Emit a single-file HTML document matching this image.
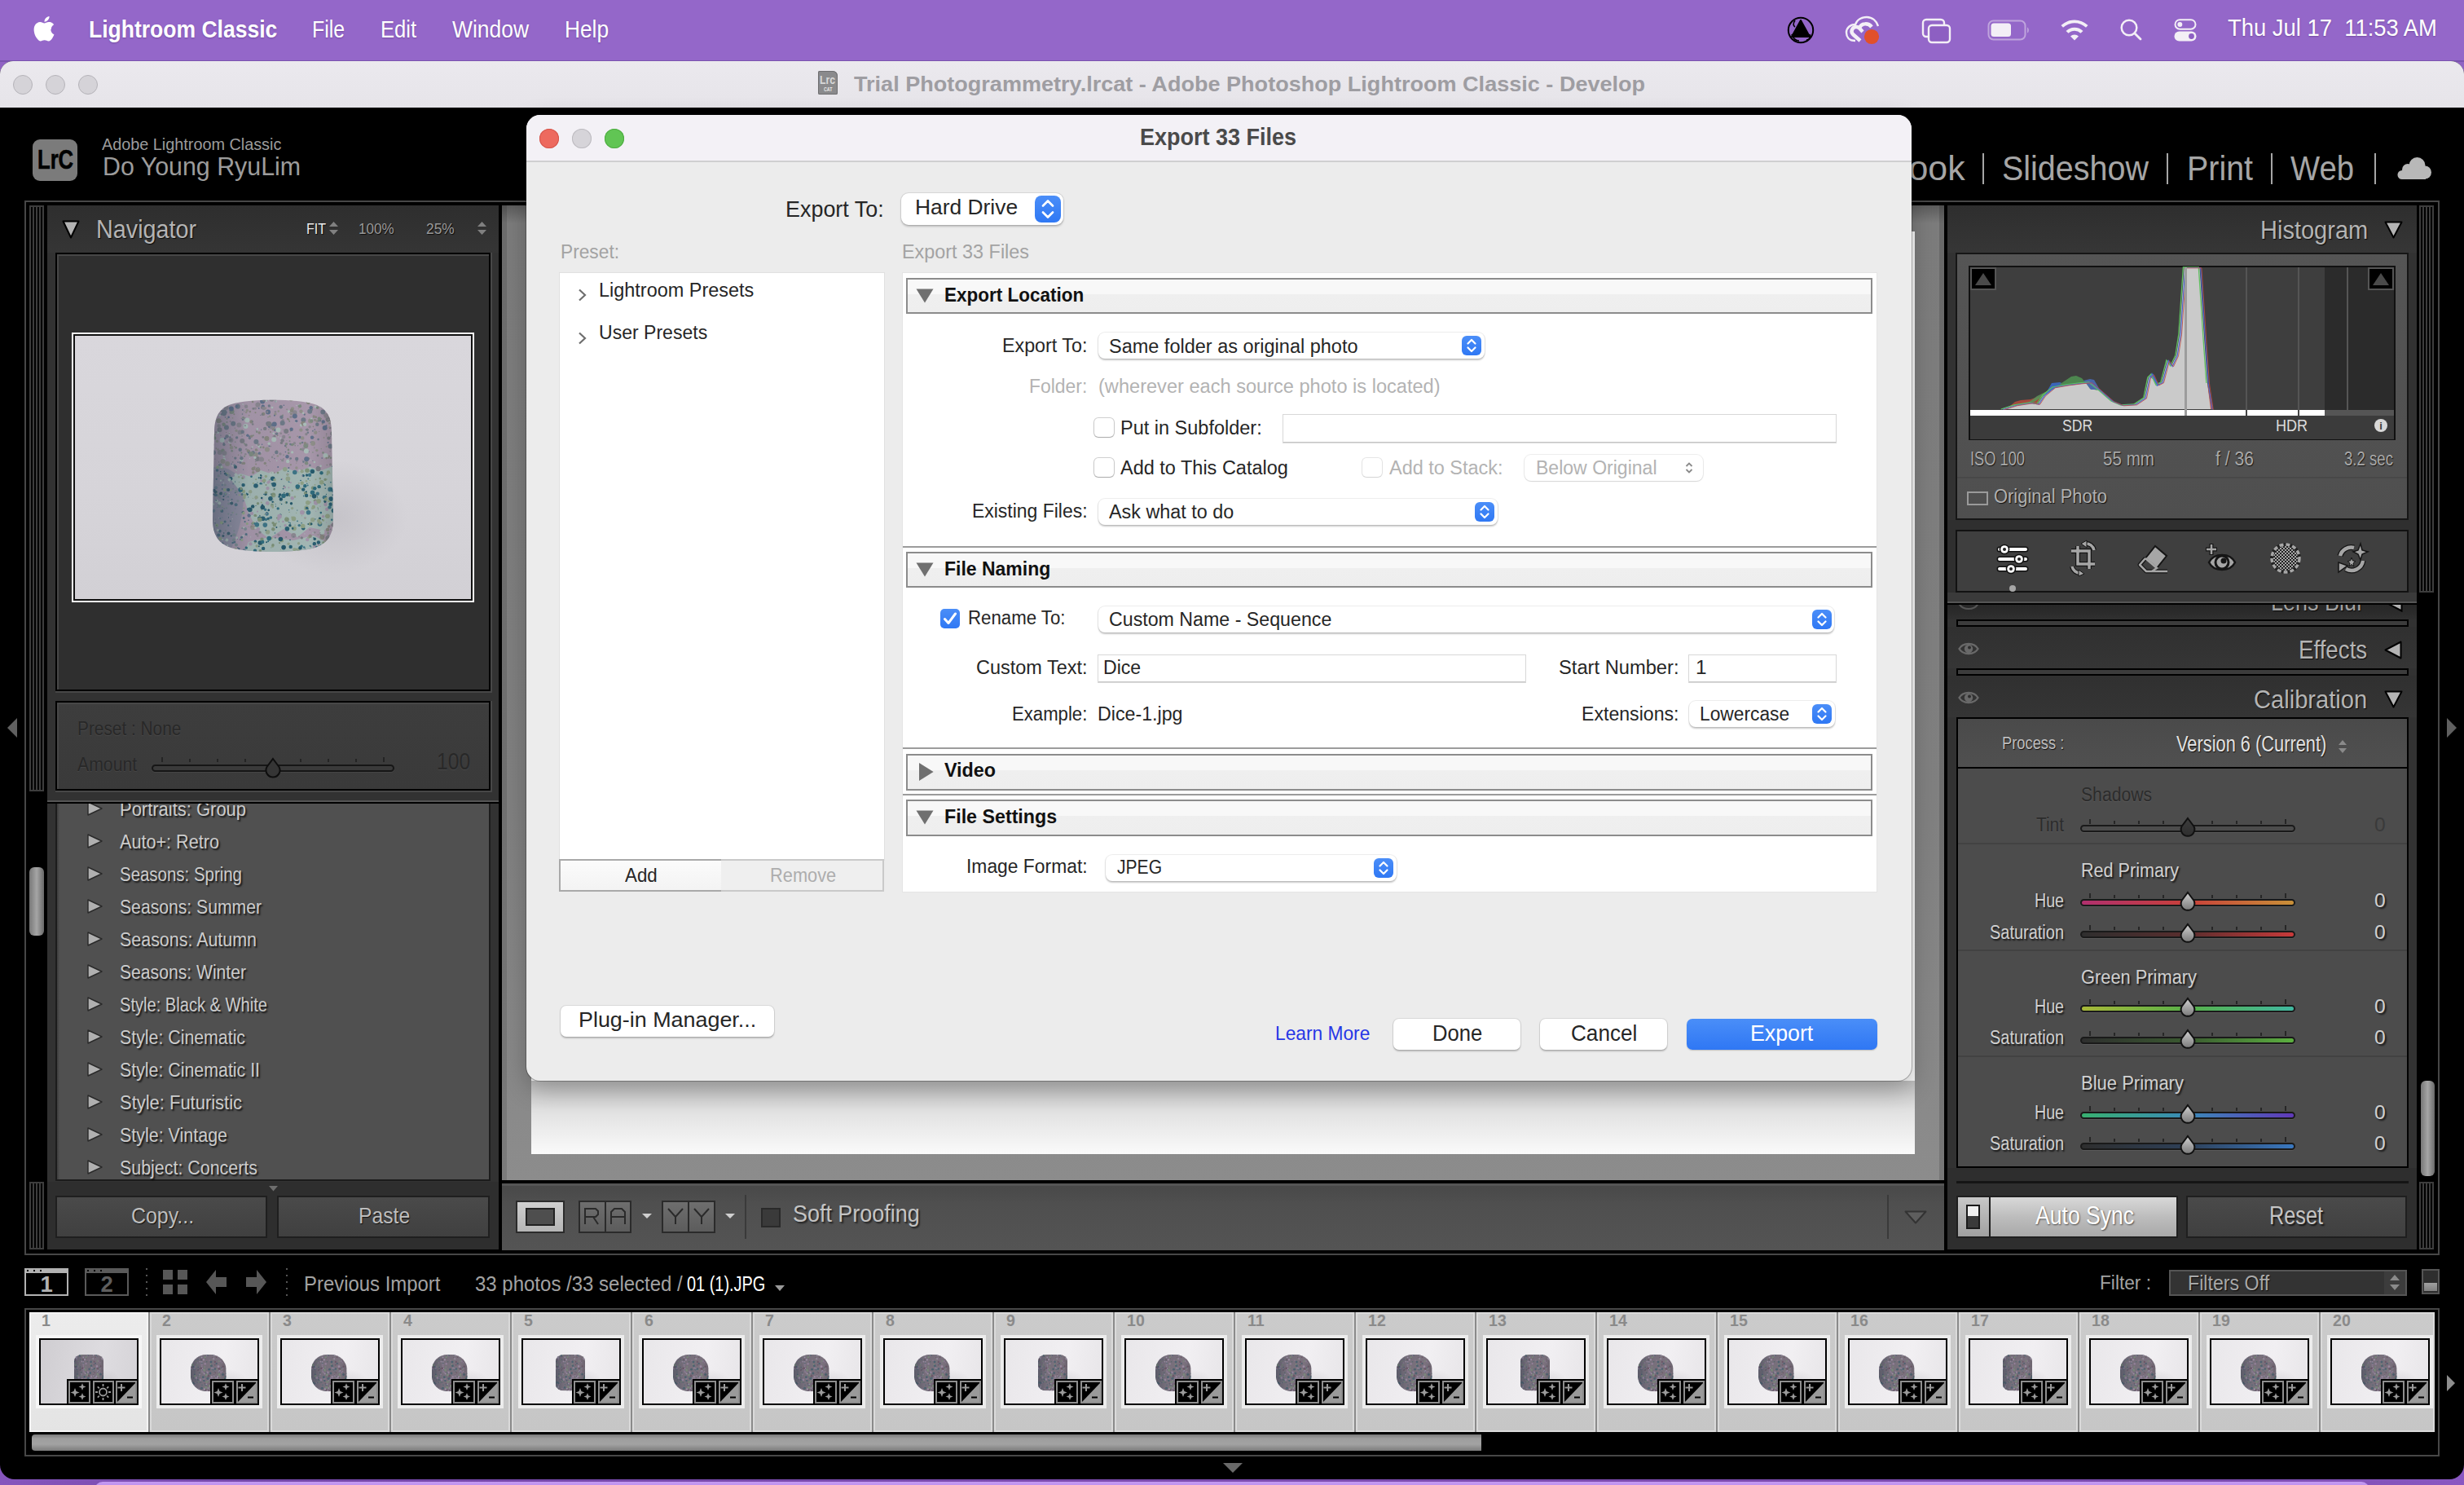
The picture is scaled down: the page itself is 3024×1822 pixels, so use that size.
<!DOCTYPE html><html><head><meta charset="utf-8"><style>
*{margin:0;padding:0;box-sizing:border-box}
html,body{width:3024px;height:1822px;overflow:hidden;background:#9063c4;font-family:"Liberation Sans",sans-serif}
.r{position:absolute}
.t{position:absolute;white-space:pre;line-height:1;transform-origin:0 0}
svg{position:absolute;overflow:visible}
</style></head><body>
<svg style="position:absolute;width:0;height:0;left:0;top:0" width="0" height="0"><defs><clipPath id="dclip"><path d="M24 7 C45 0 105 0 126 7 C142 12 147 24 147 42 L149 148 C149 170 140 181 118 185 C95 189 55 189 32 185 C10 181 1 170 1 148 L3 42 C3 24 8 12 24 7Z"/></clipPath><linearGradient id="dgrad" x1="0" y1="0" x2="0" y2="1"><stop offset="0" stop-color="#a898ab"/><stop offset="1" stop-color="#a495a8"/></linearGradient><linearGradient id="dshade" x1="0" y1="0" x2="1" y2="0"><stop offset="0" stop-color="#203040" stop-opacity="0.35"/><stop offset="0.3" stop-color="#203040" stop-opacity="0.05"/><stop offset="0.8" stop-color="#000" stop-opacity="0"/><stop offset="1" stop-color="#000" stop-opacity="0.12"/></linearGradient><symbol id="dice" viewBox="0 0 150 188" preserveAspectRatio="none"><g clip-path="url(#dclip)"><rect width="150" height="188" fill="url(#dgrad)"/><path d="M0 85 C15 82 28 88 36 100 C42 125 38 155 22 188 L0 188Z" fill="#7c8799" opacity="0.55"/><path d="M22,98 L35,92 L48,96 L60,88 L75,93 L90,85 L105,90 L120,84 L135,88 L150,82 L150,150 L138,162 L120,158 L105,170 L88,160 L70,172 L55,160 L45,140 L38,118Z" fill="#a2b6b3"/><path d="M45,176 L70,170 L100,174 L125,168 L140,176 L130,188 L40,188Z" fill="#a2b6b3"/><circle cx="48.6" cy="28.4" r="2.2" fill="#86867f"/><circle cx="10.9" cy="100.7" r="1.1" fill="#a8b8b4"/><circle cx="8.7" cy="95.4" r="0.6" fill="#4f6f80"/><circle cx="65.0" cy="13.1" r="0.6" fill="#7d8a80"/><circle cx="8.9" cy="106.3" r="0.8" fill="#7c8a90"/><circle cx="94.1" cy="178.2" r="1.7" fill="#8fa08a"/><circle cx="7.4" cy="41.6" r="1.7" fill="#a9bcb8"/><circle cx="43.4" cy="27.1" r="0.6" fill="#8a8790"/><circle cx="84.0" cy="128.2" r="0.6" fill="#7c9078"/><circle cx="55.9" cy="103.0" r="0.6" fill="#2f6b7c"/><circle cx="92.9" cy="93.3" r="1.7" fill="#8fa08a"/><circle cx="116.6" cy="87.5" r="1.3" fill="#26586a"/><circle cx="45.0" cy="149.3" r="0.8" fill="#4f6f80"/><circle cx="86.2" cy="98.7" r="1.0" fill="#a093a8"/><circle cx="43.2" cy="184.3" r="0.6" fill="#8fa08a"/><circle cx="24.7" cy="64.3" r="1.3" fill="#7d8a80"/><circle cx="5.9" cy="125.6" r="2.0" fill="#a8b8b4"/><circle cx="118.4" cy="153.9" r="1.0" fill="#26586a"/><circle cx="89.2" cy="109.0" r="1.3" fill="#2a5f72"/><circle cx="126.0" cy="177.6" r="1.3" fill="#2a5f72"/><circle cx="9.1" cy="131.9" r="2.0" fill="#7c8a90"/><circle cx="123.3" cy="53.5" r="1.3" fill="#5f708a"/><circle cx="3.4" cy="86.8" r="0.8" fill="#a8b8b4"/><circle cx="17.6" cy="11.1" r="3.0" fill="#8a8790"/><circle cx="19.4" cy="46.6" r="1.3" fill="#8f8f8a"/><circle cx="12.1" cy="84.4" r="2.0" fill="#8d9f84"/><circle cx="132.5" cy="154.0" r="2.8" fill="#3d7486"/><circle cx="106.0" cy="185.5" r="2.2" fill="#8fa08a"/><circle cx="143.7" cy="28.4" r="0.8" fill="#a9bcb8"/><circle cx="34.8" cy="43.9" r="1.3" fill="#a9bcb8"/><circle cx="39.4" cy="0.8" r="1.3" fill="#5f708a"/><circle cx="91.5" cy="59.9" r="0.8" fill="#86867f"/><circle cx="68.5" cy="163.7" r="2.8" fill="#8fa08a"/><circle cx="59.7" cy="74.1" r="1.3" fill="#7d8a80"/><circle cx="9.3" cy="12.7" r="0.8" fill="#8f8f8a"/><circle cx="24.3" cy="63.9" r="0.6" fill="#7a7d84"/><circle cx="0.0" cy="28.4" r="0.6" fill="#5f708a"/><circle cx="92.1" cy="13.2" r="0.8" fill="#7d8a80"/><circle cx="22.3" cy="47.4" r="1.0" fill="#5f708a"/><circle cx="71.1" cy="21.7" r="1.3" fill="#8f8f8a"/><circle cx="72.1" cy="58.6" r="0.8" fill="#7a7d84"/><circle cx="112.5" cy="139.2" r="1.3" fill="#8d9f84"/><circle cx="77.5" cy="38.6" r="1.7" fill="#5f708a"/><circle cx="22.0" cy="102.1" r="0.6" fill="#a8b8b4"/><circle cx="44.7" cy="120.9" r="0.6" fill="#3d7486"/><circle cx="77.8" cy="170.8" r="1.0" fill="#6e7a88"/><circle cx="79.9" cy="146.5" r="1.0" fill="#7c9078"/><circle cx="92.0" cy="148.2" r="2.8" fill="#7c9078"/><circle cx="120.9" cy="153.8" r="2.2" fill="#7c9078"/><circle cx="30.0" cy="92.6" r="0.6" fill="#4f6f80"/><circle cx="118.5" cy="88.8" r="0.8" fill="#26586a"/><circle cx="67.1" cy="176.2" r="1.0" fill="#26586a"/><circle cx="12.1" cy="19.2" r="1.3" fill="#6e7a88"/><circle cx="50.7" cy="90.7" r="1.7" fill="#86867f"/><circle cx="71.9" cy="122.8" r="2.8" fill="#2a5f72"/><circle cx="125.2" cy="22.5" r="1.3" fill="#6e7a88"/><circle cx="71.7" cy="33.6" r="3.0" fill="#5f708a"/><circle cx="13.0" cy="177.9" r="1.5" fill="#3e6070"/><circle cx="60.2" cy="178.0" r="2.2" fill="#8d9f84"/><circle cx="25.5" cy="23.9" r="0.8" fill="#8f8f8a"/><circle cx="121.0" cy="27.5" r="3.0" fill="#8f8f8a"/><circle cx="98.6" cy="65.9" r="1.7" fill="#a9bcb8"/><circle cx="3.2" cy="150.3" r="0.6" fill="#a8b8b4"/><circle cx="112.4" cy="26.2" r="3.0" fill="#6e7a88"/><circle cx="123.9" cy="39.7" r="1.0" fill="#6e7a88"/><circle cx="43.9" cy="45.2" r="1.7" fill="#5f708a"/><circle cx="38.9" cy="78.8" r="0.8" fill="#86867f"/><circle cx="136.5" cy="66.5" r="1.3" fill="#7d8a80"/><circle cx="124.1" cy="165.1" r="0.8" fill="#a9bcb8"/><circle cx="78.5" cy="3.5" r="1.3" fill="#a9bcb8"/><circle cx="91.3" cy="145.9" r="0.8" fill="#8d9f84"/><circle cx="21.2" cy="116.4" r="0.6" fill="#a8b8b4"/><circle cx="9.3" cy="128.3" r="2.0" fill="#a8b8b4"/><circle cx="72.4" cy="146.0" r="1.7" fill="#2f6b7c"/><circle cx="37.3" cy="52.1" r="3.0" fill="#7a7d84"/><circle cx="76.2" cy="105.6" r="2.8" fill="#2a5f72"/><circle cx="66.5" cy="115.2" r="1.7" fill="#7c9078"/><circle cx="103.9" cy="85.0" r="1.7" fill="#8f8f8a"/><circle cx="76.2" cy="46.6" r="1.7" fill="#8a8790"/><circle cx="138.4" cy="167.8" r="0.8" fill="#8f8f8a"/><circle cx="20.6" cy="22.9" r="1.3" fill="#5f708a"/><circle cx="10.9" cy="45.2" r="0.6" fill="#6e7a88"/><circle cx="100.4" cy="147.4" r="2.8" fill="#8d9f84"/><circle cx="140.9" cy="121.0" r="1.0" fill="#8d9f84"/><circle cx="38.0" cy="25.8" r="1.3" fill="#6e7a88"/><circle cx="112.0" cy="17.7" r="1.3" fill="#a9bcb8"/><circle cx="148.5" cy="156.5" r="0.8" fill="#7d8a80"/><circle cx="149.1" cy="75.9" r="1.3" fill="#6e7a88"/><circle cx="53.5" cy="17.3" r="1.0" fill="#86867f"/><circle cx="50.7" cy="86.2" r="2.2" fill="#86867f"/><circle cx="57.7" cy="97.3" r="1.0" fill="#2a5f72"/><circle cx="16.9" cy="172.7" r="0.8" fill="#4f6f80"/><circle cx="12.6" cy="51.1" r="3.0" fill="#a9bcb8"/><circle cx="40.6" cy="24.4" r="1.3" fill="#8a8790"/><circle cx="60.9" cy="100.9" r="1.7" fill="#a093a8"/><circle cx="105.1" cy="16.8" r="0.6" fill="#a9bcb8"/><circle cx="63.8" cy="13.6" r="0.6" fill="#7a7d84"/><circle cx="120.2" cy="15.7" r="3.0" fill="#6e7a88"/><circle cx="10.0" cy="162.2" r="1.5" fill="#4f6f80"/><circle cx="50.9" cy="104.0" r="1.0" fill="#8d9f84"/><circle cx="6.5" cy="133.4" r="0.6" fill="#6a8090"/><circle cx="39.3" cy="34.1" r="1.0" fill="#8a8790"/><circle cx="79.7" cy="38.7" r="1.3" fill="#a9bcb8"/><circle cx="40.6" cy="151.1" r="1.1" fill="#4f6f80"/><circle cx="2.3" cy="137.8" r="2.0" fill="#6a8090"/><circle cx="77.1" cy="46.2" r="1.3" fill="#7a7d84"/><circle cx="98.7" cy="122.2" r="2.2" fill="#a093a8"/><circle cx="81.9" cy="167.1" r="1.7" fill="#8a8790"/><circle cx="103.2" cy="184.7" r="1.0" fill="#7c9078"/><circle cx="124.8" cy="132.9" r="2.2" fill="#8d9f84"/><circle cx="60.7" cy="65.3" r="0.6" fill="#a9bcb8"/><circle cx="2.1" cy="117.6" r="1.1" fill="#3e6070"/><circle cx="24.5" cy="15.9" r="3.0" fill="#7d8a80"/><circle cx="130.6" cy="126.1" r="1.0" fill="#7c9078"/><circle cx="103.9" cy="8.5" r="0.8" fill="#a9bcb8"/><circle cx="40.4" cy="0.7" r="1.0" fill="#5f708a"/><circle cx="145.9" cy="102.8" r="0.8" fill="#2f6b7c"/><circle cx="144.9" cy="58.2" r="1.0" fill="#a9bcb8"/><circle cx="0.2" cy="71.7" r="1.3" fill="#8a8790"/><circle cx="75.4" cy="37.8" r="1.7" fill="#86867f"/><circle cx="13.6" cy="153.6" r="0.8" fill="#3e6070"/><circle cx="88.0" cy="74.1" r="1.0" fill="#8a8790"/><circle cx="94.5" cy="15.9" r="1.7" fill="#a9bcb8"/><circle cx="98.6" cy="134.6" r="1.7" fill="#8fa08a"/><circle cx="114.6" cy="135.5" r="1.3" fill="#8d9f84"/><circle cx="42.6" cy="116.3" r="0.8" fill="#2f6b7c"/><circle cx="123.7" cy="134.4" r="1.7" fill="#8fa08a"/><circle cx="110.1" cy="152.7" r="0.8" fill="#2f6b7c"/><circle cx="124.0" cy="109.8" r="2.2" fill="#7c9078"/><circle cx="12.8" cy="7.9" r="2.2" fill="#5f708a"/><circle cx="143.9" cy="70.8" r="1.3" fill="#86867f"/><circle cx="94.2" cy="117.7" r="2.2" fill="#7c9078"/><circle cx="73.4" cy="0.6" r="3.0" fill="#7a7d84"/><circle cx="112.2" cy="94.6" r="1.7" fill="#2a5f72"/><circle cx="98.9" cy="12.4" r="2.2" fill="#8f8f8a"/><circle cx="37.8" cy="14.0" r="1.0" fill="#6e7a88"/><circle cx="109.4" cy="38.6" r="2.2" fill="#8f8f8a"/><circle cx="74.1" cy="71.9" r="1.3" fill="#8a8790"/><circle cx="115.0" cy="116.0" r="2.2" fill="#7c9078"/><circle cx="11.6" cy="27.7" r="1.0" fill="#8a8790"/><circle cx="93.2" cy="25.1" r="1.3" fill="#86867f"/><circle cx="72.9" cy="182.8" r="0.6" fill="#7c9078"/><circle cx="101.4" cy="54.7" r="1.7" fill="#8a8790"/><circle cx="69.7" cy="87.7" r="0.6" fill="#6e7a88"/><circle cx="46.8" cy="16.1" r="1.3" fill="#86867f"/><circle cx="43.4" cy="14.4" r="1.7" fill="#8f8f8a"/><circle cx="149.1" cy="72.7" r="0.8" fill="#7a7d84"/><circle cx="87.2" cy="26.6" r="1.7" fill="#8a8790"/><circle cx="142.9" cy="24.9" r="3.0" fill="#8a8790"/><circle cx="133.0" cy="132.2" r="0.8" fill="#a093a8"/><circle cx="134.7" cy="91.4" r="0.6" fill="#8d9f84"/><circle cx="0.5" cy="92.4" r="1.5" fill="#3e6070"/><circle cx="45.3" cy="26.5" r="1.0" fill="#7d8a80"/><circle cx="47.4" cy="158.0" r="0.6" fill="#5f708a"/><circle cx="112.6" cy="157.8" r="0.6" fill="#7c9078"/><circle cx="107.0" cy="169.5" r="1.0" fill="#8a8790"/><circle cx="55.8" cy="73.9" r="3.0" fill="#7a7d84"/><circle cx="54.1" cy="80.5" r="1.0" fill="#86867f"/><circle cx="42.1" cy="9.7" r="2.2" fill="#8a8790"/><circle cx="95.2" cy="28.0" r="1.0" fill="#7d8a80"/><circle cx="76.6" cy="35.7" r="1.0" fill="#7d8a80"/><circle cx="132.6" cy="152.6" r="2.2" fill="#8fa08a"/><circle cx="137.0" cy="176.9" r="1.7" fill="#7c9078"/><circle cx="107.9" cy="9.3" r="2.2" fill="#7d8a80"/><circle cx="67.6" cy="141.5" r="2.2" fill="#3d7486"/><circle cx="72.8" cy="171.4" r="1.7" fill="#8d9f84"/><circle cx="25.6" cy="78.0" r="1.0" fill="#8a8790"/><circle cx="38.4" cy="138.9" r="1.1" fill="#3e6070"/><circle cx="98.4" cy="56.6" r="1.7" fill="#7d8a80"/><circle cx="18.0" cy="120.9" r="0.6" fill="#6a8090"/><circle cx="75.1" cy="152.6" r="1.7" fill="#7c9078"/><circle cx="67.9" cy="62.6" r="3.0" fill="#8f8f8a"/><circle cx="64.1" cy="103.0" r="0.8" fill="#2a5f72"/><circle cx="26.2" cy="104.5" r="1.1" fill="#6a8090"/><circle cx="55.2" cy="152.2" r="0.8" fill="#2f6b7c"/><circle cx="112.4" cy="77.6" r="1.3" fill="#6e7a88"/><circle cx="56.5" cy="63.6" r="0.6" fill="#8f8f8a"/><circle cx="41.6" cy="181.9" r="0.8" fill="#7c8a90"/><circle cx="75.5" cy="118.4" r="2.8" fill="#7c9078"/><circle cx="13.9" cy="168.6" r="1.5" fill="#3e6070"/><circle cx="96.9" cy="81.2" r="1.0" fill="#86867f"/><circle cx="19.1" cy="79.9" r="3.0" fill="#8f8f8a"/><circle cx="145.2" cy="92.1" r="0.6" fill="#8fa08a"/><circle cx="139.5" cy="174.5" r="1.7" fill="#8f8f8a"/><circle cx="145.8" cy="46.7" r="0.6" fill="#6e7a88"/><circle cx="23.2" cy="98.2" r="2.2" fill="#2a5f72"/><circle cx="141.2" cy="135.7" r="2.2" fill="#a093a8"/><circle cx="12.8" cy="146.0" r="0.6" fill="#6a8090"/><circle cx="34.9" cy="172.9" r="1.1" fill="#6a8090"/><circle cx="94.0" cy="99.3" r="1.3" fill="#2a5f72"/><circle cx="14.9" cy="56.5" r="1.7" fill="#6e7a88"/><circle cx="58.2" cy="42.0" r="1.7" fill="#86867f"/><circle cx="1.6" cy="56.7" r="1.3" fill="#8a8790"/><circle cx="143.8" cy="121.2" r="0.8" fill="#a093a8"/><circle cx="78.9" cy="102.8" r="0.6" fill="#8fa08a"/><circle cx="105.7" cy="57.8" r="0.6" fill="#6e7a88"/><circle cx="74.7" cy="126.8" r="1.3" fill="#2a5f72"/><circle cx="38.6" cy="125.5" r="1.1" fill="#6a8090"/><circle cx="73.9" cy="130.8" r="2.2" fill="#8fa08a"/><circle cx="54.3" cy="74.5" r="0.6" fill="#8a8790"/><circle cx="110.9" cy="94.9" r="0.8" fill="#a093a8"/><circle cx="145.5" cy="58.6" r="3.0" fill="#6e7a88"/><circle cx="34.6" cy="41.6" r="3.0" fill="#8a8790"/><circle cx="16.4" cy="117.2" r="2.0" fill="#6a8090"/><circle cx="134.5" cy="91.2" r="2.2" fill="#2f6b7c"/><circle cx="142.3" cy="27.5" r="1.3" fill="#86867f"/><circle cx="31.9" cy="183.1" r="0.8" fill="#3e6070"/><circle cx="7.8" cy="11.3" r="1.3" fill="#8f8f8a"/><circle cx="134.7" cy="166.1" r="2.2" fill="#7a7d84"/><circle cx="149.6" cy="175.1" r="1.0" fill="#6e7a88"/><circle cx="27.8" cy="175.9" r="1.5" fill="#4f6f80"/><circle cx="46.8" cy="136.4" r="2.8" fill="#26586a"/><circle cx="147.7" cy="83.2" r="0.6" fill="#2f6b7c"/><circle cx="11.7" cy="15.2" r="1.3" fill="#7a7d84"/><circle cx="84.2" cy="142.7" r="1.3" fill="#26586a"/><circle cx="115.3" cy="58.0" r="3.0" fill="#7d8a80"/><circle cx="13.2" cy="132.6" r="0.8" fill="#8d9f84"/><circle cx="81.2" cy="83.9" r="1.0" fill="#5f708a"/><circle cx="110.6" cy="89.2" r="2.2" fill="#8fa08a"/><circle cx="37.2" cy="117.6" r="1.5" fill="#4f6f80"/><circle cx="56.3" cy="87.2" r="3.0" fill="#86867f"/><circle cx="38.6" cy="140.5" r="2.0" fill="#8d9f84"/><circle cx="54.4" cy="63.0" r="1.7" fill="#86867f"/><circle cx="39.3" cy="134.7" r="1.1" fill="#8d9f84"/><circle cx="44.6" cy="135.7" r="1.7" fill="#2a5f72"/><circle cx="3.6" cy="44.0" r="1.3" fill="#8f8f8a"/><circle cx="143.1" cy="72.7" r="1.0" fill="#7d8a80"/><circle cx="122.2" cy="24.9" r="1.3" fill="#a9bcb8"/><circle cx="1.3" cy="175.0" r="1.1" fill="#7c8a90"/><circle cx="115.9" cy="114.2" r="1.0" fill="#26586a"/><circle cx="69.1" cy="147.4" r="1.7" fill="#2a5f72"/><circle cx="76.8" cy="73.6" r="0.8" fill="#6e7a88"/><circle cx="61.2" cy="122.1" r="1.3" fill="#26586a"/><circle cx="24.1" cy="80.2" r="0.6" fill="#4f6f80"/><circle cx="39.7" cy="15.8" r="0.6" fill="#7d8a80"/><circle cx="74.8" cy="133.4" r="1.3" fill="#8d9f84"/><circle cx="35.1" cy="78.4" r="1.7" fill="#6e7a88"/><circle cx="112.2" cy="159.2" r="2.2" fill="#2a5f72"/><circle cx="117.0" cy="55.3" r="1.0" fill="#8a8790"/><circle cx="55.9" cy="138.8" r="0.8" fill="#a093a8"/><circle cx="37.1" cy="46.1" r="0.8" fill="#8a8790"/><circle cx="132.6" cy="108.7" r="1.0" fill="#2a5f72"/><circle cx="59.4" cy="186.6" r="1.7" fill="#7c9078"/><circle cx="97.4" cy="18.9" r="1.3" fill="#86867f"/><circle cx="15.3" cy="89.3" r="0.8" fill="#3e6070"/><circle cx="137.2" cy="7.6" r="1.0" fill="#6e7a88"/><circle cx="17.9" cy="35.6" r="3.0" fill="#6e7a88"/><circle cx="139.5" cy="70.0" r="3.0" fill="#a9bcb8"/><circle cx="67.4" cy="48.9" r="3.0" fill="#86867f"/><circle cx="15.9" cy="112.1" r="2.0" fill="#8d9f84"/><circle cx="32.6" cy="69.3" r="0.8" fill="#86867f"/><circle cx="30.6" cy="47.9" r="1.7" fill="#6e7a88"/><circle cx="122.2" cy="153.9" r="1.3" fill="#26586a"/><circle cx="27.8" cy="58.7" r="0.8" fill="#86867f"/><circle cx="119.3" cy="103.0" r="0.6" fill="#8fa08a"/><circle cx="15.2" cy="74.3" r="1.7" fill="#a9bcb8"/><circle cx="95.9" cy="17.1" r="0.8" fill="#7d8a80"/><circle cx="104.3" cy="77.0" r="1.0" fill="#8a8790"/><circle cx="62.7" cy="9.7" r="2.2" fill="#5f708a"/><circle cx="62.1" cy="3.4" r="3.0" fill="#5f708a"/><circle cx="96.7" cy="73.5" r="1.3" fill="#6e7a88"/><circle cx="141.3" cy="81.6" r="0.8" fill="#7d8a80"/><circle cx="17.0" cy="17.0" r="1.7" fill="#5f708a"/><circle cx="69.1" cy="30.6" r="0.6" fill="#86867f"/><circle cx="82.7" cy="120.4" r="1.3" fill="#2a5f72"/><circle cx="85.9" cy="174.3" r="2.2" fill="#8d9f84"/><circle cx="21.9" cy="53.3" r="1.7" fill="#a9bcb8"/><circle cx="138.8" cy="20.5" r="1.3" fill="#6e7a88"/><circle cx="45.2" cy="157.4" r="0.6" fill="#8f8f8a"/><circle cx="47.2" cy="114.2" r="2.2" fill="#8fa08a"/><circle cx="12.9" cy="133.9" r="0.8" fill="#7c8a90"/><circle cx="117.9" cy="41.8" r="1.3" fill="#6e7a88"/><circle cx="124.4" cy="34.4" r="0.8" fill="#86867f"/><circle cx="60.0" cy="97.4" r="1.3" fill="#26586a"/><circle cx="18.5" cy="46.4" r="2.2" fill="#6e7a88"/><circle cx="6.2" cy="105.7" r="0.6" fill="#7c8a90"/><circle cx="125.7" cy="22.1" r="1.7" fill="#8f8f8a"/><circle cx="82.5" cy="117.9" r="1.0" fill="#8fa08a"/><circle cx="46.2" cy="46.9" r="1.3" fill="#5f708a"/><circle cx="67.0" cy="82.4" r="0.6" fill="#86867f"/><circle cx="92.8" cy="92.0" r="0.8" fill="#a093a8"/><circle cx="114.5" cy="146.6" r="1.3" fill="#8d9f84"/><circle cx="121.6" cy="75.3" r="0.6" fill="#a9bcb8"/><circle cx="53.8" cy="68.7" r="3.0" fill="#8f8f8a"/><circle cx="75.7" cy="123.5" r="0.6" fill="#8d9f84"/><circle cx="12.3" cy="137.9" r="2.0" fill="#4f6f80"/><circle cx="8.1" cy="94.7" r="1.5" fill="#7c8a90"/><circle cx="142.6" cy="25.6" r="3.0" fill="#7a7d84"/><circle cx="149.4" cy="137.6" r="2.8" fill="#2a5f72"/><circle cx="29.1" cy="184.6" r="1.5" fill="#8d9f84"/><circle cx="143.5" cy="172.2" r="0.8" fill="#6e7a88"/><circle cx="9.8" cy="66.0" r="3.0" fill="#8a8790"/><circle cx="23.8" cy="168.5" r="1.1" fill="#3e6070"/><circle cx="21.5" cy="94.4" r="1.5" fill="#6a8090"/><circle cx="88.8" cy="115.8" r="0.8" fill="#26586a"/><circle cx="55.8" cy="37.4" r="1.3" fill="#a9bcb8"/><circle cx="95.5" cy="52.3" r="1.0" fill="#7d8a80"/><circle cx="25.3" cy="147.6" r="0.6" fill="#a8b8b4"/><circle cx="7.3" cy="161.4" r="1.5" fill="#a8b8b4"/><circle cx="78.2" cy="129.5" r="0.6" fill="#3d7486"/><circle cx="148.9" cy="118.4" r="1.3" fill="#26586a"/><circle cx="39.7" cy="186.2" r="2.0" fill="#6a8090"/><circle cx="54.0" cy="143.8" r="1.3" fill="#7c9078"/><circle cx="26.5" cy="139.8" r="0.6" fill="#8d9f84"/><circle cx="123.0" cy="47.7" r="2.2" fill="#5f708a"/><circle cx="110.0" cy="140.5" r="0.8" fill="#8d9f84"/><circle cx="43.6" cy="117.6" r="1.3" fill="#26586a"/><circle cx="134.3" cy="24.8" r="0.8" fill="#86867f"/><circle cx="3.3" cy="0.5" r="1.0" fill="#8a8790"/><circle cx="16.0" cy="67.1" r="0.8" fill="#7d8a80"/><circle cx="87.5" cy="110.7" r="0.8" fill="#26586a"/><circle cx="93.6" cy="89.3" r="0.8" fill="#2f6b7c"/><circle cx="140.5" cy="45.8" r="0.8" fill="#8f8f8a"/><circle cx="14.4" cy="120.0" r="1.1" fill="#3e6070"/><circle cx="121.7" cy="181.8" r="0.6" fill="#26586a"/><circle cx="89.2" cy="108.8" r="1.7" fill="#a093a8"/><circle cx="37.3" cy="169.9" r="0.6" fill="#4f6f80"/><circle cx="79.7" cy="76.3" r="0.8" fill="#a9bcb8"/><circle cx="8.8" cy="146.4" r="0.6" fill="#a8b8b4"/><circle cx="82.6" cy="176.9" r="0.8" fill="#8fa08a"/><circle cx="29.9" cy="114.3" r="2.0" fill="#7c8a90"/><circle cx="96.2" cy="152.9" r="0.8" fill="#3d7486"/><circle cx="9.6" cy="117.7" r="1.5" fill="#7c8a90"/><circle cx="80.8" cy="70.5" r="1.3" fill="#8f8f8a"/><circle cx="12.1" cy="123.2" r="0.8" fill="#6a8090"/><circle cx="149.5" cy="49.1" r="2.2" fill="#86867f"/><circle cx="18.5" cy="167.6" r="1.1" fill="#7c8a90"/><circle cx="7.9" cy="119.5" r="1.5" fill="#7c8a90"/><circle cx="118.3" cy="98.4" r="1.0" fill="#3d7486"/><circle cx="96.3" cy="181.4" r="0.8" fill="#2a5f72"/><circle cx="132.0" cy="2.9" r="1.0" fill="#6e7a88"/><circle cx="126.3" cy="38.1" r="0.8" fill="#5f708a"/><circle cx="28.8" cy="73.1" r="1.7" fill="#6e7a88"/><circle cx="56.9" cy="160.2" r="2.2" fill="#a093a8"/><circle cx="70.8" cy="99.8" r="0.6" fill="#2f6b7c"/><circle cx="65.6" cy="136.2" r="1.7" fill="#3d7486"/><circle cx="118.4" cy="73.6" r="1.7" fill="#7a7d84"/><circle cx="84.8" cy="32.3" r="0.6" fill="#86867f"/><circle cx="16.8" cy="116.9" r="0.8" fill="#8d9f84"/><circle cx="146.6" cy="131.7" r="0.6" fill="#2f6b7c"/><circle cx="20.8" cy="121.0" r="0.6" fill="#7c8a90"/><circle cx="10.2" cy="8.8" r="3.0" fill="#5f708a"/><circle cx="29.9" cy="179.5" r="2.0" fill="#7c8a90"/><circle cx="9.9" cy="163.1" r="1.5" fill="#4f6f80"/><circle cx="37.0" cy="38.2" r="0.6" fill="#86867f"/><circle cx="142.4" cy="171.3" r="3.0" fill="#7a7d84"/><circle cx="123.8" cy="118.7" r="1.0" fill="#a093a8"/><circle cx="15.0" cy="18.4" r="3.0" fill="#6e7a88"/><circle cx="44.2" cy="63.3" r="1.0" fill="#86867f"/><circle cx="52.6" cy="174.9" r="0.6" fill="#26586a"/><circle cx="136.6" cy="144.6" r="1.7" fill="#a093a8"/><circle cx="127.7" cy="116.2" r="0.6" fill="#8fa08a"/><circle cx="4.7" cy="97.5" r="0.6" fill="#8d9f84"/><circle cx="70.3" cy="9.0" r="1.7" fill="#6e7a88"/><circle cx="107.2" cy="155.6" r="1.7" fill="#3d7486"/><circle cx="25.6" cy="0.2" r="0.8" fill="#8a8790"/><circle cx="114.3" cy="183.8" r="0.6" fill="#26586a"/><circle cx="73.6" cy="92.4" r="3.0" fill="#a9bcb8"/><circle cx="145.1" cy="111.4" r="2.8" fill="#3d7486"/><circle cx="86.7" cy="29.9" r="3.0" fill="#6e7a88"/><circle cx="140.7" cy="43.5" r="0.8" fill="#7a7d84"/><circle cx="140.8" cy="144.2" r="1.3" fill="#2a5f72"/><circle cx="94.2" cy="66.9" r="1.3" fill="#7d8a80"/><circle cx="133.8" cy="140.1" r="1.3" fill="#2f6b7c"/><circle cx="55.8" cy="57.0" r="1.3" fill="#a9bcb8"/><circle cx="56.9" cy="166.2" r="0.8" fill="#8f8f8a"/><circle cx="19.0" cy="111.7" r="2.0" fill="#7c8a90"/><circle cx="5.1" cy="109.3" r="2.0" fill="#6a8090"/><circle cx="130.2" cy="84.7" r="1.7" fill="#5f708a"/><circle cx="25.4" cy="82.5" r="1.1" fill="#a8b8b4"/><circle cx="34.7" cy="62.8" r="2.2" fill="#6e7a88"/><circle cx="76.2" cy="50.3" r="3.0" fill="#a9bcb8"/><circle cx="108.5" cy="183.3" r="2.2" fill="#26586a"/><circle cx="90.4" cy="65.5" r="0.8" fill="#5f708a"/><circle cx="143.4" cy="48.6" r="2.2" fill="#7a7d84"/><circle cx="24.7" cy="123.7" r="0.8" fill="#3e6070"/><circle cx="22.6" cy="27.9" r="1.0" fill="#8a8790"/><circle cx="65.2" cy="36.9" r="2.2" fill="#7a7d84"/><circle cx="42.1" cy="166.4" r="1.5" fill="#4f6f80"/><circle cx="1.9" cy="160.6" r="1.5" fill="#7c8a90"/><circle cx="33.4" cy="184.4" r="1.1" fill="#3e6070"/><circle cx="3.3" cy="48.4" r="2.2" fill="#7d8a80"/><circle cx="0.8" cy="45.5" r="3.0" fill="#7d8a80"/><circle cx="105.2" cy="110.4" r="2.2" fill="#8fa08a"/><circle cx="126.9" cy="125.6" r="2.2" fill="#7c9078"/><circle cx="101.9" cy="120.6" r="1.3" fill="#8fa08a"/><circle cx="47.0" cy="118.1" r="0.6" fill="#8fa08a"/><circle cx="36.4" cy="75.2" r="2.2" fill="#a9bcb8"/><circle cx="37.5" cy="79.6" r="1.3" fill="#86867f"/><circle cx="93.2" cy="77.0" r="2.2" fill="#a9bcb8"/><circle cx="134.2" cy="61.7" r="0.6" fill="#7d8a80"/><circle cx="124.8" cy="170.7" r="0.6" fill="#2f6b7c"/><circle cx="37.7" cy="41.0" r="2.2" fill="#6e7a88"/><circle cx="77.9" cy="19.0" r="1.7" fill="#8f8f8a"/><circle cx="81.2" cy="134.9" r="1.7" fill="#2f6b7c"/><circle cx="95.9" cy="155.8" r="1.7" fill="#26586a"/><circle cx="61.6" cy="178.2" r="0.8" fill="#8d9f84"/><circle cx="58.9" cy="143.4" r="0.6" fill="#26586a"/><circle cx="95.6" cy="47.5" r="1.3" fill="#7d8a80"/><circle cx="9.2" cy="14.1" r="1.3" fill="#5f708a"/><circle cx="87.0" cy="20.5" r="1.0" fill="#7d8a80"/><circle cx="141.0" cy="99.1" r="0.8" fill="#8fa08a"/><circle cx="69.3" cy="30.9" r="3.0" fill="#7a7d84"/><circle cx="121.4" cy="119.2" r="1.3" fill="#7c9078"/><circle cx="122.2" cy="27.5" r="2.2" fill="#7d8a80"/><circle cx="70.2" cy="55.3" r="1.7" fill="#a9bcb8"/><circle cx="117.0" cy="88.2" r="2.8" fill="#7c9078"/><circle cx="40.1" cy="70.7" r="1.0" fill="#7d8a80"/><circle cx="101.8" cy="90.5" r="2.8" fill="#3d7486"/><circle cx="53.7" cy="123.0" r="1.0" fill="#a093a8"/><circle cx="72.7" cy="117.2" r="0.6" fill="#26586a"/><circle cx="22.9" cy="57.0" r="1.3" fill="#86867f"/><circle cx="12.8" cy="106.1" r="1.1" fill="#6a8090"/><circle cx="79.6" cy="64.9" r="1.7" fill="#86867f"/><circle cx="98.6" cy="39.4" r="0.6" fill="#8a8790"/><circle cx="37.5" cy="19.1" r="0.8" fill="#6e7a88"/><circle cx="27.8" cy="85.0" r="0.8" fill="#6a8090"/><circle cx="135.6" cy="148.8" r="0.8" fill="#2a5f72"/><circle cx="100.3" cy="168.1" r="3.0" fill="#8a8790"/><circle cx="29.6" cy="130.2" r="2.0" fill="#4f6f80"/><circle cx="111.3" cy="82.5" r="0.6" fill="#7a7d84"/><circle cx="39.7" cy="44.0" r="0.8" fill="#8f8f8a"/><circle cx="74.0" cy="11.0" r="1.3" fill="#a9bcb8"/><circle cx="105.1" cy="46.4" r="0.8" fill="#86867f"/><circle cx="24.1" cy="60.3" r="2.2" fill="#8f8f8a"/><circle cx="99.8" cy="158.0" r="1.0" fill="#8fa08a"/><circle cx="62.8" cy="180.6" r="0.6" fill="#8d9f84"/><circle cx="95.6" cy="119.6" r="0.6" fill="#2f6b7c"/><circle cx="91.5" cy="128.3" r="1.0" fill="#2a5f72"/><circle cx="76.6" cy="91.1" r="0.8" fill="#86867f"/><circle cx="32.0" cy="78.1" r="0.8" fill="#5f708a"/><circle cx="14.2" cy="123.9" r="1.1" fill="#3e6070"/><circle cx="116.8" cy="104.2" r="0.8" fill="#3d7486"/><circle cx="65.3" cy="79.4" r="1.7" fill="#86867f"/><circle cx="124.0" cy="55.1" r="3.0" fill="#8f8f8a"/><circle cx="60.6" cy="94.7" r="1.0" fill="#26586a"/><circle cx="146.2" cy="123.1" r="2.8" fill="#2a5f72"/><circle cx="49.6" cy="59.6" r="1.0" fill="#a9bcb8"/><circle cx="88.0" cy="119.3" r="2.8" fill="#2f6b7c"/><circle cx="59.8" cy="104.2" r="1.3" fill="#2f6b7c"/><circle cx="59.8" cy="20.4" r="0.6" fill="#6e7a88"/><circle cx="123.3" cy="89.3" r="2.8" fill="#2f6b7c"/><circle cx="118.4" cy="171.0" r="1.7" fill="#8fa08a"/><circle cx="92.5" cy="117.8" r="2.2" fill="#2a5f72"/><circle cx="31.9" cy="125.4" r="1.5" fill="#7c8a90"/><circle cx="114.4" cy="19.1" r="0.8" fill="#86867f"/><circle cx="63.2" cy="18.9" r="2.2" fill="#86867f"/><circle cx="55.3" cy="154.7" r="2.8" fill="#3d7486"/><circle cx="84.3" cy="48.5" r="1.0" fill="#a9bcb8"/><circle cx="63.3" cy="59.9" r="1.3" fill="#86867f"/><circle cx="74.7" cy="98.2" r="2.8" fill="#2a5f72"/><circle cx="116.1" cy="79.2" r="2.2" fill="#7d8a80"/><circle cx="67.0" cy="2.7" r="1.3" fill="#a9bcb8"/><circle cx="71.3" cy="77.5" r="0.6" fill="#7a7d84"/><circle cx="96.7" cy="39.9" r="0.8" fill="#86867f"/><circle cx="64.0" cy="1.8" r="2.2" fill="#7a7d84"/><circle cx="148.0" cy="161.4" r="0.8" fill="#7a7d84"/><circle cx="19.3" cy="3.3" r="2.2" fill="#6e7a88"/><circle cx="67.6" cy="139.9" r="0.6" fill="#26586a"/><circle cx="116.1" cy="134.1" r="2.8" fill="#8d9f84"/><circle cx="109.5" cy="15.8" r="2.2" fill="#8f8f8a"/><circle cx="69.1" cy="175.3" r="1.0" fill="#2f6b7c"/><circle cx="107.6" cy="2.1" r="0.6" fill="#7a7d84"/><circle cx="58.3" cy="58.7" r="1.7" fill="#a9bcb8"/><circle cx="143.7" cy="157.0" r="1.7" fill="#86867f"/><circle cx="47.4" cy="178.4" r="2.2" fill="#a093a8"/><circle cx="70.5" cy="31.3" r="3.0" fill="#7a7d84"/><circle cx="54.5" cy="121.2" r="2.2" fill="#8fa08a"/><circle cx="71.5" cy="146.3" r="1.3" fill="#3d7486"/><circle cx="117.7" cy="106.6" r="1.0" fill="#3d7486"/><circle cx="9.1" cy="183.1" r="2.0" fill="#8d9f84"/><circle cx="130.4" cy="136.4" r="0.6" fill="#8d9f84"/><circle cx="90.2" cy="58.0" r="1.3" fill="#6e7a88"/><circle cx="56.5" cy="128.7" r="1.7" fill="#7c9078"/><circle cx="121.1" cy="53.3" r="0.6" fill="#5f708a"/><circle cx="39.5" cy="79.4" r="1.7" fill="#86867f"/><circle cx="43.3" cy="26.4" r="3.0" fill="#a9bcb8"/><circle cx="41.1" cy="160.0" r="2.0" fill="#7c8a90"/><circle cx="116.6" cy="94.0" r="1.7" fill="#2a5f72"/><circle cx="81.0" cy="91.1" r="1.3" fill="#7c9078"/><circle cx="118.2" cy="135.8" r="0.8" fill="#3d7486"/><circle cx="91.0" cy="127.4" r="1.3" fill="#7c9078"/><circle cx="138.9" cy="110.2" r="0.6" fill="#8fa08a"/><circle cx="69.0" cy="16.5" r="3.0" fill="#5f708a"/><circle cx="115.8" cy="43.8" r="1.7" fill="#8a8790"/><circle cx="132.8" cy="98.1" r="1.3" fill="#7c9078"/><circle cx="28.4" cy="36.2" r="0.8" fill="#8a8790"/><circle cx="54.4" cy="106.1" r="1.3" fill="#8d9f84"/><circle cx="36.9" cy="173.5" r="1.5" fill="#8d9f84"/><circle cx="130.0" cy="69.9" r="1.3" fill="#7a7d84"/><circle cx="23.4" cy="112.3" r="1.1" fill="#8d9f84"/><circle cx="77.9" cy="3.9" r="0.6" fill="#6e7a88"/><circle cx="148.6" cy="162.8" r="1.3" fill="#6e7a88"/><circle cx="39.2" cy="146.5" r="1.5" fill="#4f6f80"/><circle cx="142.0" cy="144.2" r="2.8" fill="#8d9f84"/><circle cx="38.1" cy="7.1" r="0.8" fill="#a9bcb8"/><circle cx="56.7" cy="5.2" r="0.6" fill="#5f708a"/><circle cx="130.6" cy="86.2" r="3.0" fill="#7a7d84"/><circle cx="129.4" cy="120.3" r="0.6" fill="#2a5f72"/><circle cx="38.6" cy="106.1" r="2.2" fill="#2a5f72"/><circle cx="143.5" cy="125.9" r="1.3" fill="#8d9f84"/><circle cx="67.3" cy="30.0" r="0.8" fill="#6e7a88"/><circle cx="25.8" cy="177.0" r="1.1" fill="#4f6f80"/><circle cx="135.4" cy="170.1" r="3.0" fill="#86867f"/><circle cx="38.7" cy="96.5" r="2.2" fill="#a093a8"/><circle cx="8.4" cy="27.2" r="3.0" fill="#86867f"/><circle cx="140.9" cy="127.3" r="1.0" fill="#a093a8"/><circle cx="113.7" cy="19.8" r="1.0" fill="#5f708a"/><circle cx="38.6" cy="23.3" r="1.3" fill="#7d8a80"/><circle cx="25.3" cy="44.8" r="0.8" fill="#86867f"/><circle cx="70.2" cy="171.6" r="2.8" fill="#2f6b7c"/><circle cx="23.5" cy="156.6" r="0.6" fill="#a8b8b4"/><circle cx="130.0" cy="167.1" r="0.8" fill="#8f8f8a"/><circle cx="143.7" cy="174.1" r="1.3" fill="#86867f"/><circle cx="94.3" cy="85.0" r="1.0" fill="#5f708a"/><circle cx="123.5" cy="89.8" r="2.2" fill="#26586a"/><circle cx="21.4" cy="41.7" r="0.6" fill="#a9bcb8"/><circle cx="107.1" cy="104.0" r="0.8" fill="#a093a8"/><circle cx="130.6" cy="50.1" r="1.3" fill="#6e7a88"/><circle cx="23.4" cy="51.0" r="3.0" fill="#8a8790"/><circle cx="50.2" cy="31.5" r="1.3" fill="#7a7d84"/><circle cx="47.7" cy="169.8" r="0.6" fill="#a9bcb8"/><circle cx="146.8" cy="10.7" r="3.0" fill="#6e7a88"/><circle cx="84.0" cy="157.0" r="0.6" fill="#3d7486"/><circle cx="113.2" cy="182.5" r="1.3" fill="#3d7486"/><circle cx="149.7" cy="173.9" r="0.6" fill="#7d8a80"/><circle cx="43.4" cy="168.5" r="0.6" fill="#7c8a90"/><circle cx="146.8" cy="27.1" r="2.2" fill="#86867f"/><circle cx="66.3" cy="95.5" r="1.7" fill="#8d9f84"/><circle cx="66.5" cy="148.4" r="1.7" fill="#3d7486"/><circle cx="27.9" cy="81.8" r="1.5" fill="#6a8090"/><circle cx="41.5" cy="34.0" r="3.0" fill="#a9bcb8"/><circle cx="78.2" cy="43.3" r="0.8" fill="#6e7a88"/><circle cx="90.1" cy="155.8" r="1.7" fill="#a093a8"/><circle cx="114.2" cy="33.0" r="0.8" fill="#6e7a88"/><circle cx="87.4" cy="38.0" r="0.6" fill="#7d8a80"/><circle cx="126.2" cy="172.3" r="1.7" fill="#26586a"/><circle cx="50.3" cy="158.3" r="3.0" fill="#8f8f8a"/><circle cx="13.5" cy="77.0" r="3.0" fill="#8f8f8a"/><circle cx="20.0" cy="125.1" r="0.8" fill="#6a8090"/><circle cx="84.5" cy="185.3" r="0.6" fill="#8d9f84"/><circle cx="105.3" cy="108.1" r="2.8" fill="#2f6b7c"/><circle cx="53.4" cy="175.2" r="1.7" fill="#2a5f72"/><circle cx="18.1" cy="134.3" r="1.1" fill="#7c8a90"/><circle cx="130.2" cy="108.3" r="0.6" fill="#3d7486"/><circle cx="130.9" cy="179.4" r="1.3" fill="#a093a8"/><circle cx="77.0" cy="99.7" r="1.7" fill="#8d9f84"/><circle cx="3.1" cy="181.9" r="0.8" fill="#a8b8b4"/><circle cx="27.4" cy="19.3" r="1.0" fill="#86867f"/><circle cx="2.9" cy="174.1" r="0.8" fill="#8d9f84"/><circle cx="2.7" cy="112.7" r="2.0" fill="#3e6070"/><circle cx="78.4" cy="132.1" r="0.6" fill="#26586a"/><circle cx="130.4" cy="134.8" r="0.6" fill="#3d7486"/><circle cx="18.5" cy="92.8" r="2.0" fill="#8d9f84"/><circle cx="16.5" cy="22.9" r="0.8" fill="#6e7a88"/><circle cx="129.2" cy="27.7" r="1.7" fill="#8f8f8a"/><circle cx="112.0" cy="30.9" r="3.0" fill="#86867f"/><circle cx="140.6" cy="73.1" r="1.3" fill="#86867f"/><circle cx="59.3" cy="177.0" r="2.8" fill="#26586a"/><circle cx="50.8" cy="45.2" r="1.0" fill="#7d8a80"/><circle cx="126.5" cy="106.1" r="1.0" fill="#8fa08a"/><circle cx="127.1" cy="10.1" r="1.7" fill="#a9bcb8"/><circle cx="143.7" cy="175.7" r="0.8" fill="#7d8a80"/><circle cx="99.5" cy="2.2" r="0.6" fill="#a9bcb8"/><circle cx="10.4" cy="81.4" r="2.0" fill="#7c8a90"/><circle cx="3.1" cy="26.2" r="1.3" fill="#8f8f8a"/><circle cx="95.0" cy="152.1" r="0.6" fill="#2f6b7c"/><circle cx="129.8" cy="116.7" r="2.2" fill="#3d7486"/><circle cx="94.2" cy="151.6" r="0.6" fill="#2a5f72"/><circle cx="37.6" cy="97.8" r="1.3" fill="#7c9078"/><circle cx="142.6" cy="54.1" r="1.0" fill="#5f708a"/><circle cx="97.1" cy="22.6" r="1.7" fill="#8a8790"/><circle cx="12.7" cy="111.0" r="0.8" fill="#3e6070"/><circle cx="18.6" cy="24.7" r="1.0" fill="#7d8a80"/><circle cx="86.6" cy="51.5" r="2.2" fill="#7a7d84"/><circle cx="111.1" cy="54.0" r="1.3" fill="#6e7a88"/><circle cx="97.6" cy="37.8" r="2.2" fill="#5f708a"/><circle cx="69.1" cy="103.0" r="1.7" fill="#a093a8"/><circle cx="70.3" cy="58.4" r="0.8" fill="#5f708a"/><circle cx="33.2" cy="96.3" r="1.3" fill="#8fa08a"/><circle cx="1.8" cy="66.3" r="3.0" fill="#6e7a88"/><circle cx="48.6" cy="61.2" r="1.0" fill="#8a8790"/><circle cx="131.8" cy="40.6" r="0.6" fill="#86867f"/><circle cx="23.8" cy="12.6" r="3.0" fill="#5f708a"/><circle cx="66.0" cy="11.7" r="1.3" fill="#8f8f8a"/><circle cx="53.1" cy="143.4" r="1.7" fill="#7c9078"/><circle cx="148.4" cy="127.4" r="0.8" fill="#8fa08a"/><circle cx="50.6" cy="66.3" r="2.2" fill="#6e7a88"/><circle cx="92.4" cy="159.8" r="2.8" fill="#2a5f72"/><circle cx="110.8" cy="139.7" r="2.8" fill="#a093a8"/><circle cx="40.3" cy="118.6" r="2.2" fill="#8d9f84"/><circle cx="62.0" cy="19.4" r="1.3" fill="#7a7d84"/><circle cx="74.7" cy="181.0" r="1.7" fill="#8d9f84"/><circle cx="62.7" cy="147.3" r="2.8" fill="#2a5f72"/><circle cx="56.9" cy="85.0" r="1.3" fill="#8a8790"/><circle cx="108.5" cy="55.1" r="1.3" fill="#7d8a80"/><circle cx="97.2" cy="1.3" r="2.2" fill="#8f8f8a"/><circle cx="57.1" cy="56.4" r="1.7" fill="#8a8790"/><circle cx="120.4" cy="81.9" r="1.3" fill="#6e7a88"/><circle cx="13.2" cy="173.0" r="1.1" fill="#a8b8b4"/><circle cx="125.7" cy="180.2" r="0.8" fill="#8fa08a"/><circle cx="133.7" cy="179.7" r="0.6" fill="#2f6b7c"/><circle cx="38.5" cy="168.4" r="1.1" fill="#a8b8b4"/><circle cx="116.0" cy="101.2" r="1.3" fill="#8fa08a"/><circle cx="58.4" cy="67.2" r="1.7" fill="#5f708a"/><circle cx="68.0" cy="2.0" r="0.6" fill="#6e7a88"/><circle cx="14.8" cy="70.4" r="1.3" fill="#a9bcb8"/><circle cx="132.0" cy="181.3" r="1.3" fill="#8fa08a"/><circle cx="66.0" cy="117.4" r="1.7" fill="#26586a"/><circle cx="103.7" cy="140.3" r="0.6" fill="#8d9f84"/><circle cx="54.4" cy="68.9" r="0.6" fill="#8a8790"/><circle cx="76.9" cy="20.8" r="1.0" fill="#5f708a"/><circle cx="123.1" cy="186.2" r="1.3" fill="#8d9f84"/><circle cx="78.6" cy="153.4" r="0.8" fill="#7c9078"/><circle cx="61.8" cy="11.3" r="1.7" fill="#7a7d84"/><circle cx="53.0" cy="186.8" r="2.2" fill="#2f6b7c"/><circle cx="103.8" cy="2.0" r="0.6" fill="#8a8790"/><circle cx="106.6" cy="104.0" r="1.0" fill="#8fa08a"/><circle cx="126.3" cy="110.2" r="2.2" fill="#2f6b7c"/><circle cx="29.5" cy="93.6" r="2.0" fill="#a8b8b4"/><circle cx="39.9" cy="121.6" r="1.7" fill="#8d9f84"/><circle cx="86.2" cy="77.3" r="0.6" fill="#a9bcb8"/><circle cx="23.5" cy="142.8" r="0.6" fill="#4f6f80"/><circle cx="15.0" cy="32.1" r="1.7" fill="#8f8f8a"/><circle cx="123.5" cy="115.2" r="2.8" fill="#2f6b7c"/><circle cx="97.5" cy="128.7" r="1.7" fill="#26586a"/><circle cx="21.6" cy="44.8" r="1.0" fill="#a9bcb8"/><circle cx="4.9" cy="118.2" r="2.0" fill="#4f6f80"/><circle cx="52.3" cy="84.6" r="1.3" fill="#86867f"/><circle cx="8.2" cy="167.4" r="2.0" fill="#4f6f80"/><circle cx="65.9" cy="116.6" r="0.8" fill="#7c9078"/><circle cx="6.6" cy="175.0" r="0.8" fill="#8d9f84"/><circle cx="0.9" cy="163.0" r="1.5" fill="#8d9f84"/><circle cx="62.8" cy="47.4" r="1.3" fill="#7a7d84"/><circle cx="36.4" cy="73.3" r="2.2" fill="#6e7a88"/><circle cx="62.0" cy="74.9" r="2.2" fill="#8f8f8a"/><circle cx="3.4" cy="163.2" r="0.6" fill="#6a8090"/><circle cx="25.5" cy="71.3" r="0.6" fill="#8a8790"/><circle cx="59.4" cy="68.2" r="1.0" fill="#7d8a80"/><circle cx="50.4" cy="122.4" r="0.6" fill="#8fa08a"/><circle cx="123.9" cy="66.0" r="0.8" fill="#7d8a80"/><circle cx="28.7" cy="53.3" r="0.8" fill="#7d8a80"/><circle cx="5.2" cy="124.9" r="1.1" fill="#6a8090"/><circle cx="36.3" cy="24.4" r="0.8" fill="#8a8790"/><circle cx="81.7" cy="148.0" r="1.7" fill="#a093a8"/><circle cx="70.1" cy="149.4" r="0.8" fill="#8d9f84"/><circle cx="55.2" cy="40.7" r="1.3" fill="#7d8a80"/><circle cx="94.4" cy="109.2" r="1.0" fill="#a093a8"/><circle cx="75.7" cy="42.7" r="1.3" fill="#a9bcb8"/><circle cx="141.3" cy="187.6" r="1.7" fill="#8f8f8a"/><circle cx="88.1" cy="69.2" r="0.8" fill="#7d8a80"/><circle cx="91.2" cy="40.0" r="3.0" fill="#7a7d84"/><circle cx="101.7" cy="17.2" r="3.0" fill="#8a8790"/><circle cx="110.4" cy="143.8" r="0.6" fill="#8d9f84"/><circle cx="46.6" cy="73.3" r="0.6" fill="#a9bcb8"/><circle cx="116.4" cy="43.5" r="0.8" fill="#7a7d84"/><circle cx="10.2" cy="171.8" r="2.0" fill="#8d9f84"/><circle cx="28.9" cy="135.1" r="0.6" fill="#6a8090"/><circle cx="43.3" cy="153.6" r="1.5" fill="#8d9f84"/><circle cx="53.4" cy="158.7" r="1.3" fill="#a9bcb8"/><circle cx="140.5" cy="33.2" r="1.0" fill="#5f708a"/><circle cx="134.5" cy="4.7" r="2.2" fill="#8f8f8a"/><circle cx="37.3" cy="159.2" r="1.1" fill="#7c8a90"/><circle cx="14.7" cy="54.8" r="1.0" fill="#6e7a88"/><circle cx="106.9" cy="7.6" r="0.6" fill="#a9bcb8"/><circle cx="64.6" cy="142.3" r="0.8" fill="#8fa08a"/><circle cx="110.7" cy="103.8" r="2.2" fill="#8d9f84"/><circle cx="84.7" cy="42.8" r="1.3" fill="#8a8790"/><circle cx="138.9" cy="126.0" r="1.7" fill="#26586a"/><circle cx="140.4" cy="21.0" r="3.0" fill="#8a8790"/><circle cx="135.2" cy="164.5" r="1.7" fill="#86867f"/><circle cx="146.1" cy="128.0" r="0.6" fill="#26586a"/><circle cx="31.5" cy="171.9" r="0.6" fill="#3e6070"/><circle cx="104.2" cy="74.0" r="2.2" fill="#6e7a88"/><circle cx="42.2" cy="16.9" r="1.3" fill="#8f8f8a"/><circle cx="139.5" cy="130.0" r="2.2" fill="#a093a8"/><circle cx="76.3" cy="127.2" r="0.8" fill="#8fa08a"/><circle cx="101.0" cy="159.2" r="2.8" fill="#8d9f84"/><circle cx="73.4" cy="35.6" r="2.2" fill="#8a8790"/><circle cx="26.2" cy="30.8" r="3.0" fill="#6e7a88"/><circle cx="81.6" cy="46.9" r="0.6" fill="#a9bcb8"/><circle cx="53.7" cy="77.4" r="0.8" fill="#8a8790"/><circle cx="20.6" cy="129.0" r="1.5" fill="#7c8a90"/><circle cx="72.4" cy="132.7" r="0.6" fill="#a093a8"/><circle cx="20.0" cy="120.5" r="1.1" fill="#6a8090"/><circle cx="132.7" cy="26.7" r="1.7" fill="#6e7a88"/><circle cx="50.0" cy="153.3" r="1.7" fill="#7d8a80"/><circle cx="114.1" cy="31.8" r="2.2" fill="#a9bcb8"/><circle cx="89.8" cy="86.7" r="2.8" fill="#8fa08a"/><circle cx="124.7" cy="21.5" r="1.0" fill="#86867f"/><circle cx="54.1" cy="38.8" r="0.6" fill="#8a8790"/><circle cx="45.6" cy="20.8" r="1.0" fill="#8f8f8a"/><circle cx="144.4" cy="30.3" r="1.3" fill="#8f8f8a"/><circle cx="85.4" cy="54.4" r="1.7" fill="#7a7d84"/><circle cx="6.8" cy="88.1" r="1.5" fill="#4f6f80"/><circle cx="112.1" cy="62.4" r="2.2" fill="#8a8790"/><circle cx="16.3" cy="91.9" r="1.5" fill="#3e6070"/><circle cx="28.5" cy="102.1" r="0.6" fill="#26586a"/><circle cx="137.9" cy="121.2" r="2.2" fill="#3d7486"/><circle cx="98.0" cy="14.7" r="2.2" fill="#86867f"/><circle cx="3.8" cy="74.3" r="0.8" fill="#8a8790"/><circle cx="55.2" cy="180.9" r="1.7" fill="#8d9f84"/><circle cx="15.3" cy="135.1" r="1.1" fill="#7c8a90"/><circle cx="92.5" cy="71.3" r="2.2" fill="#5f708a"/><circle cx="48.0" cy="69.3" r="1.7" fill="#5f708a"/><circle cx="125.7" cy="47.7" r="0.6" fill="#86867f"/><circle cx="16.1" cy="150.9" r="1.5" fill="#4f6f80"/><circle cx="141.7" cy="92.9" r="1.3" fill="#8d9f84"/><circle cx="149.3" cy="113.3" r="2.2" fill="#2a5f72"/><circle cx="21.3" cy="42.8" r="0.8" fill="#8f8f8a"/><circle cx="95.5" cy="75.5" r="0.6" fill="#8f8f8a"/><circle cx="71.9" cy="41.0" r="1.0" fill="#86867f"/><circle cx="4.8" cy="114.8" r="2.0" fill="#3e6070"/><circle cx="21.5" cy="13.5" r="0.6" fill="#7d8a80"/><circle cx="133.6" cy="11.8" r="0.6" fill="#a9bcb8"/><circle cx="135.6" cy="30.9" r="1.0" fill="#86867f"/><circle cx="66.5" cy="105.9" r="1.0" fill="#7c9078"/><circle cx="70.3" cy="102.0" r="1.7" fill="#a093a8"/><circle cx="64.3" cy="100.5" r="2.2" fill="#8d9f84"/><circle cx="146.2" cy="180.8" r="1.7" fill="#7a7d84"/><circle cx="121.7" cy="11.3" r="2.2" fill="#5f708a"/><circle cx="91.4" cy="55.8" r="1.7" fill="#7d8a80"/><circle cx="142.9" cy="90.4" r="2.2" fill="#8d9f84"/><circle cx="44.9" cy="64.6" r="2.2" fill="#86867f"/><circle cx="127.2" cy="41.8" r="2.2" fill="#8f8f8a"/><circle cx="103.7" cy="27.6" r="1.7" fill="#5f708a"/><circle cx="83.2" cy="177.3" r="1.0" fill="#7c9078"/><circle cx="84.7" cy="74.5" r="0.6" fill="#6e7a88"/><circle cx="27.1" cy="167.3" r="2.0" fill="#7c8a90"/><circle cx="16.8" cy="162.1" r="1.1" fill="#7c8a90"/><circle cx="14.2" cy="99.8" r="1.1" fill="#7c8a90"/><circle cx="73.4" cy="104.2" r="0.8" fill="#2a5f72"/><circle cx="110.3" cy="170.9" r="1.7" fill="#7a7d84"/><circle cx="127.7" cy="127.7" r="2.8" fill="#a093a8"/><circle cx="20.1" cy="94.6" r="2.0" fill="#7c8a90"/><circle cx="125.8" cy="178.2" r="2.2" fill="#2a5f72"/><circle cx="69.0" cy="129.0" r="1.7" fill="#8d9f84"/><circle cx="145.2" cy="36.0" r="1.3" fill="#7a7d84"/><circle cx="20.5" cy="145.9" r="0.6" fill="#3e6070"/><circle cx="35.5" cy="70.0" r="0.6" fill="#6e7a88"/><circle cx="69.0" cy="22.7" r="0.8" fill="#7d8a80"/><circle cx="136.3" cy="16.5" r="3.0" fill="#6e7a88"/><circle cx="84.4" cy="172.5" r="2.8" fill="#26586a"/><circle cx="25.2" cy="140.1" r="1.1" fill="#7c8a90"/><circle cx="102.1" cy="155.2" r="0.6" fill="#7c9078"/><circle cx="56.0" cy="138.6" r="1.0" fill="#a093a8"/><circle cx="6.5" cy="113.5" r="0.6" fill="#8d9f84"/><circle cx="82.3" cy="151.0" r="0.6" fill="#2f6b7c"/><circle cx="138.8" cy="126.9" r="1.0" fill="#26586a"/><circle cx="29.0" cy="84.0" r="2.0" fill="#3e6070"/><circle cx="17.0" cy="3.9" r="0.6" fill="#7a7d84"/><circle cx="120.1" cy="34.8" r="1.7" fill="#8a8790"/><circle cx="131.1" cy="125.9" r="2.8" fill="#8d9f84"/><circle cx="88.2" cy="47.0" r="2.2" fill="#8a8790"/><circle cx="142.3" cy="2.6" r="1.0" fill="#a9bcb8"/><circle cx="73.1" cy="91.0" r="0.6" fill="#86867f"/><circle cx="11.2" cy="116.6" r="2.0" fill="#3e6070"/><circle cx="126.4" cy="181.9" r="2.2" fill="#a093a8"/><circle cx="59.0" cy="164.1" r="1.7" fill="#7a7d84"/><circle cx="54.1" cy="99.3" r="1.0" fill="#8d9f84"/><circle cx="88.4" cy="8.2" r="0.8" fill="#5f708a"/><circle cx="109.1" cy="62.3" r="1.3" fill="#7d8a80"/><circle cx="140.6" cy="59.1" r="1.0" fill="#8f8f8a"/><circle cx="50.1" cy="3.9" r="1.3" fill="#86867f"/><circle cx="94.6" cy="136.7" r="0.8" fill="#3d7486"/><circle cx="57.7" cy="11.9" r="1.0" fill="#5f708a"/><circle cx="85.3" cy="99.3" r="0.8" fill="#2f6b7c"/><circle cx="137.3" cy="169.7" r="0.6" fill="#6e7a88"/><circle cx="116.1" cy="119.0" r="2.2" fill="#2a5f72"/><circle cx="54.4" cy="52.9" r="3.0" fill="#6e7a88"/><circle cx="130.9" cy="176.5" r="2.2" fill="#2a5f72"/><circle cx="45.6" cy="143.5" r="2.2" fill="#5f708a"/><circle cx="76.3" cy="119.4" r="1.0" fill="#8fa08a"/><circle cx="50.2" cy="132.4" r="2.2" fill="#26586a"/><circle cx="132.5" cy="147.1" r="1.7" fill="#26586a"/><circle cx="134.1" cy="152.1" r="1.0" fill="#8d9f84"/><circle cx="20.3" cy="1.4" r="3.0" fill="#8f8f8a"/><circle cx="60.7" cy="74.5" r="3.0" fill="#8a8790"/><circle cx="139.4" cy="110.3" r="0.8" fill="#3d7486"/><circle cx="108.0" cy="47.4" r="1.7" fill="#5f708a"/><circle cx="11.0" cy="35.8" r="0.6" fill="#a9bcb8"/><circle cx="45.6" cy="66.5" r="1.3" fill="#5f708a"/><circle cx="145.6" cy="129.8" r="2.2" fill="#2a5f72"/><circle cx="125.8" cy="60.0" r="0.8" fill="#8a8790"/><circle cx="134.7" cy="102.7" r="2.8" fill="#8d9f84"/><circle cx="94.0" cy="44.5" r="0.6" fill="#6e7a88"/><circle cx="7.2" cy="84.2" r="2.0" fill="#8d9f84"/><circle cx="129.6" cy="121.8" r="0.8" fill="#7c9078"/><circle cx="110.1" cy="181.1" r="1.7" fill="#2f6b7c"/><circle cx="11.9" cy="152.2" r="2.0" fill="#8d9f84"/><circle cx="107.9" cy="0.9" r="1.0" fill="#86867f"/><circle cx="96.0" cy="173.5" r="0.8" fill="#26586a"/><circle cx="49.0" cy="140.9" r="2.2" fill="#a093a8"/><circle cx="60.8" cy="127.6" r="1.0" fill="#8d9f84"/><circle cx="8.6" cy="77.9" r="0.6" fill="#7a7d84"/><circle cx="93.9" cy="62.9" r="1.3" fill="#7d8a80"/><circle cx="38.6" cy="87.1" r="0.6" fill="#4f6f80"/><circle cx="138.8" cy="106.1" r="1.0" fill="#2f6b7c"/><circle cx="62.3" cy="133.5" r="2.8" fill="#26586a"/><circle cx="23.5" cy="3.5" r="0.8" fill="#a9bcb8"/><circle cx="79.4" cy="158.0" r="1.0" fill="#26586a"/><circle cx="63.5" cy="101.3" r="1.7" fill="#8d9f84"/><circle cx="98.6" cy="113.1" r="1.0" fill="#7c9078"/><circle cx="111.2" cy="48.5" r="2.2" fill="#8f8f8a"/><circle cx="114.5" cy="145.9" r="1.0" fill="#a093a8"/><circle cx="83.9" cy="67.9" r="1.7" fill="#8a8790"/><circle cx="19.8" cy="1.7" r="1.3" fill="#7a7d84"/><circle cx="98.3" cy="145.5" r="1.0" fill="#8d9f84"/><circle cx="148.4" cy="42.9" r="3.0" fill="#7a7d84"/><circle cx="140.5" cy="117.4" r="0.6" fill="#2f6b7c"/><circle cx="81.5" cy="38.5" r="3.0" fill="#a9bcb8"/><circle cx="38.9" cy="113.9" r="2.2" fill="#8d9f84"/><circle cx="135.4" cy="163.7" r="3.0" fill="#a9bcb8"/><circle cx="79.3" cy="66.0" r="2.2" fill="#6e7a88"/><circle cx="66.2" cy="161.6" r="0.8" fill="#26586a"/><circle cx="135.2" cy="73.1" r="0.8" fill="#5f708a"/><circle cx="118.5" cy="5.0" r="2.2" fill="#86867f"/><circle cx="9.8" cy="121.3" r="1.5" fill="#7c8a90"/><circle cx="129.6" cy="11.3" r="1.7" fill="#7d8a80"/><circle cx="61.5" cy="172.8" r="2.2" fill="#7c9078"/><circle cx="4.6" cy="3.9" r="2.2" fill="#7d8a80"/><circle cx="36.3" cy="66.6" r="1.0" fill="#7d8a80"/><circle cx="96.4" cy="56.1" r="1.3" fill="#6e7a88"/><circle cx="147.2" cy="148.7" r="1.3" fill="#3d7486"/><circle cx="143.1" cy="25.7" r="1.0" fill="#8a8790"/><circle cx="13.3" cy="0.7" r="3.0" fill="#6e7a88"/><circle cx="24.2" cy="128.4" r="2.0" fill="#3e6070"/><circle cx="31.8" cy="9.8" r="3.0" fill="#6e7a88"/><circle cx="127.7" cy="138.3" r="0.6" fill="#a093a8"/><circle cx="27.3" cy="162.4" r="1.1" fill="#7c8a90"/><circle cx="3.7" cy="21.0" r="0.6" fill="#a9bcb8"/><circle cx="136.7" cy="28.4" r="2.2" fill="#5f708a"/><circle cx="14.6" cy="31.7" r="2.2" fill="#7d8a80"/><circle cx="13.5" cy="63.8" r="2.2" fill="#7d8a80"/><circle cx="132.3" cy="184.2" r="0.6" fill="#7c9078"/><circle cx="30.2" cy="117.9" r="0.6" fill="#4f6f80"/><circle cx="20.2" cy="111.9" r="2.0" fill="#3e6070"/><circle cx="104.8" cy="137.0" r="0.6" fill="#26586a"/><circle cx="9.7" cy="20.7" r="1.3" fill="#a9bcb8"/><circle cx="78.8" cy="0.5" r="0.8" fill="#a9bcb8"/><circle cx="95.0" cy="102.6" r="0.6" fill="#26586a"/><circle cx="125.9" cy="180.0" r="0.6" fill="#26586a"/><circle cx="145.6" cy="160.4" r="0.8" fill="#7a7d84"/><circle cx="40.9" cy="33.3" r="1.0" fill="#8a8790"/><circle cx="10.3" cy="8.1" r="1.7" fill="#86867f"/><circle cx="61.2" cy="104.6" r="1.0" fill="#3d7486"/><circle cx="1.6" cy="129.4" r="1.5" fill="#a8b8b4"/><circle cx="42.3" cy="62.2" r="1.3" fill="#8a8790"/><circle cx="59.9" cy="59.8" r="1.3" fill="#7d8a80"/><circle cx="145.9" cy="72.8" r="1.3" fill="#7d8a80"/><circle cx="120.6" cy="168.8" r="2.2" fill="#86867f"/><circle cx="35.9" cy="94.2" r="1.0" fill="#8fa08a"/><circle cx="148.7" cy="155.2" r="2.2" fill="#7a7d84"/><circle cx="13.0" cy="116.7" r="0.6" fill="#7c8a90"/><circle cx="7.4" cy="130.5" r="1.1" fill="#7c8a90"/><circle cx="96.9" cy="103.2" r="1.0" fill="#a093a8"/><circle cx="145.7" cy="0.2" r="2.2" fill="#8f8f8a"/><circle cx="76.5" cy="111.4" r="1.3" fill="#7c9078"/><circle cx="123.7" cy="148.8" r="2.8" fill="#8fa08a"/><circle cx="53.3" cy="12.1" r="1.7" fill="#8a8790"/><circle cx="91.9" cy="127.3" r="1.0" fill="#2a5f72"/><circle cx="94.3" cy="102.1" r="0.8" fill="#3d7486"/><circle cx="39.3" cy="158.1" r="1.1" fill="#a8b8b4"/><circle cx="88.4" cy="107.3" r="0.8" fill="#2a5f72"/><circle cx="139.1" cy="99.4" r="1.7" fill="#7c9078"/><circle cx="79.1" cy="152.9" r="0.8" fill="#8d9f84"/><circle cx="22.9" cy="124.4" r="0.8" fill="#7c8a90"/><circle cx="142.1" cy="160.9" r="2.2" fill="#86867f"/><circle cx="48.3" cy="68.0" r="3.0" fill="#7d8a80"/><circle cx="18.5" cy="28.9" r="1.0" fill="#7d8a80"/><circle cx="15.4" cy="67.0" r="3.0" fill="#8a8790"/><circle cx="67.9" cy="16.5" r="1.3" fill="#8a8790"/><circle cx="149.5" cy="130.7" r="1.3" fill="#a093a8"/><circle cx="109.6" cy="32.8" r="1.7" fill="#a9bcb8"/><circle cx="0.9" cy="24.5" r="1.3" fill="#6e7a88"/><circle cx="93.4" cy="98.4" r="2.8" fill="#8fa08a"/><circle cx="37.9" cy="104.6" r="0.6" fill="#3d7486"/><circle cx="8.7" cy="33.5" r="2.2" fill="#8a8790"/><circle cx="137.5" cy="48.1" r="1.0" fill="#8f8f8a"/><circle cx="13.7" cy="119.6" r="0.6" fill="#6a8090"/><circle cx="19.2" cy="180.2" r="1.1" fill="#a8b8b4"/><circle cx="117.2" cy="173.1" r="2.2" fill="#a093a8"/><circle cx="56.4" cy="7.8" r="3.0" fill="#8a8790"/><circle cx="145.5" cy="81.0" r="1.7" fill="#8a8790"/><circle cx="52.9" cy="72.4" r="1.7" fill="#a9bcb8"/><circle cx="138.7" cy="36.0" r="3.0" fill="#5f708a"/><circle cx="9.5" cy="38.2" r="3.0" fill="#7a7d84"/><circle cx="12.0" cy="83.8" r="1.5" fill="#a8b8b4"/><circle cx="62.2" cy="175.9" r="2.2" fill="#2f6b7c"/><circle cx="16.2" cy="105.9" r="1.5" fill="#7c8a90"/><circle cx="125.9" cy="78.0" r="1.3" fill="#a9bcb8"/><circle cx="133.6" cy="82.7" r="1.3" fill="#a9bcb8"/><circle cx="76.8" cy="155.0" r="2.2" fill="#7c9078"/><circle cx="111.1" cy="75.5" r="0.6" fill="#8a8790"/><circle cx="83.1" cy="144.6" r="2.8" fill="#a093a8"/><circle cx="17.7" cy="41.5" r="0.6" fill="#86867f"/><circle cx="15.3" cy="16.6" r="3.0" fill="#6e7a88"/><circle cx="84.7" cy="10.3" r="2.2" fill="#6e7a88"/><circle cx="106.7" cy="90.8" r="0.6" fill="#8fa08a"/><circle cx="126.5" cy="26.4" r="1.3" fill="#86867f"/><circle cx="130.8" cy="27.4" r="1.0" fill="#6e7a88"/><circle cx="77.7" cy="1.1" r="1.7" fill="#8a8790"/><circle cx="78.0" cy="16.3" r="1.3" fill="#8a8790"/><circle cx="99.6" cy="56.2" r="1.3" fill="#7d8a80"/><circle cx="102.2" cy="57.7" r="0.8" fill="#7d8a80"/><circle cx="120.3" cy="161.0" r="1.0" fill="#8a8790"/><circle cx="30.3" cy="9.8" r="1.7" fill="#5f708a"/><circle cx="139.9" cy="123.4" r="2.2" fill="#8d9f84"/><circle cx="54.9" cy="150.7" r="0.8" fill="#a093a8"/><circle cx="137.9" cy="104.6" r="0.6" fill="#26586a"/><circle cx="1.3" cy="12.7" r="1.7" fill="#5f708a"/><circle cx="5.3" cy="41.3" r="1.3" fill="#8a8790"/><circle cx="30.1" cy="39.4" r="1.7" fill="#8f8f8a"/><circle cx="60.9" cy="136.8" r="0.8" fill="#7c9078"/><circle cx="8.7" cy="81.5" r="0.6" fill="#4f6f80"/><circle cx="20.5" cy="165.4" r="2.0" fill="#3e6070"/><circle cx="27.0" cy="173.4" r="2.0" fill="#7c8a90"/><circle cx="120.1" cy="93.7" r="2.2" fill="#3d7486"/><circle cx="120.3" cy="100.5" r="0.8" fill="#8d9f84"/><circle cx="116.6" cy="134.5" r="1.7" fill="#2a5f72"/><circle cx="69.8" cy="37.9" r="0.6" fill="#86867f"/><circle cx="62.2" cy="123.9" r="1.0" fill="#a093a8"/><circle cx="102.9" cy="29.1" r="0.6" fill="#a9bcb8"/><circle cx="6.3" cy="157.2" r="1.1" fill="#6a8090"/><circle cx="131.2" cy="149.9" r="2.2" fill="#8d9f84"/><circle cx="46.4" cy="48.5" r="1.7" fill="#6e7a88"/><circle cx="22.8" cy="150.3" r="0.8" fill="#3e6070"/><circle cx="146.1" cy="61.6" r="0.8" fill="#8a8790"/><circle cx="33.5" cy="102.6" r="0.6" fill="#7c9078"/><circle cx="69.7" cy="136.9" r="1.3" fill="#26586a"/><circle cx="101.8" cy="21.5" r="3.0" fill="#5f708a"/><circle cx="18.3" cy="173.6" r="2.0" fill="#a8b8b4"/><circle cx="10.9" cy="92.1" r="0.6" fill="#3e6070"/><circle cx="133.4" cy="171.6" r="0.8" fill="#8f8f8a"/><circle cx="42.0" cy="57.0" r="1.7" fill="#7a7d84"/><circle cx="30.2" cy="88.4" r="0.8" fill="#a8b8b4"/><circle cx="138.7" cy="6.1" r="1.7" fill="#7a7d84"/><circle cx="145.1" cy="64.7" r="0.8" fill="#8a8790"/><circle cx="7.5" cy="62.6" r="1.3" fill="#8f8f8a"/><circle cx="37.1" cy="139.6" r="0.8" fill="#4f6f80"/><circle cx="118.2" cy="56.1" r="0.6" fill="#8f8f8a"/><circle cx="14.4" cy="103.7" r="0.8" fill="#a8b8b4"/><circle cx="59.0" cy="6.7" r="0.6" fill="#7a7d84"/><circle cx="62.0" cy="130.9" r="1.3" fill="#26586a"/><circle cx="11.4" cy="136.8" r="0.8" fill="#8d9f84"/><circle cx="25.5" cy="177.0" r="1.1" fill="#4f6f80"/><circle cx="126.3" cy="164.2" r="1.3" fill="#8a8790"/><circle cx="22.4" cy="17.7" r="0.8" fill="#7a7d84"/><circle cx="23.0" cy="50.8" r="1.7" fill="#7a7d84"/><circle cx="48.6" cy="46.2" r="1.7" fill="#86867f"/><circle cx="76.0" cy="69.0" r="0.8" fill="#8a8790"/><circle cx="60.6" cy="38.3" r="0.8" fill="#6e7a88"/><circle cx="109.0" cy="100.5" r="0.8" fill="#2a5f72"/><circle cx="2.3" cy="177.3" r="1.5" fill="#7c8a90"/><circle cx="85.6" cy="129.5" r="0.8" fill="#2a5f72"/><circle cx="112.5" cy="28.9" r="1.0" fill="#86867f"/><circle cx="63.6" cy="117.4" r="0.6" fill="#3d7486"/><circle cx="85.5" cy="22.7" r="2.2" fill="#6e7a88"/><circle cx="35.1" cy="111.9" r="2.8" fill="#2f6b7c"/><circle cx="123.2" cy="13.7" r="1.0" fill="#7a7d84"/><circle cx="6.2" cy="116.2" r="0.8" fill="#8d9f84"/><circle cx="51.3" cy="152.4" r="1.3" fill="#8d9f84"/><circle cx="1.6" cy="176.8" r="1.5" fill="#3e6070"/><circle cx="4.8" cy="148.3" r="0.8" fill="#7c8a90"/><circle cx="76.7" cy="31.4" r="3.0" fill="#5f708a"/><circle cx="115.5" cy="38.3" r="0.8" fill="#5f708a"/><circle cx="106.3" cy="12.6" r="0.6" fill="#8f8f8a"/><circle cx="5.7" cy="98.8" r="1.1" fill="#4f6f80"/><circle cx="112.7" cy="119.6" r="0.8" fill="#2f6b7c"/><circle cx="126.9" cy="147.9" r="0.6" fill="#26586a"/><circle cx="87.4" cy="151.0" r="1.3" fill="#a093a8"/><circle cx="20.2" cy="155.7" r="1.1" fill="#4f6f80"/><circle cx="111.7" cy="156.5" r="2.8" fill="#8d9f84"/><circle cx="65.3" cy="155.1" r="2.8" fill="#3d7486"/><circle cx="112.2" cy="111.6" r="2.2" fill="#2a5f72"/><circle cx="10.2" cy="147.2" r="1.1" fill="#6a8090"/><circle cx="36.0" cy="110.5" r="1.7" fill="#7c9078"/><circle cx="131.6" cy="108.1" r="2.2" fill="#2f6b7c"/><circle cx="58.8" cy="147.4" r="2.8" fill="#26586a"/><circle cx="123.9" cy="76.4" r="0.6" fill="#6e7a88"/><circle cx="97.9" cy="157.2" r="1.0" fill="#8fa08a"/><circle cx="118.9" cy="0.8" r="1.3" fill="#86867f"/><circle cx="142.6" cy="165.1" r="1.3" fill="#7d8a80"/><circle cx="61.6" cy="56.3" r="0.8" fill="#5f708a"/><circle cx="81.8" cy="15.6" r="1.3" fill="#8f8f8a"/><circle cx="92.9" cy="54.9" r="0.6" fill="#8a8790"/><circle cx="28.1" cy="167.2" r="1.5" fill="#7c8a90"/><circle cx="80.7" cy="45.4" r="0.8" fill="#86867f"/><circle cx="56.3" cy="168.5" r="1.3" fill="#8a8790"/><circle cx="49.9" cy="28.4" r="0.8" fill="#6e7a88"/><circle cx="52.7" cy="153.4" r="1.3" fill="#3d7486"/><circle cx="75.0" cy="179.7" r="1.7" fill="#7c9078"/><circle cx="128.5" cy="182.0" r="1.3" fill="#2f6b7c"/><circle cx="0.1" cy="33.0" r="0.8" fill="#8f8f8a"/><circle cx="84.8" cy="123.5" r="2.2" fill="#26586a"/><circle cx="101.4" cy="185.1" r="2.2" fill="#8fa08a"/><circle cx="20.3" cy="141.6" r="1.1" fill="#7c8a90"/><circle cx="62.4" cy="96.7" r="1.0" fill="#a093a8"/><circle cx="40.0" cy="55.6" r="1.0" fill="#7d8a80"/><circle cx="140.7" cy="152.0" r="0.6" fill="#a093a8"/><circle cx="74.0" cy="130.0" r="0.6" fill="#2f6b7c"/><circle cx="131.3" cy="167.0" r="0.6" fill="#7d8a80"/><circle cx="67.2" cy="141.2" r="0.8" fill="#a093a8"/><circle cx="5.3" cy="61.1" r="0.8" fill="#86867f"/><circle cx="142.9" cy="167.6" r="0.8" fill="#6e7a88"/><circle cx="88.1" cy="108.4" r="0.6" fill="#8fa08a"/><circle cx="26.0" cy="110.8" r="1.1" fill="#7c8a90"/><circle cx="114.4" cy="54.7" r="1.7" fill="#86867f"/><circle cx="63.1" cy="183.9" r="2.2" fill="#2a5f72"/><circle cx="120.7" cy="127.2" r="1.3" fill="#a093a8"/><circle cx="144.5" cy="133.4" r="2.2" fill="#3d7486"/><circle cx="48.6" cy="156.7" r="1.3" fill="#86867f"/><circle cx="119.0" cy="65.3" r="0.8" fill="#6e7a88"/><circle cx="77.4" cy="165.0" r="0.8" fill="#3d7486"/><circle cx="110.8" cy="32.1" r="1.0" fill="#86867f"/><circle cx="88.1" cy="182.6" r="2.8" fill="#26586a"/><circle cx="144.3" cy="35.2" r="1.0" fill="#8f8f8a"/><circle cx="29.6" cy="60.3" r="1.3" fill="#7d8a80"/><circle cx="16.3" cy="48.9" r="1.3" fill="#5f708a"/><circle cx="57.8" cy="181.2" r="1.0" fill="#2a5f72"/><circle cx="30.6" cy="170.8" r="1.5" fill="#a8b8b4"/><circle cx="125.6" cy="119.8" r="2.8" fill="#26586a"/><circle cx="6.6" cy="52.4" r="1.7" fill="#8f8f8a"/><circle cx="99.2" cy="159.4" r="1.3" fill="#2a5f72"/><circle cx="41.3" cy="68.2" r="1.3" fill="#8a8790"/><circle cx="127.7" cy="22.8" r="1.3" fill="#86867f"/><circle cx="6.2" cy="155.4" r="2.0" fill="#8d9f84"/><circle cx="53.0" cy="176.7" r="1.0" fill="#7c9078"/><circle cx="132.9" cy="164.6" r="0.6" fill="#7d8a80"/><circle cx="125.2" cy="133.8" r="1.0" fill="#8d9f84"/><circle cx="96.7" cy="181.9" r="2.2" fill="#2a5f72"/><circle cx="116.2" cy="74.2" r="3.0" fill="#5f708a"/><circle cx="60.0" cy="94.0" r="1.0" fill="#26586a"/><circle cx="129.8" cy="133.9" r="0.8" fill="#8fa08a"/><circle cx="100.4" cy="169.5" r="0.8" fill="#6e7a88"/><circle cx="50.8" cy="12.4" r="1.3" fill="#7a7d84"/><circle cx="75.3" cy="160.2" r="2.2" fill="#7c9078"/><circle cx="86.7" cy="75.9" r="1.7" fill="#8a8790"/><circle cx="117.8" cy="127.8" r="2.8" fill="#8d9f84"/><circle cx="22.7" cy="126.3" r="0.8" fill="#a8b8b4"/><circle cx="18.7" cy="53.1" r="0.6" fill="#7d8a80"/><circle cx="131.8" cy="24.7" r="2.2" fill="#7d8a80"/><circle cx="91.9" cy="51.7" r="0.6" fill="#8a8790"/><circle cx="91.2" cy="169.9" r="1.0" fill="#7a7d84"/><circle cx="54.0" cy="107.0" r="2.8" fill="#2a5f72"/><circle cx="54.0" cy="131.5" r="0.6" fill="#2a5f72"/><circle cx="125.8" cy="61.1" r="0.6" fill="#8f8f8a"/><circle cx="94.4" cy="26.1" r="1.0" fill="#86867f"/><circle cx="146.6" cy="111.0" r="1.7" fill="#2f6b7c"/><circle cx="5.9" cy="155.5" r="0.6" fill="#3e6070"/><circle cx="33.7" cy="118.3" r="1.1" fill="#8d9f84"/><circle cx="79.6" cy="43.3" r="1.7" fill="#6e7a88"/><circle cx="42.3" cy="183.1" r="1.7" fill="#2f6b7c"/><circle cx="33.4" cy="32.5" r="3.0" fill="#8a8790"/><circle cx="63.6" cy="11.9" r="2.2" fill="#8a8790"/><circle cx="108.7" cy="110.0" r="1.3" fill="#8fa08a"/><circle cx="76.8" cy="110.7" r="0.8" fill="#2f6b7c"/><circle cx="120.6" cy="180.7" r="1.0" fill="#3d7486"/><circle cx="10.7" cy="89.8" r="0.8" fill="#3e6070"/><circle cx="68.1" cy="128.3" r="2.2" fill="#a093a8"/><circle cx="28.6" cy="115.7" r="0.6" fill="#3e6070"/><circle cx="24.8" cy="142.8" r="0.6" fill="#7c8a90"/><circle cx="134.6" cy="3.1" r="3.0" fill="#6e7a88"/><circle cx="118.5" cy="139.7" r="2.8" fill="#3d7486"/><circle cx="30.2" cy="142.0" r="1.1" fill="#7c8a90"/><circle cx="117.9" cy="4.3" r="2.2" fill="#86867f"/><circle cx="9.4" cy="38.7" r="0.6" fill="#8a8790"/><circle cx="83.7" cy="118.0" r="1.7" fill="#26586a"/><circle cx="148.7" cy="57.5" r="0.6" fill="#a9bcb8"/><circle cx="103.7" cy="79.2" r="0.6" fill="#8f8f8a"/><circle cx="115.9" cy="64.5" r="3.0" fill="#a9bcb8"/><circle cx="54.6" cy="166.2" r="1.3" fill="#7a7d84"/><circle cx="136.8" cy="149.4" r="1.3" fill="#8d9f84"/><circle cx="127.5" cy="99.3" r="1.0" fill="#8fa08a"/><circle cx="31.4" cy="47.4" r="0.6" fill="#6e7a88"/><circle cx="106.5" cy="177.7" r="1.7" fill="#8fa08a"/><circle cx="116.2" cy="136.4" r="0.8" fill="#8fa08a"/><circle cx="20.1" cy="2.4" r="0.8" fill="#7d8a80"/><circle cx="4.1" cy="152.9" r="0.6" fill="#3e6070"/><circle cx="117.1" cy="38.3" r="1.7" fill="#7a7d84"/><circle cx="128.8" cy="63.6" r="1.7" fill="#8f8f8a"/><circle cx="72.7" cy="120.2" r="0.8" fill="#2f6b7c"/><circle cx="36.5" cy="170.3" r="1.5" fill="#4f6f80"/><circle cx="14.7" cy="165.0" r="0.8" fill="#3e6070"/><circle cx="68.5" cy="110.1" r="2.2" fill="#a093a8"/><circle cx="114.3" cy="107.2" r="2.2" fill="#2f6b7c"/><circle cx="129.3" cy="31.8" r="2.2" fill="#6e7a88"/><circle cx="107.5" cy="88.3" r="1.3" fill="#a9bcb8"/><circle cx="17.8" cy="93.6" r="1.5" fill="#4f6f80"/><circle cx="105.0" cy="150.4" r="0.8" fill="#2f6b7c"/><circle cx="58.8" cy="148.2" r="2.8" fill="#7c9078"/><circle cx="95.1" cy="139.4" r="0.6" fill="#7c9078"/><circle cx="14.1" cy="183.5" r="0.6" fill="#4f6f80"/><circle cx="70.0" cy="75.6" r="0.8" fill="#86867f"/><circle cx="139.6" cy="120.1" r="1.3" fill="#3d7486"/><circle cx="6.2" cy="88.0" r="1.5" fill="#4f6f80"/><circle cx="113.9" cy="165.9" r="0.6" fill="#a9bcb8"/><circle cx="21.5" cy="99.5" r="2.0" fill="#a8b8b4"/><circle cx="48.5" cy="95.8" r="1.3" fill="#2f6b7c"/><circle cx="10.8" cy="5.6" r="2.2" fill="#7a7d84"/><rect width="150" height="188" fill="url(#dshade)"/></g></symbol><symbol id="dice2" viewBox="0 0 100 100" preserveAspectRatio="none"><rect width="100" height="100" fill="#7b727e"/><circle cx="45.2" cy="56.0" r="2.6" fill="#a093a8"/><circle cx="50.8" cy="58.7" r="1.6" fill="#a093a8"/><circle cx="63.0" cy="79.3" r="1.2" fill="#a093a8"/><circle cx="30.3" cy="9.1" r="1.2" fill="#5a6a70"/><circle cx="96.5" cy="65.4" r="3.2" fill="#7c8a7c"/><circle cx="62.3" cy="83.2" r="1.2" fill="#5e6e78"/><circle cx="3.6" cy="88.0" r="3.2" fill="#5e6e78"/><circle cx="77.8" cy="32.6" r="3.2" fill="#9a88a0"/><circle cx="51.9" cy="64.0" r="2.6" fill="#5e6e78"/><circle cx="66.2" cy="45.7" r="2.0" fill="#5a6a70"/><circle cx="99.8" cy="99.6" r="1.2" fill="#6e5a6a"/><circle cx="31.5" cy="23.0" r="2.0" fill="#5e6e78"/><circle cx="7.0" cy="76.6" r="2.6" fill="#4e6472"/><circle cx="84.7" cy="38.7" r="1.2" fill="#5e6e78"/><circle cx="21.4" cy="92.7" r="1.2" fill="#a093a8"/><circle cx="37.5" cy="70.9" r="2.6" fill="#4e6472"/><circle cx="56.6" cy="19.8" r="2.0" fill="#8a7c90"/><circle cx="8.7" cy="33.3" r="2.6" fill="#4e6472"/><circle cx="13.5" cy="70.7" r="1.2" fill="#5e6e78"/><circle cx="46.5" cy="48.7" r="3.2" fill="#9a88a0"/><circle cx="44.7" cy="19.1" r="1.6" fill="#5a6a70"/><circle cx="64.4" cy="11.7" r="2.6" fill="#9a88a0"/><circle cx="0.0" cy="86.4" r="3.2" fill="#6e5a6a"/><circle cx="99.8" cy="2.0" r="1.6" fill="#5a6a70"/><circle cx="99.6" cy="60.2" r="3.2" fill="#4e6472"/><circle cx="4.2" cy="14.6" r="2.6" fill="#6e5a6a"/><circle cx="1.0" cy="61.0" r="2.0" fill="#5a6a70"/><circle cx="7.3" cy="9.0" r="3.2" fill="#9a88a0"/><circle cx="1.6" cy="36.9" r="3.2" fill="#a093a8"/><circle cx="12.7" cy="58.7" r="3.2" fill="#7c8a7c"/><circle cx="86.7" cy="18.3" r="1.6" fill="#6e5a6a"/><circle cx="90.8" cy="81.8" r="1.6" fill="#9a88a0"/><circle cx="15.8" cy="62.9" r="3.2" fill="#9a88a0"/><circle cx="68.7" cy="38.8" r="2.6" fill="#4e6472"/><circle cx="42.1" cy="10.4" r="1.2" fill="#6e5a6a"/><circle cx="23.8" cy="70.5" r="2.0" fill="#5a6a70"/><circle cx="82.4" cy="59.6" r="2.0" fill="#7c8a7c"/><circle cx="92.9" cy="97.7" r="1.6" fill="#9a88a0"/><circle cx="47.9" cy="65.4" r="3.2" fill="#4e6472"/><circle cx="28.0" cy="91.7" r="1.6" fill="#5e6e78"/><circle cx="6.9" cy="41.1" r="1.6" fill="#5e6e78"/><circle cx="4.7" cy="28.2" r="3.2" fill="#7c8a7c"/><circle cx="9.2" cy="13.8" r="2.6" fill="#8a7c90"/><circle cx="65.7" cy="69.1" r="3.2" fill="#7c8a7c"/><circle cx="59.0" cy="92.4" r="2.6" fill="#8a7c90"/><circle cx="70.1" cy="96.3" r="1.2" fill="#4e6472"/><circle cx="48.2" cy="73.0" r="2.0" fill="#7c8a7c"/><circle cx="99.9" cy="7.5" r="3.2" fill="#8a7c90"/><circle cx="73.7" cy="90.0" r="1.6" fill="#8a7c90"/><circle cx="35.2" cy="68.5" r="1.2" fill="#5a6a70"/><circle cx="94.4" cy="3.0" r="2.6" fill="#5e6e78"/><circle cx="62.5" cy="38.2" r="3.2" fill="#5e6e78"/><circle cx="60.9" cy="8.0" r="1.2" fill="#6e5a6a"/><circle cx="88.0" cy="72.8" r="2.6" fill="#a093a8"/><circle cx="44.1" cy="83.8" r="1.2" fill="#5e6e78"/><circle cx="31.0" cy="8.8" r="1.2" fill="#9a88a0"/><circle cx="95.7" cy="11.3" r="3.2" fill="#a093a8"/><circle cx="25.6" cy="1.1" r="2.0" fill="#7c8a7c"/><circle cx="67.8" cy="20.3" r="1.6" fill="#8a7c90"/><circle cx="66.0" cy="44.2" r="1.6" fill="#8a7c90"/><circle cx="40.5" cy="25.1" r="2.6" fill="#9a88a0"/><circle cx="88.0" cy="38.4" r="3.2" fill="#8a7c90"/><circle cx="21.0" cy="13.5" r="2.0" fill="#5e6e78"/><circle cx="71.1" cy="95.0" r="2.0" fill="#7c8a7c"/><circle cx="11.3" cy="47.1" r="1.6" fill="#5a6a70"/><circle cx="38.3" cy="52.0" r="2.0" fill="#a093a8"/><circle cx="32.0" cy="82.9" r="2.0" fill="#5e6e78"/><circle cx="67.8" cy="28.1" r="2.0" fill="#6e5a6a"/><circle cx="64.9" cy="56.4" r="1.6" fill="#5a6a70"/><circle cx="45.5" cy="2.5" r="2.0" fill="#9a88a0"/><circle cx="77.9" cy="79.7" r="1.2" fill="#a093a8"/><circle cx="10.9" cy="53.5" r="2.0" fill="#4e6472"/><circle cx="68.4" cy="19.9" r="2.6" fill="#6e5a6a"/><circle cx="17.9" cy="1.1" r="2.6" fill="#5e6e78"/><circle cx="17.9" cy="27.2" r="2.0" fill="#7c8a7c"/><circle cx="39.4" cy="79.2" r="1.6" fill="#4e6472"/><circle cx="41.0" cy="89.3" r="2.6" fill="#7c8a7c"/><circle cx="45.1" cy="19.7" r="1.2" fill="#5a6a70"/><circle cx="55.0" cy="65.3" r="3.2" fill="#8a7c90"/><circle cx="46.4" cy="65.1" r="1.6" fill="#4e6472"/><circle cx="72.2" cy="81.8" r="1.2" fill="#9a88a0"/><circle cx="24.2" cy="39.0" r="1.2" fill="#6e5a6a"/><circle cx="53.7" cy="79.1" r="2.0" fill="#6e5a6a"/><circle cx="91.0" cy="85.6" r="2.0" fill="#4e6472"/><circle cx="3.7" cy="34.2" r="2.6" fill="#6e5a6a"/><circle cx="48.7" cy="2.8" r="1.2" fill="#5a6a70"/><circle cx="80.0" cy="17.3" r="2.0" fill="#7c8a7c"/><circle cx="47.1" cy="100.0" r="3.2" fill="#a093a8"/><circle cx="94.6" cy="49.3" r="1.2" fill="#9a88a0"/><circle cx="43.9" cy="55.9" r="3.2" fill="#7c8a7c"/><circle cx="52.3" cy="84.4" r="3.2" fill="#6e5a6a"/><circle cx="31.2" cy="38.1" r="3.2" fill="#9a88a0"/><circle cx="30.4" cy="14.1" r="3.2" fill="#6e5a6a"/><circle cx="57.3" cy="20.1" r="3.2" fill="#4e6472"/><circle cx="50.3" cy="60.5" r="1.2" fill="#5e6e78"/><circle cx="51.6" cy="40.1" r="3.2" fill="#4e6472"/><circle cx="49.1" cy="69.1" r="1.2" fill="#a093a8"/><circle cx="41.4" cy="95.7" r="2.6" fill="#6e5a6a"/><circle cx="24.6" cy="49.3" r="2.0" fill="#5a6a70"/><circle cx="90.1" cy="93.6" r="2.6" fill="#8a7c90"/><circle cx="10.9" cy="42.0" r="1.2" fill="#6e5a6a"/><circle cx="12.9" cy="77.9" r="1.2" fill="#5e6e78"/><circle cx="19.4" cy="22.7" r="2.0" fill="#8a7c90"/><circle cx="72.4" cy="24.4" r="2.6" fill="#4e6472"/><circle cx="50.0" cy="58.2" r="3.2" fill="#6e5a6a"/><circle cx="71.8" cy="70.1" r="2.6" fill="#5e6e78"/><circle cx="37.6" cy="41.3" r="3.2" fill="#7c8a7c"/><circle cx="53.8" cy="86.4" r="3.2" fill="#9a88a0"/><circle cx="53.0" cy="85.1" r="3.2" fill="#7c8a7c"/><circle cx="23.3" cy="74.1" r="2.0" fill="#7c8a7c"/><circle cx="31.6" cy="31.5" r="1.6" fill="#9a88a0"/><circle cx="77.8" cy="19.5" r="1.2" fill="#7c8a7c"/><circle cx="88.9" cy="13.3" r="1.2" fill="#6e5a6a"/><circle cx="38.8" cy="43.5" r="2.6" fill="#7c8a7c"/><circle cx="20.1" cy="62.8" r="1.2" fill="#4e6472"/><circle cx="20.1" cy="68.2" r="2.0" fill="#4e6472"/><circle cx="70.5" cy="63.5" r="2.0" fill="#9a88a0"/><circle cx="80.3" cy="48.2" r="1.2" fill="#5e6e78"/><circle cx="76.2" cy="61.3" r="3.2" fill="#a093a8"/><circle cx="14.7" cy="18.5" r="1.6" fill="#7c8a7c"/><circle cx="84.0" cy="99.0" r="1.2" fill="#5e6e78"/><circle cx="13.4" cy="68.1" r="1.2" fill="#4e6472"/><circle cx="32.7" cy="46.7" r="3.2" fill="#8a7c90"/><circle cx="43.0" cy="60.1" r="1.2" fill="#5e6e78"/><circle cx="84.4" cy="18.1" r="2.6" fill="#8a7c90"/><circle cx="73.9" cy="40.5" r="1.6" fill="#7c8a7c"/><circle cx="9.5" cy="79.2" r="2.0" fill="#4e6472"/><circle cx="80.2" cy="70.5" r="2.6" fill="#9a88a0"/><circle cx="50.4" cy="98.3" r="2.0" fill="#6e5a6a"/><circle cx="91.1" cy="74.4" r="1.6" fill="#5a6a70"/><circle cx="13.3" cy="33.0" r="3.2" fill="#8a7c90"/><circle cx="76.7" cy="76.5" r="2.6" fill="#9a88a0"/><circle cx="72.3" cy="7.1" r="2.0" fill="#6e5a6a"/><circle cx="46.9" cy="1.1" r="2.0" fill="#5e6e78"/><circle cx="23.2" cy="94.5" r="2.0" fill="#8a7c90"/><circle cx="21.6" cy="40.6" r="1.6" fill="#4e6472"/><circle cx="39.0" cy="100.0" r="1.6" fill="#4e6472"/><circle cx="76.2" cy="98.0" r="1.2" fill="#4e6472"/><circle cx="61.5" cy="73.9" r="2.0" fill="#a093a8"/><circle cx="40.2" cy="5.0" r="1.6" fill="#5a6a70"/><circle cx="1.1" cy="25.9" r="2.0" fill="#8a7c90"/><circle cx="55.0" cy="50.8" r="3.2" fill="#4e6472"/><circle cx="63.8" cy="81.0" r="1.2" fill="#5e6e78"/><circle cx="38.6" cy="93.9" r="2.6" fill="#a093a8"/><circle cx="97.0" cy="85.6" r="3.2" fill="#5e6e78"/><circle cx="43.0" cy="49.5" r="2.0" fill="#5a6a70"/><circle cx="59.8" cy="36.6" r="2.0" fill="#a093a8"/><circle cx="65.5" cy="56.1" r="2.0" fill="#6e5a6a"/><circle cx="2.7" cy="77.2" r="3.2" fill="#5e6e78"/><circle cx="63.3" cy="40.9" r="2.6" fill="#5e6e78"/><circle cx="89.8" cy="74.8" r="1.2" fill="#8a7c90"/><circle cx="7.4" cy="90.6" r="2.6" fill="#a093a8"/><circle cx="25.1" cy="75.5" r="1.2" fill="#4e6472"/><circle cx="93.7" cy="72.3" r="2.6" fill="#7c8a7c"/><circle cx="97.9" cy="81.7" r="3.2" fill="#4e6472"/><circle cx="5.0" cy="41.7" r="1.2" fill="#9a88a0"/><circle cx="86.1" cy="35.7" r="1.6" fill="#4e6472"/><circle cx="36.3" cy="14.0" r="2.6" fill="#a093a8"/><circle cx="60.1" cy="64.0" r="2.6" fill="#8a7c90"/><circle cx="77.8" cy="53.1" r="1.6" fill="#6e5a6a"/><circle cx="73.4" cy="23.8" r="1.2" fill="#6e5a6a"/><circle cx="78.4" cy="62.5" r="2.0" fill="#6e5a6a"/><circle cx="27.2" cy="68.5" r="3.2" fill="#9a88a0"/><circle cx="63.3" cy="75.3" r="1.6" fill="#9a88a0"/><circle cx="50.2" cy="65.3" r="1.6" fill="#5e6e78"/><circle cx="62.8" cy="0.9" r="2.0" fill="#5a6a70"/><circle cx="2.7" cy="3.8" r="1.6" fill="#6e5a6a"/><circle cx="7.2" cy="8.6" r="1.6" fill="#9a88a0"/><circle cx="63.1" cy="37.3" r="2.6" fill="#8a7c90"/><circle cx="21.1" cy="34.4" r="1.6" fill="#4e6472"/><circle cx="80.2" cy="44.7" r="3.2" fill="#9a88a0"/><circle cx="44.4" cy="74.7" r="2.6" fill="#7c8a7c"/><circle cx="36.9" cy="65.4" r="3.2" fill="#8a7c90"/><circle cx="29.1" cy="75.9" r="1.6" fill="#5a6a70"/><circle cx="65.4" cy="58.1" r="2.6" fill="#8a7c90"/><circle cx="7.9" cy="8.3" r="3.2" fill="#a093a8"/><circle cx="81.5" cy="46.4" r="1.2" fill="#4e6472"/><circle cx="31.0" cy="91.1" r="3.2" fill="#4e6472"/><circle cx="69.5" cy="49.5" r="2.0" fill="#6e5a6a"/><circle cx="88.2" cy="21.9" r="2.0" fill="#8a7c90"/><circle cx="90.6" cy="32.2" r="2.6" fill="#6e5a6a"/><circle cx="43.8" cy="80.3" r="2.0" fill="#a093a8"/><circle cx="31.8" cy="40.0" r="3.2" fill="#9a88a0"/><circle cx="8.4" cy="82.9" r="1.2" fill="#8a7c90"/><circle cx="67.7" cy="58.5" r="1.6" fill="#8a7c90"/><circle cx="79.7" cy="54.1" r="3.2" fill="#7c8a7c"/><circle cx="17.7" cy="75.9" r="2.0" fill="#5e6e78"/><circle cx="22.1" cy="5.8" r="1.6" fill="#6e5a6a"/><circle cx="96.6" cy="65.1" r="2.6" fill="#4e6472"/><circle cx="58.2" cy="30.5" r="3.2" fill="#4e6472"/><circle cx="33.5" cy="27.4" r="1.2" fill="#8a7c90"/><circle cx="8.5" cy="63.4" r="1.6" fill="#4e6472"/><circle cx="74.6" cy="64.9" r="1.6" fill="#9a88a0"/><circle cx="48.9" cy="90.8" r="2.0" fill="#a093a8"/><circle cx="39.4" cy="33.8" r="2.0" fill="#7c8a7c"/><circle cx="49.4" cy="53.7" r="1.2" fill="#5e6e78"/><circle cx="41.1" cy="82.6" r="2.0" fill="#5e6e78"/><circle cx="80.6" cy="83.4" r="2.6" fill="#5e6e78"/><circle cx="52.4" cy="71.0" r="1.2" fill="#5a6a70"/><circle cx="92.4" cy="91.6" r="1.6" fill="#7c8a7c"/><circle cx="99.1" cy="37.6" r="1.6" fill="#8a7c90"/><circle cx="20.4" cy="42.5" r="2.0" fill="#6e5a6a"/><circle cx="97.0" cy="5.9" r="2.0" fill="#4e6472"/><circle cx="30.3" cy="15.6" r="1.6" fill="#5e6e78"/><circle cx="75.3" cy="1.7" r="2.6" fill="#5e6e78"/><circle cx="31.3" cy="19.8" r="2.0" fill="#9a88a0"/><circle cx="58.8" cy="60.0" r="2.6" fill="#9a88a0"/><circle cx="44.2" cy="89.5" r="2.6" fill="#7c8a7c"/><circle cx="91.1" cy="93.7" r="3.2" fill="#a093a8"/><circle cx="85.3" cy="48.5" r="2.6" fill="#8a7c90"/><circle cx="66.0" cy="77.2" r="1.2" fill="#a093a8"/><circle cx="86.3" cy="39.9" r="1.6" fill="#7c8a7c"/><circle cx="80.1" cy="38.5" r="3.2" fill="#6e5a6a"/><circle cx="78.8" cy="5.8" r="1.6" fill="#5e6e78"/><circle cx="87.4" cy="90.5" r="2.6" fill="#9a88a0"/><circle cx="71.3" cy="60.6" r="1.6" fill="#5a6a70"/><circle cx="15.7" cy="32.2" r="2.0" fill="#7c8a7c"/><circle cx="63.7" cy="99.3" r="2.0" fill="#5e6e78"/><circle cx="15.1" cy="77.0" r="1.2" fill="#9a88a0"/><circle cx="82.1" cy="84.6" r="1.6" fill="#4e6472"/><circle cx="35.2" cy="61.5" r="3.2" fill="#4e6472"/><circle cx="89.0" cy="69.4" r="1.2" fill="#6e5a6a"/><circle cx="1.9" cy="18.8" r="1.6" fill="#4e6472"/><circle cx="78.1" cy="44.0" r="1.2" fill="#5a6a70"/><circle cx="52.6" cy="15.8" r="2.0" fill="#8a7c90"/><circle cx="31.1" cy="7.6" r="2.0" fill="#a093a8"/><circle cx="66.7" cy="6.7" r="1.2" fill="#7c8a7c"/><circle cx="10.6" cy="39.4" r="2.6" fill="#4e6472"/><circle cx="65.4" cy="1.2" r="2.6" fill="#a093a8"/><circle cx="23.7" cy="56.4" r="2.6" fill="#5e6e78"/><circle cx="85.6" cy="84.5" r="1.6" fill="#7c8a7c"/><circle cx="29.0" cy="37.6" r="3.2" fill="#6e5a6a"/><circle cx="95.4" cy="75.5" r="3.2" fill="#4e6472"/><circle cx="25.6" cy="20.0" r="1.2" fill="#8a7c90"/><circle cx="31.0" cy="27.4" r="2.6" fill="#8a7c90"/><circle cx="44.7" cy="38.2" r="1.2" fill="#7c8a7c"/><circle cx="62.2" cy="13.1" r="1.6" fill="#7c8a7c"/><circle cx="19.3" cy="3.6" r="2.6" fill="#4e6472"/><circle cx="10.0" cy="3.2" r="1.2" fill="#5a6a70"/><circle cx="40.7" cy="7.3" r="2.6" fill="#7c8a7c"/><circle cx="64.7" cy="76.7" r="2.6" fill="#a093a8"/><circle cx="33.1" cy="41.2" r="1.2" fill="#5a6a70"/><circle cx="61.3" cy="31.8" r="1.6" fill="#5e6e78"/><circle cx="26.1" cy="18.9" r="2.0" fill="#a093a8"/><circle cx="10.6" cy="37.8" r="3.2" fill="#8a7c90"/><circle cx="78.9" cy="82.5" r="3.2" fill="#7c8a7c"/><circle cx="25.4" cy="53.9" r="2.0" fill="#9a88a0"/><circle cx="35.3" cy="50.0" r="1.6" fill="#9a88a0"/><circle cx="98.7" cy="51.6" r="1.6" fill="#5e6e78"/><circle cx="62.7" cy="19.8" r="1.2" fill="#7c8a7c"/><circle cx="24.5" cy="57.6" r="2.0" fill="#8a7c90"/><circle cx="9.2" cy="87.3" r="2.0" fill="#a093a8"/><circle cx="88.3" cy="45.2" r="1.6" fill="#9a88a0"/><circle cx="90.4" cy="54.3" r="3.2" fill="#4e6472"/><circle cx="56.0" cy="26.4" r="2.0" fill="#7c8a7c"/><circle cx="12.3" cy="82.5" r="2.0" fill="#8a7c90"/><circle cx="24.1" cy="57.4" r="1.6" fill="#7c8a7c"/><circle cx="59.8" cy="81.1" r="2.6" fill="#5e6e78"/><circle cx="40.3" cy="78.3" r="1.6" fill="#6e5a6a"/><circle cx="75.6" cy="84.7" r="2.6" fill="#5e6e78"/><rect width="100" height="100" fill="url(#dshade)"/></symbol></defs></svg>
<div class="r" style="left:0px;top:0px;width:3024px;height:76px;background:#9467c9;"></div>
<div class="r" style="left:0px;top:74px;width:3024px;height:2px;background:#7a54ae;"></div>
<div class="r" style="left:0px;top:1790px;width:3024px;height:32px;background:linear-gradient(90deg,#8655bd,#7447a8 10%,#7d4caf 50%,#7a4aad 90%,#8a58c2);"></div>
<div class="r" style="left:116px;top:1818px;width:2792px;height:10px;background:linear-gradient(#c49af2,#b687ea);border-radius:14px 14px 0 0;"></div>
<div class="r" style="left:0px;top:75px;width:3024px;height:1740px;background:#000;border-radius:16px 16px 18px 18px;overflow:hidden;"></div>
<div class="r" style="left:0px;top:75px;width:3024px;height:57px;background:linear-gradient(#ebe9ee,#e6e4e9);border-radius:16px 16px 0 0;"></div>
<div class="r" style="left:16px;top:92px;width:24px;height:24px;border-radius:50%;background:#d5d3d8;border:1px solid #b5b3b9;"></div>
<div class="r" style="left:56px;top:92px;width:24px;height:24px;border-radius:50%;background:#d5d3d8;border:1px solid #b5b3b9;"></div>
<div class="r" style="left:96px;top:92px;width:24px;height:24px;border-radius:50%;background:#d5d3d8;border:1px solid #b5b3b9;"></div>
<div class="r" style="left:1004px;top:87px;width:24px;height:29px;background:#8a8a8c;border-radius:2px 6px 2px 2px;box-shadow:inset 0 0 0 1px #6e6e70;"></div>
<div class="t" style="left:1006.00px;top:90.19px;font-size:15.07px;color:#d8d8d8;font-weight:bold;transform:scaleX(0.8128);">Lrc</div>
<div class="t" style="left:1010.70px;top:105.64px;font-size:7.25px;color:#e8e8e8;font-weight:bold;transform:scaleX(0.7292);">CAT</div>
<div class="t" style="left:1048.00px;top:89.63px;font-size:26.67px;color:#9e9da2;font-weight:bold;transform:scaleX(1.0150);">Trial Photogrammetry.lrcat - Adobe Photoshop Lightroom Classic - Develop</div>
<svg style="left:41px;top:20px" width="26.3" height="30" viewBox="0 0 28 32"><path fill="#fff" d="M23.2 17.1c0-4.2 3.4-6.2 3.6-6.3-2-2.9-5-3.3-6.1-3.3-2.6-.3-5.1 1.5-6.4 1.5-1.3 0-3.4-1.5-5.5-1.5C6 7.6 3.4 9.2 2 11.700c-2.9 5-.7 12.500 2.100 16.600 1.400 2 3 4.200 5.100 4.100 2.100-.1 2.800-1.300 5.300-1.300 2.500 0 3.200 1.300 5.300 1.300 2.200 0 3.600-2 5-4 1.600-2.300 2.200-4.500 2.300-4.600-.1 0-4.400-1.700-4.400-6.700zM19.100 4.900C20.200 3.500 21 1.700 20.800 0c-1.600.1-3.500 1.100-4.700 2.400-1 1.200-1.900 3-1.700 4.700 1.800.1 3.600-.9 4.700-2.200z"/></svg>
<div class="t" style="left:109.00px;top:20.79px;font-size:29.42px;color:#fff;font-weight:bold;transform:scaleX(0.9015);text-shadow:0 1px 2px rgba(60,30,90,0.35);">Lightroom Classic</div>
<div class="t" style="left:383.00px;top:20.79px;font-size:29.42px;color:#fff;transform:scaleX(0.8443);text-shadow:0 1px 2px rgba(60,30,90,0.35);">File</div>
<div class="t" style="left:467.00px;top:20.79px;font-size:29.42px;color:#fff;transform:scaleX(0.8691);text-shadow:0 1px 2px rgba(60,30,90,0.35);">Edit</div>
<div class="t" style="left:555.00px;top:20.79px;font-size:29.42px;color:#fff;transform:scaleX(0.8984);text-shadow:0 1px 2px rgba(60,30,90,0.35);">Window</div>
<div class="t" style="left:693.00px;top:20.79px;font-size:29.42px;color:#fff;transform:scaleX(0.8944);text-shadow:0 1px 2px rgba(60,30,90,0.35);">Help</div>
<svg style="left:2193px;top:20px" width="34" height="34" viewBox="0 0 34 34"><circle cx="17" cy="17" r="15.2" fill="none" stroke="#000" stroke-width="2"/><path d="M17 5 L28 25 H6Z" fill="#000" stroke="#000" stroke-width="2" stroke-linejoin="round"/><path d="M10 5 C7 9 8 12 10 13 M28 22 C30 26 27 29 24 29 M6 22 C8 28 12 30 15 30" fill="none" stroke="#000" stroke-width="1.6"/></svg>
<svg style="left:2265px;top:20px" width="42" height="36" viewBox="0 0 42 36"><path d="M12 30 C4 30 1 25 1 20 C1 14 6 10 12 10 C14 4 20 1 26 1 C33 1 38 6 40 12" fill="none" stroke="#f3eff6" stroke-width="2.4"/><path d="M18 30 L9 22 C6 19 8 13 13 13 C17 13 19 17 21 19" fill="none" stroke="#f3eff6" stroke-width="4.5"/><path d="M17 14 C20 8 28 8 32 13" fill="none" stroke="#f3eff6" stroke-width="4.5"/><circle cx="32" cy="25" r="9.1" fill="#e1502a"/></svg>
<svg style="left:2358px;top:22px" width="38" height="32" viewBox="0 0 38 32"><rect x="2" y="2" width="26" height="21" rx="4" fill="none" stroke="#f3eff6" stroke-width="2.4"/><rect x="9" y="9" width="26" height="21" rx="4" fill="#8d5fc2" stroke="#f3eff6" stroke-width="2.4"/></svg>
<svg style="left:2439px;top:24px" width="54" height="26" viewBox="0 0 54 26"><rect x="1.5" y="1.5" width="45" height="23" rx="6" fill="none" stroke="rgba(243,239,246,0.45)" stroke-width="2"/><rect x="4.5" y="4.5" width="24.5" height="16.5" rx="3.5" fill="#f3eff6"/><path d="M49 9.5 C51.5 10.5 51.5 15.5 49 16.5Z" fill="rgba(243,239,246,0.45)"/></svg>
<svg style="left:2528px;top:23px" width="36" height="27" viewBox="0 0 36 27"><path d="M1.5 8 A24 24 0 0 1 34.5 8 L32 10.8 A20.5 20.5 0 0 0 4 10.8Z" fill="#f3eff6"/><path d="M7.5 15 A15 15 0 0 1 28.5 15 L25.5 17.8 A11 11 0 0 0 10.5 17.8Z" fill="#f3eff6"/><path d="M13 21.5 A7 7 0 0 1 23 21.5 L18 26.5Z" fill="#f3eff6"/><path d="M1.5 8 A24 24 0 0 1 34.5 8" fill="none"/></svg>
<svg style="left:2600px;top:21px" width="30" height="30" viewBox="0 0 30 30"><circle cx="13" cy="13" r="9.3" fill="none" stroke="#f3eff6" stroke-width="2.5"/><path d="M19.7 19.7 L27 27" stroke="#f3eff6" stroke-width="2.8" stroke-linecap="round"/></svg>
<svg style="left:2667px;top:22px" width="30" height="30" viewBox="0 0 30 30"><rect x="2.5" y="2.2" width="25" height="11.5" rx="5.75" fill="none" stroke="#f3eff6" stroke-width="2"/><circle cx="8.3" cy="8" r="3" fill="#f3eff6"/><rect x="1.5" y="16.5" width="27" height="12" rx="6" fill="#f3eff6"/><circle cx="22.5" cy="22.5" r="3.4" fill="#8d5fc2"/></svg>
<div class="t" style="left:2734.00px;top:20.26px;font-size:28.99px;color:#fff;transform:scaleX(0.9455);text-shadow:0 1px 2px rgba(60,30,90,0.35);">Thu Jul 17  11:53 AM</div>
<div class="r" style="left:30px;top:246px;width:2964px;height:1294px;border:2px solid #474747;"></div>
<div class="r" style="left:36px;top:252px;width:18px;height:719px;background:repeating-linear-gradient(90deg,#3d3d3d 0 2px,#000 2px 4px);"></div>
<div class="r" style="left:36px;top:252px;width:18px;height:2px;background:#3d3d3d;"></div>
<div class="r" style="left:52px;top:252px;width:2px;height:719px;background:#3d3d3d;"></div>
<div class="r" style="left:36px;top:969px;width:18px;height:2px;background:#3d3d3d;"></div>
<div class="r" style="left:36px;top:1450px;width:18px;height:83px;background:repeating-linear-gradient(90deg,#3d3d3d 0 2px,#000 2px 4px);"></div>
<div class="r" style="left:36px;top:1450px;width:18px;height:2px;background:#3d3d3d;"></div>
<div class="r" style="left:52px;top:1450px;width:2px;height:83px;background:#3d3d3d;"></div>
<div class="r" style="left:36px;top:1531px;width:18px;height:2px;background:#3d3d3d;"></div>
<div class="r" style="left:58px;top:252px;width:554px;height:1281px;background:#323232;"></div>
<div class="r" style="left:58px;top:252px;width:554px;height:58px;background:linear-gradient(#2e2e2e,#353535);"></div>
<svg style="left:76px;top:270px" width="22" height="23" viewBox="0 0 22 23"><path d="M1.5 1.5 L20.5 1.5 L11 21.5 Z" fill="#b3b3b3" stroke="#000" stroke-width="2" stroke-linejoin="round"/></svg>
<div class="t" style="left:118.00px;top:266.13px;font-size:30.43px;color:#b4b4b4;transform:scaleX(0.9462);text-shadow:1px 1px 1px rgba(0,0,0,0.8);">Navigator</div>
<div class="t" style="left:376.00px;top:271.99px;font-size:18.84px;color:#eeeeee;transform:scaleX(0.8533);text-shadow:1px 1px 1px rgba(0,0,0,0.8);">FIT</div>
<svg style="left:404px;top:272px" width="11" height="17" viewBox="0 0 11 17"><path d="M5.5 0 L11 6 L0 6Z M0 10 L11 10 L5.5 16Z" fill="#808080"/></svg>
<div class="t" style="left:440.00px;top:271.99px;font-size:18.84px;color:#989898;transform:scaleX(0.9062);text-shadow:1px 1px 1px rgba(0,0,0,0.8);">100%</div>
<div class="t" style="left:523.00px;top:271.99px;font-size:18.84px;color:#989898;transform:scaleX(0.9200);text-shadow:1px 1px 1px rgba(0,0,0,0.8);">25%</div>
<svg style="left:586px;top:272px" width="11" height="17" viewBox="0 0 11 17"><path d="M5.5 0 L11 6 L0 6Z M0 10 L11 10 L5.5 16Z" fill="#808080"/></svg>
<div class="r" style="left:68px;top:310px;width:534px;height:538px;background:#2f2f2f;border:2px solid #000;"></div>
<div class="r" style="left:70px;top:312px;width:530px;height:2px;background:#474747;"></div>
<div class="r" style="left:70px;top:312px;width:2px;height:534px;background:#474747;"></div>
<div class="r" style="left:68px;top:848px;width:536px;height:2px;background:#474747;"></div>
<div class="r" style="left:602px;top:310px;width:2px;height:538px;background:#474747;"></div>
<div class="r" style="left:88px;top:408px;width:494px;height:331px;background:#fff;"></div>
<div class="r" style="left:90px;top:410px;width:490px;height:327px;background:#111;"></div>
<div class="r" style="left:92px;top:412px;width:486px;height:323px;background:linear-gradient(#d9d7dc,#d6d4d9 60%,#d2d0d5);overflow:hidden;"><div class="r" style="left:228.0px;top:151.7px;width:180.0px;height:141.0px;border-radius:50%;background:radial-gradient(closest-side,rgba(110,108,118,0.16),rgba(110,108,118,0));"></div><svg style="left:168.0px;top:76.5px" width="150.0" height="188.0"><use href="#dice" width="150.0" height="188.0"/></svg></div><div class="r" style="left:68px;top:860px;width:534px;height:110px;background:linear-gradient(#3d3d3d,#3a3a3a);border:2px solid #000;"></div>
<div class="r" style="left:70px;top:862px;width:530px;height:2px;background:#474747;"></div>
<div class="r" style="left:70px;top:862px;width:2px;height:106px;background:#474747;"></div>
<div class="r" style="left:68px;top:970px;width:536px;height:2px;background:#474747;"></div>
<div class="r" style="left:602px;top:860px;width:2px;height:110px;background:#474747;"></div>
<div class="t" style="left:95.00px;top:882.59px;font-size:23.19px;color:#282828;transform:scaleX(0.8983);text-shadow:0 1px 1px rgba(255,255,255,0.07);">Preset : None</div>
<div class="t" style="left:95.00px;top:926.79px;font-size:23.19px;color:#282828;transform:scaleX(0.9154);text-shadow:0 1px 1px rgba(255,255,255,0.07);">Amount</div>
<div class="r" style="left:186px;top:938px;width:298px;height:9px;background:#3a3a3a;border:2px solid #161616;border-radius:5px;box-shadow:0 1px 0 rgba(255,255,255,0.06);"></div>
<div class="r" style="left:198px;top:929px;width:2px;height:6px;background:#242424;"></div>
<div class="r" style="left:232px;top:931px;width:2px;height:4px;background:#242424;"></div>
<div class="r" style="left:266px;top:931px;width:2px;height:4px;background:#242424;"></div>
<div class="r" style="left:300px;top:931px;width:2px;height:4px;background:#242424;"></div>
<div class="r" style="left:334px;top:931px;width:2px;height:4px;background:#242424;"></div>
<div class="r" style="left:368px;top:931px;width:2px;height:4px;background:#242424;"></div>
<div class="r" style="left:402px;top:931px;width:2px;height:4px;background:#242424;"></div>
<div class="r" style="left:436px;top:931px;width:2px;height:4px;background:#242424;"></div>
<div class="r" style="left:470px;top:929px;width:2px;height:6px;background:#242424;"></div>
<svg style="left:323px;top:929px" width="24" height="24" viewBox="0 0 24 24"><path d="M12 2 L19.5 12 A8.5 8.5 0 1 1 4.5 12 Z" fill="#353535" stroke="#0e0e0e" stroke-width="2"/></svg>
<div class="t" style="left:536.00px;top:919.86px;font-size:28.99px;color:#282828;transform:scaleX(0.8519);text-shadow:0 1px 1px rgba(255,255,255,0.07);">100</div>
<div class="r" style="left:68px;top:986px;width:534px;height:463px;background:linear-gradient(90deg,#3c3c3c 0,#505050 3px);border:2px solid #1c1c1c;border-top:none;"></div>
<svg style="left:106px;top:982.3px" width="21" height="21" viewBox="0 0 21 21"><path d="M2 2 L19 10 L2 18Z" fill="#b0b0b0" stroke="#2a2a2a" stroke-width="1.4" stroke-linejoin="round"/></svg>
<div class="t" style="left:146.50px;top:981.36px;font-size:24.64px;color:#cccccc;transform:scaleX(0.8921);text-shadow:2px 2px 2px rgba(0,0,0,0.75);">Portraits: Group</div>
<svg style="left:106px;top:1022.3px" width="21" height="21" viewBox="0 0 21 21"><path d="M2 2 L19 10 L2 18Z" fill="#b0b0b0" stroke="#2a2a2a" stroke-width="1.4" stroke-linejoin="round"/></svg>
<div class="t" style="left:146.50px;top:1021.32px;font-size:24.64px;color:#cccccc;transform:scaleX(0.8777);text-shadow:2px 2px 2px rgba(0,0,0,0.75);">Auto+: Retro</div>
<svg style="left:106px;top:1062.2px" width="21" height="21" viewBox="0 0 21 21"><path d="M2 2 L19 10 L2 18Z" fill="#b0b0b0" stroke="#2a2a2a" stroke-width="1.4" stroke-linejoin="round"/></svg>
<div class="t" style="left:146.50px;top:1061.28px;font-size:24.64px;color:#cccccc;transform:scaleX(0.8299);text-shadow:2px 2px 2px rgba(0,0,0,0.75);">Seasons: Spring</div>
<svg style="left:106px;top:1102.2px" width="21" height="21" viewBox="0 0 21 21"><path d="M2 2 L19 10 L2 18Z" fill="#b0b0b0" stroke="#2a2a2a" stroke-width="1.4" stroke-linejoin="round"/></svg>
<div class="t" style="left:146.50px;top:1101.24px;font-size:24.64px;color:#cccccc;transform:scaleX(0.8593);text-shadow:2px 2px 2px rgba(0,0,0,0.75);">Seasons: Summer</div>
<svg style="left:106px;top:1142.1px" width="21" height="21" viewBox="0 0 21 21"><path d="M2 2 L19 10 L2 18Z" fill="#b0b0b0" stroke="#2a2a2a" stroke-width="1.4" stroke-linejoin="round"/></svg>
<div class="t" style="left:146.50px;top:1141.20px;font-size:24.64px;color:#cccccc;transform:scaleX(0.8705);text-shadow:2px 2px 2px rgba(0,0,0,0.75);">Seasons: Autumn</div>
<svg style="left:106px;top:1182.1px" width="21" height="21" viewBox="0 0 21 21"><path d="M2 2 L19 10 L2 18Z" fill="#b0b0b0" stroke="#2a2a2a" stroke-width="1.4" stroke-linejoin="round"/></svg>
<div class="t" style="left:146.50px;top:1181.16px;font-size:24.64px;color:#cccccc;transform:scaleX(0.8581);text-shadow:2px 2px 2px rgba(0,0,0,0.75);">Seasons: Winter</div>
<svg style="left:106px;top:1222.1px" width="21" height="21" viewBox="0 0 21 21"><path d="M2 2 L19 10 L2 18Z" fill="#b0b0b0" stroke="#2a2a2a" stroke-width="1.4" stroke-linejoin="round"/></svg>
<div class="t" style="left:146.50px;top:1221.12px;font-size:24.64px;color:#cccccc;transform:scaleX(0.8162);text-shadow:2px 2px 2px rgba(0,0,0,0.75);">Style: Black &amp; White</div>
<svg style="left:106px;top:1262.0px" width="21" height="21" viewBox="0 0 21 21"><path d="M2 2 L19 10 L2 18Z" fill="#b0b0b0" stroke="#2a2a2a" stroke-width="1.4" stroke-linejoin="round"/></svg>
<div class="t" style="left:146.50px;top:1261.08px;font-size:24.64px;color:#cccccc;transform:scaleX(0.8658);text-shadow:2px 2px 2px rgba(0,0,0,0.75);">Style: Cinematic</div>
<svg style="left:106px;top:1302.0px" width="21" height="21" viewBox="0 0 21 21"><path d="M2 2 L19 10 L2 18Z" fill="#b0b0b0" stroke="#2a2a2a" stroke-width="1.4" stroke-linejoin="round"/></svg>
<div class="t" style="left:146.50px;top:1301.04px;font-size:24.64px;color:#cccccc;transform:scaleX(0.8670);text-shadow:2px 2px 2px rgba(0,0,0,0.75);">Style: Cinematic II</div>
<svg style="left:106px;top:1341.9px" width="21" height="21" viewBox="0 0 21 21"><path d="M2 2 L19 10 L2 18Z" fill="#b0b0b0" stroke="#2a2a2a" stroke-width="1.4" stroke-linejoin="round"/></svg>
<div class="t" style="left:146.50px;top:1341.00px;font-size:24.64px;color:#cccccc;transform:scaleX(0.8915);text-shadow:2px 2px 2px rgba(0,0,0,0.75);">Style: Futuristic</div>
<svg style="left:106px;top:1381.9px" width="21" height="21" viewBox="0 0 21 21"><path d="M2 2 L19 10 L2 18Z" fill="#b0b0b0" stroke="#2a2a2a" stroke-width="1.4" stroke-linejoin="round"/></svg>
<div class="t" style="left:146.50px;top:1380.96px;font-size:24.64px;color:#cccccc;transform:scaleX(0.8713);text-shadow:2px 2px 2px rgba(0,0,0,0.75);">Style: Vintage</div>
<svg style="left:106px;top:1421.9px" width="21" height="21" viewBox="0 0 21 21"><path d="M2 2 L19 10 L2 18Z" fill="#b0b0b0" stroke="#2a2a2a" stroke-width="1.4" stroke-linejoin="round"/></svg>
<div class="t" style="left:146.50px;top:1420.92px;font-size:24.64px;color:#cccccc;transform:scaleX(0.8695);text-shadow:2px 2px 2px rgba(0,0,0,0.75);">Subject: Concerts</div>
<div class="r" style="left:58px;top:972px;width:554px;height:10px;background:#323232;"></div>
<div class="r" style="left:58px;top:982px;width:554px;height:2px;background:#555;"></div>
<div class="r" style="left:58px;top:984px;width:554px;height:2px;background:#000;"></div>
<div class="r" style="left:36px;top:1064px;width:18px;height:84px;background:linear-gradient(90deg,#777,#a5a5a5 50%,#6a6a6a);border-radius:6px;"></div>
<div class="r" style="left:58px;top:1450px;width:554px;height:83px;background:#2e2e2e;"></div>
<svg style="left:330px;top:1455px" width="11" height="7" viewBox="0 0 11 7"><path d="M0 0 H11 L5.5 6.5Z" fill="#6e6e6e"/></svg>
<div class="r" style="left:68px;top:1467px;width:260px;height:52px;background:linear-gradient(#4a4a4a,#404040);border:2px solid #1f1f1f;"></div>
<div class="r" style="left:340px;top:1467px;width:261px;height:52px;background:linear-gradient(#4a4a4a,#404040);border:2px solid #1f1f1f;"></div>
<div class="t" style="left:160.50px;top:1477.36px;font-size:28.41px;color:#bdbdbd;transform:scaleX(0.8775);text-shadow:1px 1px 1px rgba(0,0,0,0.8);">Copy...</div>
<div class="t" style="left:439.50px;top:1477.36px;font-size:28.41px;color:#bdbdbd;transform:scaleX(0.8690);text-shadow:1px 1px 1px rgba(0,0,0,0.8);">Paste</div>
<div class="r" style="left:612px;top:252px;width:4px;height:1282px;background:#000;"></div>
<svg style="left:9px;top:881px" width="12" height="24" viewBox="0 0 12 24"><path d="M12 0 L12 24 L0 12Z" fill="#606060"/></svg>
<div class="r" style="left:40px;top:171px;width:55px;height:51px;background:#7b7b7b;border-radius:9px;"></div>
<div class="t" style="left:45.60px;top:179.27px;font-size:33.33px;color:#000;font-weight:bold;transform:scaleX(0.7686);-webkit-text-stroke:0.6px #000;">LrC</div>
<div class="t" style="left:125.00px;top:167.25px;font-size:20.29px;color:#9c9c9c;transform:scaleX(0.9772);">Adobe Lightroom Classic</div>
<div class="t" style="left:126.00px;top:188.90px;font-size:31.88px;color:#9c9c9c;transform:scaleX(0.9525);">Do Young RyuLim</div>
<div class="r" style="left:616px;top:252px;width:1770px;height:1196px;background:linear-gradient(#5c5c5c 0px,#7c7c7c 22px,#808080 60%,#8c8c8c 100%);"></div>
<div class="r" style="left:616px;top:252px;width:6px;height:1196px;background:rgba(0,0,0,0.12);"></div>
<div class="r" style="left:2380px;top:252px;width:6px;height:1196px;background:rgba(0,0,0,0.15);"></div>
<div class="r" style="left:652px;top:284px;width:1698px;height:1132px;background:#fafafa;"></div>
<div class="r" style="left:652px;top:1326px;width:1698px;height:90px;background:linear-gradient(rgba(0,0,0,0.24),rgba(0,0,0,0.10) 40%,rgba(0,0,0,0.0));"></div>
<div class="r" style="left:2386px;top:252px;width:4px;height:1282px;background:#000;"></div>
<div class="r" style="left:616px;top:1448px;width:1770px;height:4px;background:#000;"></div>
<div class="r" style="left:616px;top:1452px;width:1770px;height:82px;background:linear-gradient(#484848,#4f4f4f 30%,#545454 100%);"></div>
<div class="r" style="left:616px;top:1452px;width:1770px;height:3px;background:#555;"></div>
<div class="r" style="left:616px;top:1534px;width:1774px;height:4px;background:#000;"></div>
<div class="r" style="left:633px;top:1473px;width:60px;height:40px;background:linear-gradient(#cfcfcf,#b5b5b5);border:2px solid #2b2b2b;"></div>
<div class="r" style="left:645px;top:1482px;width:36px;height:22px;background:#4e4e4e;border:2px solid #222;"></div>
<div class="r" style="left:710px;top:1473px;width:65px;height:40px;background:linear-gradient(#6e6e6e,#5c5c5c);border:2px solid #2b2b2b;"></div>
<div class="r" style="left:742px;top:1475px;width:2px;height:36px;background:#2b2b2b;"></div>
<svg style="left:716px;top:1480px" width="54" height="24" viewBox="0 0 54 24"><path d="M2 22 V3 H15 L18 6 V10 L15 13 H2 M12 13 L18 22" fill="none" stroke="#2a2a2a" stroke-width="2"/><path d="M34 22 V7 L38 3 H47 L51 7 V22 M34 13 H51" fill="none" stroke="#2a2a2a" stroke-width="2"/></svg>
<svg style="left:788px;top:1489px" width="12" height="7" viewBox="0 0 12 7"><path d="M0 0 H12 L6 6Z" fill="#cfcfcf"/></svg>
<div class="r" style="left:812px;top:1473px;width:66px;height:40px;background:linear-gradient(#6e6e6e,#5c5c5c);border:2px solid #2b2b2b;"></div>
<div class="r" style="left:844px;top:1475px;width:2px;height:36px;background:#2b2b2b;"></div>
<svg style="left:817px;top:1480px" width="56" height="24" viewBox="0 0 56 24"><path d="M3 3 L12 13 L21 3 M12 13 V22 M35 3 L44 13 L53 3 M44 13 V22" fill="none" stroke="#2a2a2a" stroke-width="2"/></svg>
<svg style="left:890px;top:1489px" width="12" height="7" viewBox="0 0 12 7"><path d="M0 0 H12 L6 6Z" fill="#cfcfcf"/></svg>
<div class="r" style="left:914px;top:1466px;width:2px;height:54px;background:#3a3a3a;"></div>
<div class="r" style="left:934px;top:1482px;width:24px;height:24px;background:#3a3a3a;border:2px solid #2a2a2a;"></div>
<div class="t" style="left:973.00px;top:1475.36px;font-size:28.99px;color:#c4c4c4;transform:scaleX(0.9288);text-shadow:2px 2px 2px rgba(0,0,0,0.6);">Soft Proofing</div>
<div class="r" style="left:2316px;top:1466px;width:2px;height:54px;background:#3a3a3a;"></div>
<svg style="left:2337px;top:1485px" width="28" height="17" viewBox="0 0 28 17"><path d="M1.5 1.5 H26.5 L14 15.5Z" fill="#5e5e5e" stroke="#333" stroke-width="2" stroke-linejoin="round"/></svg>
<div class="t" style="left:2313.85px;top:185.14px;font-size:42.90px;color:#a6a6a6;">Book</div>
<div class="t" style="left:2457.00px;top:185.14px;font-size:42.90px;color:#a6a6a6;transform:scaleX(0.9201);">Slideshow</div>
<div class="t" style="left:2684.00px;top:185.14px;font-size:42.90px;color:#a6a6a6;transform:scaleX(0.9191);">Print</div>
<div class="t" style="left:2811.00px;top:185.14px;font-size:42.90px;color:#a6a6a6;transform:scaleX(0.8927);">Web</div>
<div class="r" style="left:2432.5px;top:188px;width:2px;height:38px;background:#a6a6a6;"></div>
<div class="r" style="left:2658.5px;top:188px;width:2px;height:38px;background:#a6a6a6;"></div>
<div class="r" style="left:2786.5px;top:188px;width:2px;height:38px;background:#a6a6a6;"></div>
<div class="r" style="left:2914px;top:188px;width:2px;height:38px;background:#a6a6a6;"></div>
<svg style="left:2941px;top:192px" width="44" height="30" viewBox="0 0 44 30"><g fill="#b8b8b8"><circle cx="7" cy="22.5" r="5.5"/><circle cx="14" cy="16" r="7"/><circle cx="25.5" cy="11" r="10"/><circle cx="35" cy="19.5" r="8"/><rect x="7" y="17" width="29" height="11"/></g></svg>
<div class="r" style="left:2969px;top:252px;width:18px;height:475px;background:repeating-linear-gradient(90deg,#3d3d3d 0 2px,#000 2px 4px);"></div>
<div class="r" style="left:2969px;top:252px;width:18px;height:2px;background:#3d3d3d;"></div>
<div class="r" style="left:2985px;top:252px;width:2px;height:475px;background:#3d3d3d;"></div>
<div class="r" style="left:2969px;top:725px;width:18px;height:2px;background:#3d3d3d;"></div>
<div class="r" style="left:2969px;top:1450px;width:18px;height:83px;background:repeating-linear-gradient(90deg,#3d3d3d 0 2px,#000 2px 4px);"></div>
<div class="r" style="left:2969px;top:1450px;width:18px;height:2px;background:#3d3d3d;"></div>
<div class="r" style="left:2985px;top:1450px;width:2px;height:83px;background:#3d3d3d;"></div>
<div class="r" style="left:2969px;top:1531px;width:18px;height:2px;background:#3d3d3d;"></div>
<div class="r" style="left:2390px;top:252px;width:576px;height:1281px;background:#323232;"></div>
<div class="r" style="left:2390px;top:252px;width:576px;height:58px;background:linear-gradient(#2e2e2e,#363636);"></div>
<div class="t" style="left:2774.00px;top:266.63px;font-size:30.43px;color:#b4b4b4;transform:scaleX(0.9539);text-shadow:1px 1px 1px rgba(0,0,0,0.8);">Histogram</div>
<svg style="left:2926px;top:271px" width="23" height="22" viewBox="0 0 23 22"><path d="M1.5 1.5 L21.5 1.5 L11.5 20.5 Z" fill="#b3b3b3" stroke="#000" stroke-width="2" stroke-linejoin="round"/></svg>
<div class="r" style="left:2400px;top:310px;width:556px;height:328px;background:linear-gradient(#555,#4f4f4f);border:2px solid #161616;"></div>
<div class="r" style="left:2416px;top:326px;width:524px;height:214px;background:#3e3e3e;border:2px solid #111;"></div>
<div class="r" style="left:2853px;top:328px;width:85px;height:175px;background:#2b2b2b;"></div>
<div class="r" style="left:2756px;top:328px;width:2px;height:175px;background:#555;"></div>
<div class="r" style="left:2820px;top:328px;width:2px;height:175px;background:#555;"></div>
<div class="r" style="left:2880px;top:328px;width:2px;height:175px;background:#555;"></div>
<svg style="left:2418px;top:328px" width="520" height="175" viewBox="0 0 520 175"><path d="M44.0,174.0 L55.0,165.0 L62.0,163.0 L74.0,162.0 L80.0,160.0 L87.0,158.0 L82.0,167.0 L62.0,170.0 Z" fill="#b04a3c" opacity="0.9"/><path d="M39.0,174.0 L55.0,169.0 L74.0,166.0 L83.0,167.5 L90.0,157.0 L102.0,147.0 L119.0,144.0 L135.0,142.0 L147.0,141.0 L158.0,150.0 L174.0,164.0 L186.0,169.0 L202.0,168.0 L214.0,160.0 L219.0,135.0 L223.0,131.0 L229.0,144.0 L235.0,141.0 L242.0,114.0 L247.0,121.0 L253.0,108.0 L257.0,82.0 L262.6,0.0 L281.5,0.0 L287.5,92.0 L291.0,142.0 L295.8,174.0 Z" fill="#cacaca"/><path d="M69.0,168.0 L82.0,158.0 L92.0,153.0 L98.0,150.0 L90.0,158.0 L77.0,166.0 Z" fill="#5a9058" opacity="0.9"/><path d="M92.0,156.0 L100.0,142.0 L110.0,141.0 L117.0,144.0 L104.0,148.0 Z" fill="#3a68c0" opacity="0.95"/><path d="M109.0,144.0 L124.0,134.0 L130.0,133.0 L137.0,136.0 L142.0,142.0 L147.0,149.0 L157.0,151.0 L148.0,140.0 L135.0,142.0 L119.0,144.0 Z" fill="#4e8a50" opacity="0.95"/><path d="M139.0,139.0 L147.0,137.0 L152.0,138.0 L159.0,150.0 L148.0,150.0 L142.0,142.0 Z" fill="#4a68b0" opacity="0.95"/><path d="M220.0,134.0 L223.0,129.0 L229.0,140.0 L233.0,144.0 L229.0,146.0 L224.0,137.0 Z" fill="#3a68c0" opacity="0.9"/><path d="M291.0,142.0 L294.0,152.0 L298.0,174.0 L295.0,174.0 Z" fill="#c05040" opacity="0.9"/><path d="M37.8,174.0 L53.8,169.0 L72.8,166.0 L81.8,167.5 L88.8,157.0 L100.8,147.0 L117.8,144.0 L133.8,142.0 L145.8,141.0 L156.8,150.0 L172.8,164.0 L184.8,169.0 L200.8,168.0 L212.8,160.0 L217.8,135.0 L221.8,131.0 L227.8,144.0 L233.8,141.0 L240.8,114.0 L245.8,121.0 L251.8,108.0 L255.8,82.0 L261.4,0.0 L280.3,0.0 L286.3,92.0 L289.8,142.0" fill="none" stroke="#5fc060" stroke-width="1.3"/><path d="M40.2,174.5 L56.2,169.5 L75.2,166.5 L84.2,168.0 L91.2,157.5 L103.2,147.5 L120.2,144.5 L136.2,142.5 L148.2,141.5 L159.2,150.5 L175.2,164.5 L187.2,169.5 L203.2,168.5 L215.2,160.5 L220.2,135.5 L224.2,131.5 L230.2,144.5 L236.2,141.5 L243.2,114.5 L248.2,121.5 L254.2,108.5 L258.2,82.5 L263.8,0.5 L282.7,0.5 L288.7,92.5 L292.2,142.5 L297.0,174.5" fill="none" stroke="#4a6ad0" stroke-width="1.2"/><path d="M41.5,174.8 L57.5,169.8 L76.5,166.8 L85.5,168.3 L92.5,157.8 L104.5,147.8 L121.5,144.8 L137.5,142.8 L149.5,141.8 L160.5,150.8 L176.5,164.8 L188.5,169.8 L204.5,168.8 L216.5,160.8 L221.5,135.8 L225.5,131.8 L231.5,144.8 L237.5,141.8 L244.5,114.8 L249.5,121.8 L255.5,108.8 L259.5,82.8 L265.1,0.8 L284.0,0.8 L290.0,92.8 L293.5,142.8 L298.3,174.8" fill="none" stroke="#c04a40" stroke-width="1" opacity="0.8"/></svg>
<div class="r" style="left:2681px;top:328px;width:3px;height:175px;background:#9c9c9c;"></div>
<div class="r" style="left:2418px;top:503px;width:520px;height:7px;background:#fff;"></div>
<div class="r" style="left:2681px;top:503px;width:3px;height:7px;background:#9c9c9c;"></div>
<div class="r" style="left:2756px;top:503px;width:2px;height:7px;background:#444;"></div>
<div class="r" style="left:2820px;top:503px;width:2px;height:7px;background:#444;"></div>
<div class="r" style="left:2853px;top:503px;width:85px;height:7px;background:#555;"></div>
<div class="r" style="left:2418px;top:510px;width:520px;height:29px;background:#3b3b3b;"></div>
<div class="t" style="left:2530.50px;top:512.97px;font-size:19.57px;color:#dcdcdc;transform:scaleX(0.8997);">SDR</div>
<div class="t" style="left:2792.50px;top:512.97px;font-size:19.57px;color:#dcdcdc;transform:scaleX(0.9231);">HDR</div>
<div class="r" style="left:2914px;top:514px;width:16px;height:16px;background:#d8d8d8;border-radius:50%;"></div>
<div class="t" style="left:2920.19px;top:515.95px;font-size:13.00px;color:#3b3b3b;font-weight:bold;">i</div>
<div class="r" style="left:2418px;top:328px;width:32px;height:28px;background:#000;border:2px solid #555;"></div>
<svg style="left:2423px;top:334px" width="22" height="17" viewBox="0 0 22 17"><path d="M11 1 L21 16 H1Z" fill="#4a4a4a"/></svg>
<div class="r" style="left:2906px;top:328px;width:32px;height:28px;background:#000;border:2px solid #555;"></div>
<svg style="left:2911px;top:334px" width="22" height="17" viewBox="0 0 22 17"><path d="M11 1 L21 16 H1Z" fill="#4a4a4a"/></svg>
<div class="t" style="left:2418.00px;top:551.06px;font-size:24.64px;color:#a8a8a8;transform:scaleX(0.7414);text-shadow:1px 1px 1px rgba(0,0,0,0.8);">ISO 100</div>
<div class="t" style="left:2581.00px;top:551.06px;font-size:24.64px;color:#a8a8a8;transform:scaleX(0.8372);text-shadow:1px 1px 1px rgba(0,0,0,0.8);">55 mm</div>
<div class="t" style="left:2719.00px;top:551.06px;font-size:24.64px;color:#a8a8a8;transform:scaleX(0.8584);text-shadow:1px 1px 1px rgba(0,0,0,0.8);">f / 36</div>
<div class="t" style="left:2877.00px;top:551.06px;font-size:24.64px;color:#a8a8a8;transform:scaleX(0.7559);text-shadow:1px 1px 1px rgba(0,0,0,0.8);">3.2 sec</div>
<div class="r" style="left:2402px;top:585px;width:552px;height:2px;background:#484848;"></div>
<div class="r" style="left:2414px;top:603px;width:26px;height:17px;border:2px solid #9a9a9a;"></div>
<div class="t" style="left:2447.00px;top:597.06px;font-size:24.64px;color:#b0b0b0;transform:scaleX(0.8910);text-shadow:1px 1px 1px rgba(0,0,0,0.8);">Original Photo</div>
<div class="r" style="left:2390px;top:638px;width:576px;height:99px;background:#2f2f2f;"></div>
<div class="r" style="left:2400px;top:650px;width:556px;height:77px;background:#3f3f3f;border:2px solid #121212;"></div>
<svg style="left:2448px;top:664px" width="42" height="44" viewBox="0 0 42 44"><path d="M6 10 H38 M6 22 H38 M6 34 H38" stroke="#111" stroke-width="7" stroke-linecap="round"/><path d="M6 10 H38 M6 22 H38 M6 34 H38" stroke="#fff" stroke-width="4" stroke-linecap="round"/><circle cx="12" cy="10" r="6.3" fill="#111"/><circle cx="12" cy="10" r="4.8" fill="#fff"/><circle cx="12" cy="10" r="2" fill="#222"/><circle cx="30" cy="22" r="6.3" fill="#111"/><circle cx="30" cy="22" r="4.8" fill="#fff"/><circle cx="30" cy="22" r="2" fill="#222"/><circle cx="20" cy="34" r="6.3" fill="#111"/><circle cx="20" cy="34" r="4.8" fill="#fff"/><circle cx="20" cy="34" r="2" fill="#222"/></svg>
<div class="r" style="left:2466px;top:718px;width:8px;height:8px;background:#a6a6a6;border-radius:50%;"></div>
<svg style="left:2539px;top:662px" width="36" height="46" viewBox="0 0 36 46"><g fill="none" stroke-linecap="butt"><path d="M11 8 V30 H32 M3 14 H25 V36" stroke="#151515" stroke-width="6"/><path d="M11 8 V30 H32 M3 14 H25 V36" stroke="#a6a6a6" stroke-width="3.5"/><path d="M20 5 A10 10 0 0 1 31 13" stroke="#151515" stroke-width="6"/><path d="M20 5 A10 10 0 0 1 31 13" stroke="#a6a6a6" stroke-width="3.5"/><path d="M4 33 A10 10 0 0 0 14 41" stroke="#151515" stroke-width="6"/><path d="M4 33 A10 10 0 0 0 14 41" stroke="#a6a6a6" stroke-width="3.5"/></g><path d="M22 1 L15 5 L22 10Z M12 37 L19 42 L12 45Z" fill="#a6a6a6" stroke="#151515" stroke-width="1"/></svg>
<svg style="left:2624px;top:668px" width="38" height="36" viewBox="0 0 38 36"><path d="M21 2 L35 14 L23 29 L9 17Z" fill="#a6a6a6" stroke="#151515" stroke-width="2"/><path d="M9 17 L2 25 L10 33 H36" fill="none" stroke="#151515" stroke-width="5" stroke-linejoin="round"/><path d="M9 17 L2 25 L10 33 H36" fill="none" stroke="#a6a6a6" stroke-width="2.5" stroke-linejoin="round"/><path d="M9 17 L23 29 L17 33" fill="none" stroke="#a6a6a6" stroke-width="2.5"/></svg>
<svg style="left:2707px;top:664px" width="40" height="42" viewBox="0 0 40 42"><path d="M7 3 V17 M0 10 H14" stroke="#151515" stroke-width="5"/><path d="M7 4 V16 M1 10 H13" stroke="#a6a6a6" stroke-width="2.5"/><path d="M4 26 C10 14 30 14 36 26 C30 38 10 38 4 26Z" fill="#a6a6a6" stroke="#151515" stroke-width="2.5"/><circle cx="20" cy="26" r="8" fill="#a6a6a6" stroke="#151515" stroke-width="3"/><circle cx="22" cy="24" r="3.5" fill="#151515"/></svg>
<svg style="left:2784px;top:664px" width="42" height="42" viewBox="0 0 42 42"><defs><pattern id="chk" width="4" height="4" patternUnits="userSpaceOnUse"><rect width="4" height="4" fill="#a6a6a6"/><rect width="2" height="2" fill="#222"/><rect x="2" y="2" width="2" height="2" fill="#222"/></pattern></defs><circle cx="21" cy="21" r="19" fill="#222"/><circle cx="21" cy="21" r="15" fill="url(#chk)"/><circle cx="21" cy="21" r="17" fill="none" stroke="#a6a6a6" stroke-width="3.5" stroke-dasharray="5 3"/></svg>
<svg style="left:2867px;top:666px" width="40" height="40" viewBox="0 0 40 40"><g fill="none" stroke-linecap="butt"><path d="M5 16 A14 14 0 0 1 22 6" stroke="#151515" stroke-width="7"/><path d="M5 16 A14 14 0 0 1 22 6" stroke="#a6a6a6" stroke-width="4.5"/><path d="M33 22 A14 14 0 0 1 12 32" stroke="#151515" stroke-width="7"/><path d="M33 22 A14 14 0 0 1 12 32" stroke="#a6a6a6" stroke-width="4.5"/></g><path d="M3 24 L3 36 L14 28Z" fill="#a6a6a6" stroke="#151515" stroke-width="1.5"/><path d="M30 1 L32 9 L39 11 L32 14 L30 21 L27 14 L21 11 L27 9Z" fill="#a6a6a6" stroke="#151515" stroke-width="1.5"/><path d="M19 18 L20.5 22 L24 22.5 L21 25 L22 29 L19 26.5 L16 29 L17 25 L14 22.5 L17.5 22Z" fill="#a6a6a6" stroke="#151515" stroke-width="1"/></svg>
<div class="r" style="left:2390px;top:727px;width:576px;height:11px;background:#3a3a3a;"></div>
<div class="r" style="left:2390px;top:738px;width:576px;height:2px;background:#555;"></div>
<div class="r" style="left:2390px;top:740px;width:576px;height:2px;background:#000;"></div>
<div class="r" style="left:2390px;top:742px;width:576px;height:18px;background:linear-gradient(#262626,#303030);"></div>
<div class="r" style="left:2390px;top:742px;width:576px;height:18px;overflow:hidden;"><div class="t" style="left:397.00px;top:-18.87px;font-size:30.43px;color:#a0a0a0;transform:scaleX(0.8880);text-shadow:1px 1px 1px rgba(0,0,0,0.8);">Lens Blur</div>
<svg style="left:537px;top:-14px" width="22" height="23" viewBox="0 0 22 23"><path d="M20.5 1.5 L20.5 21.5 L1.5 11.5 Z" fill="#b3b3b3" stroke="#000" stroke-width="2"/></svg><svg style="left:13px;top:-10px" width="26" height="18" viewBox="0 0 26 18"><path d="M1.5 9 C6 1 20 1 24.5 9 C20 17 6 17 1.5 9Z" fill="none" stroke="#555" stroke-width="2.2"/></svg></div>
<div class="r" style="left:2401px;top:760px;width:555px;height:9px;background:#3c3c3c;border:2px solid #000;"></div>
<div class="r" style="left:2390px;top:769px;width:576px;height:51px;background:linear-gradient(#303030,#353535);"></div>
<svg style="left:2403px;top:787px" width="26" height="18" viewBox="0 0 26 18"><path d="M1.5 9 C6 1 20 1 24.5 9 C20 17 6 17 1.5 9Z" fill="none" stroke="#696969" stroke-width="2.4"/><circle cx="13" cy="9" r="5.2" fill="#696969"/><circle cx="14" cy="7.5" r="2" fill="#2e2e2e"/></svg>
<div class="t" style="left:2821.00px;top:782.13px;font-size:30.43px;color:#b4b4b4;transform:scaleX(0.9106);text-shadow:1px 1px 1px rgba(0,0,0,0.8);">Effects</div>
<svg style="left:2926px;top:786px" width="22" height="23" viewBox="0 0 22 23"><path d="M20.5 1.5 L20.5 21.5 L1.5 11.5 Z" fill="#b3b3b3" stroke="#000" stroke-width="2" stroke-linejoin="round"/></svg>
<div class="r" style="left:2401px;top:820px;width:555px;height:9px;background:#3c3c3c;border:2px solid #000;"></div>
<div class="r" style="left:2390px;top:829px;width:576px;height:51px;background:linear-gradient(#303030,#353535);"></div>
<svg style="left:2403px;top:847px" width="26" height="18" viewBox="0 0 26 18"><path d="M1.5 9 C6 1 20 1 24.5 9 C20 17 6 17 1.5 9Z" fill="none" stroke="#696969" stroke-width="2.4"/><circle cx="13" cy="9" r="5.2" fill="#696969"/><circle cx="14" cy="7.5" r="2" fill="#2e2e2e"/></svg>
<div class="t" style="left:2766.00px;top:842.63px;font-size:30.43px;color:#b4b4b4;transform:scaleX(0.9570);text-shadow:1px 1px 1px rgba(0,0,0,0.8);">Calibration</div>
<svg style="left:2926px;top:847px" width="23" height="22" viewBox="0 0 23 22"><path d="M1.5 1.5 L21.5 1.5 L11.5 20.5 Z" fill="#b3b3b3" stroke="#000" stroke-width="2" stroke-linejoin="round"/></svg>
<div class="r" style="left:2401px;top:880px;width:555px;height:553px;background:#4c4c4c;border:2px solid #000;"></div>
<div class="r" style="left:2403px;top:882px;width:551px;height:61px;background:linear-gradient(#4a4a4a,#505050);border-bottom:2px solid #000;"></div>
<div class="t" style="left:2457.00px;top:900.91px;font-size:22.46px;color:#bdbdbd;transform:scaleX(0.8150);text-shadow:1px 1px 1px rgba(0,0,0,0.8);">Process :</div>
<div class="t" style="left:2671.00px;top:900.21px;font-size:26.81px;color:#e2e2e2;transform:scaleX(0.8142);text-shadow:1px 1px 1px rgba(0,0,0,0.8);">Version 6 (Current)</div>
<svg style="left:2870px;top:908px" width="10" height="17" viewBox="0 0 10 17"><path d="M5 0 L10 6 L0 6Z M0 10 L10 10 L5 16Z" fill="#8a8a8a"/></svg>
<div class="t" style="left:2554.00px;top:963.06px;font-size:24.64px;color:#2c2c2c;transform:scaleX(0.8593);text-shadow:0 1px 1px rgba(255,255,255,0.08);">Shadows</div>
<div class="t" style="left:2499.00px;top:1000.06px;font-size:24.64px;color:#2c2c2c;transform:scaleX(0.8474);text-shadow:0 1px 1px rgba(255,255,255,0.08);">Tint</div>
<div class="r" style="left:2564px;top:1005px;width:2px;height:6px;background:#262626;"></div>
<div class="r" style="left:2594px;top:1007px;width:2px;height:4px;background:#262626;"></div>
<div class="r" style="left:2624px;top:1007px;width:2px;height:4px;background:#262626;"></div>
<div class="r" style="left:2654px;top:1007px;width:2px;height:4px;background:#262626;"></div>
<div class="r" style="left:2684px;top:1007px;width:2px;height:4px;background:#262626;"></div>
<div class="r" style="left:2714px;top:1007px;width:2px;height:4px;background:#262626;"></div>
<div class="r" style="left:2744px;top:1007px;width:2px;height:4px;background:#262626;"></div>
<div class="r" style="left:2774px;top:1007px;width:2px;height:4px;background:#262626;"></div>
<div class="r" style="left:2804px;top:1005px;width:2px;height:6px;background:#262626;"></div>
<div class="r" style="left:2553px;top:1012px;width:264px;height:9px;background:#4c4c4c;border:2px solid #1a1a1a;border-radius:5px;box-shadow:0 1px 0 rgba(255,255,255,0.08);"></div>
<svg style="left:2674px;top:1002px" width="22" height="26" viewBox="0 0 22 26"><defs><linearGradient id="tg1016" x1="0" y1="0" x2="0" y2="1"><stop offset="0" stop-color="#3c3c3c"/><stop offset="1" stop-color="#2e2e2e"/></linearGradient></defs><path d="M11 2 L18.5 12 A8.3 8.3 0 1 1 3.5 12 Z" fill="url(#tg1016)" stroke="#111" stroke-width="2"/></svg>
<div class="t" style="left:2914.12px;top:1000.06px;font-size:24.64px;color:#3a3a3a;">0</div>
<div class="r" style="left:2403px;top:1034px;width:551px;height:2px;background:#424242;"></div>
<div class="t" style="left:2554.00px;top:1055.96px;font-size:24.64px;color:#d0d0d0;transform:scaleX(0.8767);text-shadow:2px 2px 2px rgba(0,0,0,0.7);">Red Primary</div>
<div class="t" style="left:2497.00px;top:1092.86px;font-size:24.64px;color:#d0d0d0;transform:scaleX(0.7978);text-shadow:2px 2px 2px rgba(0,0,0,0.7);">Hue</div>
<div class="r" style="left:2564px;top:1096px;width:2px;height:6px;background:#262626;"></div>
<div class="r" style="left:2594px;top:1098px;width:2px;height:4px;background:#262626;"></div>
<div class="r" style="left:2624px;top:1098px;width:2px;height:4px;background:#262626;"></div>
<div class="r" style="left:2654px;top:1098px;width:2px;height:4px;background:#262626;"></div>
<div class="r" style="left:2684px;top:1098px;width:2px;height:4px;background:#262626;"></div>
<div class="r" style="left:2714px;top:1098px;width:2px;height:4px;background:#262626;"></div>
<div class="r" style="left:2744px;top:1098px;width:2px;height:4px;background:#262626;"></div>
<div class="r" style="left:2774px;top:1098px;width:2px;height:4px;background:#262626;"></div>
<div class="r" style="left:2804px;top:1096px;width:2px;height:6px;background:#262626;"></div>
<div class="r" style="left:2553px;top:1103px;width:264px;height:9px;background:linear-gradient(90deg,#b0306e,#c8403a 50%,#c89038);border:2px solid #1a1a1a;border-radius:5px;box-shadow:0 1px 0 rgba(255,255,255,0.08);"></div>
<svg style="left:2674px;top:1093px" width="22" height="26" viewBox="0 0 22 26"><defs><linearGradient id="tg1107" x1="0" y1="0" x2="0" y2="1"><stop offset="0" stop-color="#d0d0d0"/><stop offset="1" stop-color="#7a7a7a"/></linearGradient></defs><path d="M11 2 L18.5 12 A8.3 8.3 0 1 1 3.5 12 Z" fill="url(#tg1107)" stroke="#111" stroke-width="2"/></svg>
<div class="t" style="left:2914.12px;top:1092.86px;font-size:24.64px;color:#d0d0d0;text-shadow:2px 2px 2px rgba(0,0,0,0.7);">0</div>
<div class="t" style="left:2442.00px;top:1131.56px;font-size:24.64px;color:#d0d0d0;transform:scaleX(0.8107);text-shadow:2px 2px 2px rgba(0,0,0,0.7);">Saturation</div>
<div class="r" style="left:2564px;top:1135px;width:2px;height:6px;background:#262626;"></div>
<div class="r" style="left:2594px;top:1137px;width:2px;height:4px;background:#262626;"></div>
<div class="r" style="left:2624px;top:1137px;width:2px;height:4px;background:#262626;"></div>
<div class="r" style="left:2654px;top:1137px;width:2px;height:4px;background:#262626;"></div>
<div class="r" style="left:2684px;top:1137px;width:2px;height:4px;background:#262626;"></div>
<div class="r" style="left:2714px;top:1137px;width:2px;height:4px;background:#262626;"></div>
<div class="r" style="left:2744px;top:1137px;width:2px;height:4px;background:#262626;"></div>
<div class="r" style="left:2774px;top:1137px;width:2px;height:4px;background:#262626;"></div>
<div class="r" style="left:2804px;top:1135px;width:2px;height:6px;background:#262626;"></div>
<div class="r" style="left:2553px;top:1142px;width:264px;height:9px;background:linear-gradient(90deg,#2e2e2e,#5a2e2e 50%,#c83a3a);border:2px solid #1a1a1a;border-radius:5px;box-shadow:0 1px 0 rgba(255,255,255,0.08);"></div>
<svg style="left:2674px;top:1132px" width="22" height="26" viewBox="0 0 22 26"><defs><linearGradient id="tg1146" x1="0" y1="0" x2="0" y2="1"><stop offset="0" stop-color="#d0d0d0"/><stop offset="1" stop-color="#7a7a7a"/></linearGradient></defs><path d="M11 2 L18.5 12 A8.3 8.3 0 1 1 3.5 12 Z" fill="url(#tg1146)" stroke="#111" stroke-width="2"/></svg>
<div class="t" style="left:2914.12px;top:1131.56px;font-size:24.64px;color:#d0d0d0;text-shadow:2px 2px 2px rgba(0,0,0,0.7);">0</div>
<div class="t" style="left:2554.00px;top:1186.86px;font-size:24.64px;color:#d0d0d0;transform:scaleX(0.8868);text-shadow:2px 2px 2px rgba(0,0,0,0.7);">Green Primary</div>
<div class="t" style="left:2497.00px;top:1222.56px;font-size:24.64px;color:#d0d0d0;transform:scaleX(0.7978);text-shadow:2px 2px 2px rgba(0,0,0,0.7);">Hue</div>
<div class="r" style="left:2564px;top:1226px;width:2px;height:6px;background:#262626;"></div>
<div class="r" style="left:2594px;top:1228px;width:2px;height:4px;background:#262626;"></div>
<div class="r" style="left:2624px;top:1228px;width:2px;height:4px;background:#262626;"></div>
<div class="r" style="left:2654px;top:1228px;width:2px;height:4px;background:#262626;"></div>
<div class="r" style="left:2684px;top:1228px;width:2px;height:4px;background:#262626;"></div>
<div class="r" style="left:2714px;top:1228px;width:2px;height:4px;background:#262626;"></div>
<div class="r" style="left:2744px;top:1228px;width:2px;height:4px;background:#262626;"></div>
<div class="r" style="left:2774px;top:1228px;width:2px;height:4px;background:#262626;"></div>
<div class="r" style="left:2804px;top:1226px;width:2px;height:6px;background:#262626;"></div>
<div class="r" style="left:2553px;top:1233px;width:264px;height:9px;background:linear-gradient(90deg,#a8b838,#58b048 50%,#40b8a0);border:2px solid #1a1a1a;border-radius:5px;box-shadow:0 1px 0 rgba(255,255,255,0.08);"></div>
<svg style="left:2674px;top:1223px" width="22" height="26" viewBox="0 0 22 26"><defs><linearGradient id="tg1237" x1="0" y1="0" x2="0" y2="1"><stop offset="0" stop-color="#d0d0d0"/><stop offset="1" stop-color="#7a7a7a"/></linearGradient></defs><path d="M11 2 L18.5 12 A8.3 8.3 0 1 1 3.5 12 Z" fill="url(#tg1237)" stroke="#111" stroke-width="2"/></svg>
<div class="t" style="left:2914.12px;top:1222.56px;font-size:24.64px;color:#d0d0d0;text-shadow:2px 2px 2px rgba(0,0,0,0.7);">0</div>
<div class="t" style="left:2442.00px;top:1261.06px;font-size:24.64px;color:#d0d0d0;transform:scaleX(0.8107);text-shadow:2px 2px 2px rgba(0,0,0,0.7);">Saturation</div>
<div class="r" style="left:2564px;top:1264.6px;width:2px;height:6px;background:#262626;"></div>
<div class="r" style="left:2594px;top:1266.6px;width:2px;height:4px;background:#262626;"></div>
<div class="r" style="left:2624px;top:1266.6px;width:2px;height:4px;background:#262626;"></div>
<div class="r" style="left:2654px;top:1266.6px;width:2px;height:4px;background:#262626;"></div>
<div class="r" style="left:2684px;top:1266.6px;width:2px;height:4px;background:#262626;"></div>
<div class="r" style="left:2714px;top:1266.6px;width:2px;height:4px;background:#262626;"></div>
<div class="r" style="left:2744px;top:1266.6px;width:2px;height:4px;background:#262626;"></div>
<div class="r" style="left:2774px;top:1266.6px;width:2px;height:4px;background:#262626;"></div>
<div class="r" style="left:2804px;top:1264.6px;width:2px;height:6px;background:#262626;"></div>
<div class="r" style="left:2553px;top:1271.6px;width:264px;height:9px;background:linear-gradient(90deg,#2e2e2e,#3a5a30 50%,#5cb040);border:2px solid #1a1a1a;border-radius:5px;box-shadow:0 1px 0 rgba(255,255,255,0.08);"></div>
<svg style="left:2674px;top:1261.6px" width="22" height="26" viewBox="0 0 22 26"><defs><linearGradient id="tg1275" x1="0" y1="0" x2="0" y2="1"><stop offset="0" stop-color="#d0d0d0"/><stop offset="1" stop-color="#7a7a7a"/></linearGradient></defs><path d="M11 2 L18.5 12 A8.3 8.3 0 1 1 3.5 12 Z" fill="url(#tg1275)" stroke="#111" stroke-width="2"/></svg>
<div class="t" style="left:2914.12px;top:1261.06px;font-size:24.64px;color:#d0d0d0;text-shadow:2px 2px 2px rgba(0,0,0,0.7);">0</div>
<div class="t" style="left:2554.00px;top:1316.76px;font-size:24.64px;color:#d0d0d0;transform:scaleX(0.8936);text-shadow:2px 2px 2px rgba(0,0,0,0.7);">Blue Primary</div>
<div class="t" style="left:2497.00px;top:1353.26px;font-size:24.64px;color:#d0d0d0;transform:scaleX(0.7978);text-shadow:2px 2px 2px rgba(0,0,0,0.7);">Hue</div>
<div class="r" style="left:2564px;top:1356.7px;width:2px;height:6px;background:#262626;"></div>
<div class="r" style="left:2594px;top:1358.7px;width:2px;height:4px;background:#262626;"></div>
<div class="r" style="left:2624px;top:1358.7px;width:2px;height:4px;background:#262626;"></div>
<div class="r" style="left:2654px;top:1358.7px;width:2px;height:4px;background:#262626;"></div>
<div class="r" style="left:2684px;top:1358.7px;width:2px;height:4px;background:#262626;"></div>
<div class="r" style="left:2714px;top:1358.7px;width:2px;height:4px;background:#262626;"></div>
<div class="r" style="left:2744px;top:1358.7px;width:2px;height:4px;background:#262626;"></div>
<div class="r" style="left:2774px;top:1358.7px;width:2px;height:4px;background:#262626;"></div>
<div class="r" style="left:2804px;top:1356.7px;width:2px;height:6px;background:#262626;"></div>
<div class="r" style="left:2553px;top:1363.7px;width:264px;height:9px;background:linear-gradient(90deg,#38b070,#3a8ab8 50%,#6038b8);border:2px solid #1a1a1a;border-radius:5px;box-shadow:0 1px 0 rgba(255,255,255,0.08);"></div>
<svg style="left:2674px;top:1353.7px" width="22" height="26" viewBox="0 0 22 26"><defs><linearGradient id="tg1367" x1="0" y1="0" x2="0" y2="1"><stop offset="0" stop-color="#d0d0d0"/><stop offset="1" stop-color="#7a7a7a"/></linearGradient></defs><path d="M11 2 L18.5 12 A8.3 8.3 0 1 1 3.5 12 Z" fill="url(#tg1367)" stroke="#111" stroke-width="2"/></svg>
<div class="t" style="left:2914.12px;top:1353.26px;font-size:24.64px;color:#d0d0d0;text-shadow:2px 2px 2px rgba(0,0,0,0.7);">0</div>
<div class="t" style="left:2442.00px;top:1391.06px;font-size:24.64px;color:#d0d0d0;transform:scaleX(0.8107);text-shadow:2px 2px 2px rgba(0,0,0,0.7);">Saturation</div>
<div class="r" style="left:2564px;top:1394.5px;width:2px;height:6px;background:#262626;"></div>
<div class="r" style="left:2594px;top:1396.5px;width:2px;height:4px;background:#262626;"></div>
<div class="r" style="left:2624px;top:1396.5px;width:2px;height:4px;background:#262626;"></div>
<div class="r" style="left:2654px;top:1396.5px;width:2px;height:4px;background:#262626;"></div>
<div class="r" style="left:2684px;top:1396.5px;width:2px;height:4px;background:#262626;"></div>
<div class="r" style="left:2714px;top:1396.5px;width:2px;height:4px;background:#262626;"></div>
<div class="r" style="left:2744px;top:1396.5px;width:2px;height:4px;background:#262626;"></div>
<div class="r" style="left:2774px;top:1396.5px;width:2px;height:4px;background:#262626;"></div>
<div class="r" style="left:2804px;top:1394.5px;width:2px;height:6px;background:#262626;"></div>
<div class="r" style="left:2553px;top:1401.5px;width:264px;height:9px;background:linear-gradient(90deg,#2e2e2e,#2e4058 50%,#3a78c0);border:2px solid #1a1a1a;border-radius:5px;box-shadow:0 1px 0 rgba(255,255,255,0.08);"></div>
<svg style="left:2674px;top:1391.5px" width="22" height="26" viewBox="0 0 22 26"><defs><linearGradient id="tg1405" x1="0" y1="0" x2="0" y2="1"><stop offset="0" stop-color="#d0d0d0"/><stop offset="1" stop-color="#7a7a7a"/></linearGradient></defs><path d="M11 2 L18.5 12 A8.3 8.3 0 1 1 3.5 12 Z" fill="url(#tg1405)" stroke="#111" stroke-width="2"/></svg>
<div class="t" style="left:2914.12px;top:1391.06px;font-size:24.64px;color:#d0d0d0;text-shadow:2px 2px 2px rgba(0,0,0,0.7);">0</div>
<div class="r" style="left:2403px;top:1165px;width:551px;height:2px;background:#424242;"></div>
<div class="r" style="left:2403px;top:1295px;width:551px;height:2px;background:#424242;"></div>
<div class="r" style="left:2971px;top:1326px;width:17px;height:117px;background:linear-gradient(90deg,#777,#a5a5a5 50%,#6a6a6a);border-radius:6px;"></div>
<div class="r" style="left:2390px;top:1433px;width:576px;height:100px;background:#2e2e2e;"></div>
<div class="r" style="left:2401px;top:1449px;width:555px;height:3px;background:#151515;"></div>
<div class="r" style="left:2401px;top:1467px;width:272px;height:52px;background:linear-gradient(#d8d8d8,#bdbdbd 50%,#a9a9a9);border:2px solid #1f1f1f;"></div>
<div class="r" style="left:2401px;top:1467px;width:42px;height:52px;background:linear-gradient(#c8c8c8,#a0a0a0);border:2px solid #1f1f1f;"></div>
<div class="r" style="left:2413px;top:1478px;width:17px;height:30px;background:linear-gradient(#f0f0f0 0 45%,#3a3a3a 45%);border:2px solid #1a1a1a;"></div>
<div class="t" style="left:2497.50px;top:1476.13px;font-size:30.43px;color:#ffffff;transform:scaleX(0.8736);text-shadow:1px 1px 2px rgba(0,0,0,0.6);">Auto Sync</div>
<div class="r" style="left:2683px;top:1467px;width:271px;height:52px;background:linear-gradient(#4a4a4a,#404040);border:2px solid #1f1f1f;"></div>
<div class="t" style="left:2785.00px;top:1476.13px;font-size:30.43px;color:#c4c4c4;transform:scaleX(0.8315);text-shadow:2px 2px 2px rgba(0,0,0,0.7);">Reset</div>
<svg style="left:3003px;top:881px" width="12" height="24" viewBox="0 0 12 24"><path d="M0 0 L12 12 L0 24Z" fill="#606060"/></svg>
<div class="r" style="left:30px;top:1556px;width:54px;height:34px;border:2px solid #b2b2b2;border-top-width:6px;"></div>
<div class="t" style="left:49.38px;top:1561.59px;font-size:27.54px;color:#b2b2b2;font-weight:bold;">1</div>
<div class="r" style="left:33px;top:1558px;width:2px;height:2px;background:#000;"></div>
<div class="r" style="left:41px;top:1558px;width:2px;height:2px;background:#000;"></div>
<div class="r" style="left:49px;top:1558px;width:2px;height:2px;background:#000;"></div>
<div class="r" style="left:104px;top:1556px;width:54px;height:34px;border:2px solid #5a5a5a;border-top-width:6px;"></div>
<div class="t" style="left:123.38px;top:1561.59px;font-size:27.54px;color:#5e5e5e;font-weight:bold;">2</div>
<div class="r" style="left:107px;top:1558px;width:2px;height:2px;background:#000;"></div>
<div class="r" style="left:115px;top:1558px;width:2px;height:2px;background:#000;"></div>
<div class="r" style="left:123px;top:1558px;width:2px;height:2px;background:#000;"></div>
<div class="r" style="left:179px;top:1556px;width:2px;height:35px;background:repeating-linear-gradient(#555 0 2px,transparent 2px 8px);"></div>
<div class="r" style="left:351px;top:1556px;width:2px;height:35px;background:repeating-linear-gradient(#555 0 2px,transparent 2px 8px);"></div>
<div class="r" style="left:200px;top:1558px;width:12px;height:12px;background:#575757;"></div>
<div class="r" style="left:218px;top:1558px;width:12px;height:12px;background:#575757;"></div>
<div class="r" style="left:200px;top:1576px;width:12px;height:12px;background:#575757;"></div>
<div class="r" style="left:218px;top:1576px;width:12px;height:12px;background:#575757;"></div>
<svg style="left:253px;top:1558px" width="25" height="30" viewBox="0 0 25 30"><path d="M0 15 L12 0 V9 H25 V21 H12 V30Z" fill="#575757"/></svg>
<svg style="left:302px;top:1558px" width="25" height="30" viewBox="0 0 25 30"><path d="M25 15 L13 0 V9 H0 V21 H13 V30Z" fill="#575757"/></svg>
<div class="t" style="left:373.00px;top:1562.03px;font-size:26.09px;color:#a2a2a2;transform:scaleX(0.9170);">Previous Import</div>
<div class="t" style="left:583.00px;top:1562.03px;font-size:26.09px;color:#a2a2a2;transform:scaleX(0.9199);">33 photos /33 selected /</div>
<div class="t" style="left:843.00px;top:1562.03px;font-size:26.09px;color:#ffffff;transform:scaleX(0.7634);">01 (1).JPG</div>
<svg style="left:951px;top:1577px" width="12" height="8" viewBox="0 0 12 8"><path d="M0 0 H12 L6 7Z" fill="#9a9a9a"/></svg>
<div class="t" style="left:2577.30px;top:1561.60px;font-size:23.77px;color:#a2a2a2;transform:scaleX(0.9545);">Filter :</div>
<div class="r" style="left:2662px;top:1558px;width:292px;height:32px;background:#333;border:2px solid #555;"></div>
<div class="r" style="left:2926px;top:1560px;width:26px;height:28px;background:#3c3c3c;"></div>
<svg style="left:2933px;top:1564px" width="12" height="20" viewBox="0 0 12 20"><path d="M6 0 L12 7 H0Z M0 12 H12 L6 19Z" fill="#8a8a8a"/></svg>
<div class="t" style="left:2685.00px;top:1562.39px;font-size:25.07px;color:#a8a8a8;transform:scaleX(0.9259);text-shadow:1px 1px 1px rgba(0,0,0,0.8);">Filters Off</div>
<div class="r" style="left:2972px;top:1557px;width:22px;height:31px;background:#2e2e2e;border:2px solid #555;"></div>
<div class="r" style="left:2975px;top:1574px;width:16px;height:10px;background:linear-gradient(#a0a0a0,#808080);"></div>
<div class="r" style="left:30px;top:1605px;width:2964px;height:182px;border:2px solid #474747;"></div>
<div class="r" style="left:36px;top:1610px;width:2952px;height:148px;background:#000;overflow:hidden;"></div>
<div class="r" style="left:36px;top:1610px;width:146px;height:147px;background:linear-gradient(#ececec,#e4e4e4);border:2px solid #f4f4f4;"></div>
<div class="r" style="left:182px;top:1610px;width:2px;height:147px;background:#8a8a8a;"></div>
<div class="t" style="left:51.00px;top:1610.87px;font-size:19.57px;color:#8a8a8a;font-weight:bold;">1</div>
<div class="r" style="left:44px;top:1638px;width:130px;height:90px;background:#f6f6f6;"></div>
<div class="r" style="left:48px;top:1642px;width:122px;height:82px;background:#000;"></div>
<div class="r" style="left:50px;top:1644px;width:118px;height:78px;background:linear-gradient(100deg,#cfcdd1,#dedce0 60%,#d5d3d7);overflow:hidden;"><div class="r" style="left:55.4px;top:35.7px;width:43.2px;height:33.3px;border-radius:50%;background:radial-gradient(closest-side,rgba(110,108,118,0.16),rgba(110,108,118,0));"></div><svg style="left:41.0px;top:17.9px" width="36.0" height="44.5"><defs><clipPath id="ec50"><rect x="0" y="0" width="36.0" height="44.5" rx="10.1" ry="8.0"/></clipPath></defs><g clip-path="url(#ec50)"><use href="#dice2" width="36.0" height="44.5"/></g></svg></div><div class="r" style="left:82px;top:1692px;width:30px;height:32px;background:#000;"></div>
<div class="r" style="left:84px;top:1694px;width:27px;height:28px;border:2px solid #8e8e8e;"></div>
<svg style="left:86px;top:1696px" width="22" height="24" viewBox="0 0 22 24"><path d="M6 7 L7.5 11 L11.5 12.5 L7.5 14 L6 18 L4.5 14 L0.5 12.5 L4.5 11Z M15 1 L16.2 4.3 L19.5 5.5 L16.2 6.7 L15 10 L13.8 6.7 L10.5 5.5 L13.8 4.3Z M15 13 L16.2 16.3 L19.5 17.5 L16.2 18.7 L15 22 L13.8 18.7 L10.5 17.5 L13.8 16.3Z" fill="#9a9a9a"/></svg><div class="r" style="left:112px;top:1692px;width:29px;height:32px;background:#000;"></div>
<div class="r" style="left:114px;top:1694px;width:26px;height:28px;border:2px solid #8e8e8e;"></div>
<svg style="left:116px;top:1697px" width="21" height="22" viewBox="0 0 21 22"><circle cx="10.5" cy="11" r="4.5" fill="none" stroke="#9a9a9a" stroke-width="1.8"/><path d="M10.5 1V4 M10.5 18V21 M1 11H4 M17 11H20 M3.8 4.3L5.8 6.3 M15.2 15.7L17.2 17.7 M3.8 17.7L5.8 15.7 M15.2 6.3L17.2 4.3" stroke="#9a9a9a" stroke-width="1.8"/></svg><div class="r" style="left:140px;top:1692px;width:30px;height:32px;background:#000;"></div>
<div class="r" style="left:142px;top:1694px;width:26px;height:28px;border:2px solid #8e8e8e;"></div>
<svg style="left:143px;top:1695px" width="24" height="26" viewBox="0 0 24 26"><path d="M23 2 V25 H1Z" fill="#9a9a9a"/><path d="M6 3 V12 M1.5 7.5 H10.5" stroke="#9a9a9a" stroke-width="2"/><path d="M13 19.5 H20" stroke="#000" stroke-width="2"/></svg><div class="r" style="left:184px;top:1610px;width:146px;height:147px;background:linear-gradient(#cbcbcb,#c6c6c6);border:2px solid #dadada;"></div>
<div class="r" style="left:330px;top:1610px;width:2px;height:147px;background:#8a8a8a;"></div>
<div class="t" style="left:199.00px;top:1610.87px;font-size:19.57px;color:#8a8a8a;font-weight:bold;">2</div>
<div class="r" style="left:192px;top:1638px;width:130px;height:90px;background:#ececec;"></div>
<div class="r" style="left:196px;top:1642px;width:122px;height:82px;background:#000;"></div>
<div class="r" style="left:198px;top:1644px;width:118px;height:78px;background:linear-gradient(100deg,#e9e7ea,#f1eff2 60%,#e7e5e8);overflow:hidden;"><div class="r" style="left:53.5px;top:35.6px;width:52.4px;height:33.9px;border-radius:50%;background:radial-gradient(closest-side,rgba(110,108,118,0.16),rgba(110,108,118,0));"></div><svg style="left:36.0px;top:17.6px" width="43.7" height="45.2"><defs><clipPath id="ec198"><rect x="0" y="0" width="43.7" height="45.2" rx="19.2" ry="19.0"/></clipPath></defs><g clip-path="url(#ec198)"><use href="#dice2" width="43.7" height="45.2"/></g></svg></div><div class="r" style="left:258px;top:1692px;width:30px;height:32px;background:#000;"></div>
<div class="r" style="left:260px;top:1694px;width:27px;height:28px;border:2px solid #8e8e8e;"></div>
<svg style="left:262px;top:1696px" width="22" height="24" viewBox="0 0 22 24"><path d="M6 7 L7.5 11 L11.5 12.5 L7.5 14 L6 18 L4.5 14 L0.5 12.5 L4.5 11Z M15 1 L16.2 4.3 L19.5 5.5 L16.2 6.7 L15 10 L13.8 6.7 L10.5 5.5 L13.8 4.3Z M15 13 L16.2 16.3 L19.5 17.5 L16.2 18.7 L15 22 L13.8 18.7 L10.5 17.5 L13.8 16.3Z" fill="#9a9a9a"/></svg><div class="r" style="left:288px;top:1692px;width:30px;height:32px;background:#000;"></div>
<div class="r" style="left:290px;top:1694px;width:26px;height:28px;border:2px solid #8e8e8e;"></div>
<svg style="left:291px;top:1695px" width="24" height="26" viewBox="0 0 24 26"><path d="M23 2 V25 H1Z" fill="#9a9a9a"/><path d="M6 3 V12 M1.5 7.5 H10.5" stroke="#9a9a9a" stroke-width="2"/><path d="M13 19.5 H20" stroke="#000" stroke-width="2"/></svg><div class="r" style="left:332px;top:1610px;width:146px;height:147px;background:linear-gradient(#cbcbcb,#c6c6c6);border:2px solid #dadada;"></div>
<div class="r" style="left:478px;top:1610px;width:2px;height:147px;background:#8a8a8a;"></div>
<div class="t" style="left:347.00px;top:1610.87px;font-size:19.57px;color:#8a8a8a;font-weight:bold;">3</div>
<div class="r" style="left:340px;top:1638px;width:130px;height:90px;background:#ececec;"></div>
<div class="r" style="left:344px;top:1642px;width:122px;height:82px;background:#000;"></div>
<div class="r" style="left:346px;top:1644px;width:118px;height:78px;background:linear-gradient(100deg,#e9e7ea,#f1eff2 60%,#e7e5e8);overflow:hidden;"><div class="r" style="left:53.5px;top:35.6px;width:52.4px;height:33.9px;border-radius:50%;background:radial-gradient(closest-side,rgba(110,108,118,0.16),rgba(110,108,118,0));"></div><svg style="left:36.0px;top:17.6px" width="43.7" height="45.2"><defs><clipPath id="ec346"><rect x="0" y="0" width="43.7" height="45.2" rx="19.2" ry="19.0"/></clipPath></defs><g clip-path="url(#ec346)"><use href="#dice2" width="43.7" height="45.2"/></g></svg></div><div class="r" style="left:406px;top:1692px;width:30px;height:32px;background:#000;"></div>
<div class="r" style="left:408px;top:1694px;width:27px;height:28px;border:2px solid #8e8e8e;"></div>
<svg style="left:410px;top:1696px" width="22" height="24" viewBox="0 0 22 24"><path d="M6 7 L7.5 11 L11.5 12.5 L7.5 14 L6 18 L4.5 14 L0.5 12.5 L4.5 11Z M15 1 L16.2 4.3 L19.5 5.5 L16.2 6.7 L15 10 L13.8 6.7 L10.5 5.5 L13.8 4.3Z M15 13 L16.2 16.3 L19.5 17.5 L16.2 18.7 L15 22 L13.8 18.7 L10.5 17.5 L13.8 16.3Z" fill="#9a9a9a"/></svg><div class="r" style="left:436px;top:1692px;width:30px;height:32px;background:#000;"></div>
<div class="r" style="left:438px;top:1694px;width:26px;height:28px;border:2px solid #8e8e8e;"></div>
<svg style="left:439px;top:1695px" width="24" height="26" viewBox="0 0 24 26"><path d="M23 2 V25 H1Z" fill="#9a9a9a"/><path d="M6 3 V12 M1.5 7.5 H10.5" stroke="#9a9a9a" stroke-width="2"/><path d="M13 19.5 H20" stroke="#000" stroke-width="2"/></svg><div class="r" style="left:480px;top:1610px;width:146px;height:147px;background:linear-gradient(#cbcbcb,#c6c6c6);border:2px solid #dadada;"></div>
<div class="r" style="left:626px;top:1610px;width:2px;height:147px;background:#8a8a8a;"></div>
<div class="t" style="left:495.00px;top:1610.87px;font-size:19.57px;color:#8a8a8a;font-weight:bold;">4</div>
<div class="r" style="left:488px;top:1638px;width:130px;height:90px;background:#ececec;"></div>
<div class="r" style="left:492px;top:1642px;width:122px;height:82px;background:#000;"></div>
<div class="r" style="left:494px;top:1644px;width:118px;height:78px;background:linear-gradient(100deg,#e9e7ea,#f1eff2 60%,#e7e5e8);overflow:hidden;"><div class="r" style="left:53.5px;top:35.6px;width:52.4px;height:33.9px;border-radius:50%;background:radial-gradient(closest-side,rgba(110,108,118,0.16),rgba(110,108,118,0));"></div><svg style="left:36.0px;top:17.6px" width="43.7" height="45.2"><defs><clipPath id="ec494"><rect x="0" y="0" width="43.7" height="45.2" rx="19.2" ry="19.0"/></clipPath></defs><g clip-path="url(#ec494)"><use href="#dice2" width="43.7" height="45.2"/></g></svg></div><div class="r" style="left:554px;top:1692px;width:30px;height:32px;background:#000;"></div>
<div class="r" style="left:556px;top:1694px;width:27px;height:28px;border:2px solid #8e8e8e;"></div>
<svg style="left:558px;top:1696px" width="22" height="24" viewBox="0 0 22 24"><path d="M6 7 L7.5 11 L11.5 12.5 L7.5 14 L6 18 L4.5 14 L0.5 12.5 L4.5 11Z M15 1 L16.2 4.3 L19.5 5.5 L16.2 6.7 L15 10 L13.8 6.7 L10.5 5.5 L13.8 4.3Z M15 13 L16.2 16.3 L19.5 17.5 L16.2 18.7 L15 22 L13.8 18.7 L10.5 17.5 L13.8 16.3Z" fill="#9a9a9a"/></svg><div class="r" style="left:584px;top:1692px;width:30px;height:32px;background:#000;"></div>
<div class="r" style="left:586px;top:1694px;width:26px;height:28px;border:2px solid #8e8e8e;"></div>
<svg style="left:587px;top:1695px" width="24" height="26" viewBox="0 0 24 26"><path d="M23 2 V25 H1Z" fill="#9a9a9a"/><path d="M6 3 V12 M1.5 7.5 H10.5" stroke="#9a9a9a" stroke-width="2"/><path d="M13 19.5 H20" stroke="#000" stroke-width="2"/></svg><div class="r" style="left:628px;top:1610px;width:146px;height:147px;background:linear-gradient(#cbcbcb,#c6c6c6);border:2px solid #dadada;"></div>
<div class="r" style="left:774px;top:1610px;width:2px;height:147px;background:#8a8a8a;"></div>
<div class="t" style="left:643.00px;top:1610.87px;font-size:19.57px;color:#8a8a8a;font-weight:bold;">5</div>
<div class="r" style="left:636px;top:1638px;width:130px;height:90px;background:#ececec;"></div>
<div class="r" style="left:640px;top:1642px;width:122px;height:82px;background:#000;"></div>
<div class="r" style="left:642px;top:1644px;width:118px;height:78px;background:linear-gradient(100deg,#e9e7ea,#f1eff2 60%,#e7e5e8);overflow:hidden;"><div class="r" style="left:54.2px;top:35.7px;width:43.2px;height:33.3px;border-radius:50%;background:radial-gradient(closest-side,rgba(110,108,118,0.16),rgba(110,108,118,0));"></div><svg style="left:39.8px;top:17.9px" width="36.0" height="44.5"><defs><clipPath id="ec642"><rect x="0" y="0" width="36.0" height="44.5" rx="10.1" ry="8.0"/></clipPath></defs><g clip-path="url(#ec642)"><use href="#dice2" width="36.0" height="44.5"/></g></svg></div><div class="r" style="left:702px;top:1692px;width:30px;height:32px;background:#000;"></div>
<div class="r" style="left:704px;top:1694px;width:27px;height:28px;border:2px solid #8e8e8e;"></div>
<svg style="left:706px;top:1696px" width="22" height="24" viewBox="0 0 22 24"><path d="M6 7 L7.5 11 L11.5 12.5 L7.5 14 L6 18 L4.5 14 L0.5 12.5 L4.5 11Z M15 1 L16.2 4.3 L19.5 5.5 L16.2 6.7 L15 10 L13.8 6.7 L10.5 5.5 L13.8 4.3Z M15 13 L16.2 16.3 L19.5 17.5 L16.2 18.7 L15 22 L13.8 18.7 L10.5 17.5 L13.8 16.3Z" fill="#9a9a9a"/></svg><div class="r" style="left:732px;top:1692px;width:30px;height:32px;background:#000;"></div>
<div class="r" style="left:734px;top:1694px;width:26px;height:28px;border:2px solid #8e8e8e;"></div>
<svg style="left:735px;top:1695px" width="24" height="26" viewBox="0 0 24 26"><path d="M23 2 V25 H1Z" fill="#9a9a9a"/><path d="M6 3 V12 M1.5 7.5 H10.5" stroke="#9a9a9a" stroke-width="2"/><path d="M13 19.5 H20" stroke="#000" stroke-width="2"/></svg><div class="r" style="left:776px;top:1610px;width:146px;height:147px;background:linear-gradient(#cbcbcb,#c6c6c6);border:2px solid #dadada;"></div>
<div class="r" style="left:922px;top:1610px;width:2px;height:147px;background:#8a8a8a;"></div>
<div class="t" style="left:791.00px;top:1610.87px;font-size:19.57px;color:#8a8a8a;font-weight:bold;">6</div>
<div class="r" style="left:784px;top:1638px;width:130px;height:90px;background:#ececec;"></div>
<div class="r" style="left:788px;top:1642px;width:122px;height:82px;background:#000;"></div>
<div class="r" style="left:790px;top:1644px;width:118px;height:78px;background:linear-gradient(100deg,#e9e7ea,#f1eff2 60%,#e7e5e8);overflow:hidden;"><div class="r" style="left:53.5px;top:35.6px;width:52.4px;height:33.9px;border-radius:50%;background:radial-gradient(closest-side,rgba(110,108,118,0.16),rgba(110,108,118,0));"></div><svg style="left:36.0px;top:17.6px" width="43.7" height="45.2"><defs><clipPath id="ec790"><rect x="0" y="0" width="43.7" height="45.2" rx="19.2" ry="19.0"/></clipPath></defs><g clip-path="url(#ec790)"><use href="#dice2" width="43.7" height="45.2"/></g></svg></div><div class="r" style="left:850px;top:1692px;width:30px;height:32px;background:#000;"></div>
<div class="r" style="left:852px;top:1694px;width:27px;height:28px;border:2px solid #8e8e8e;"></div>
<svg style="left:854px;top:1696px" width="22" height="24" viewBox="0 0 22 24"><path d="M6 7 L7.5 11 L11.5 12.5 L7.5 14 L6 18 L4.5 14 L0.5 12.5 L4.5 11Z M15 1 L16.2 4.3 L19.5 5.5 L16.2 6.7 L15 10 L13.8 6.7 L10.5 5.5 L13.8 4.3Z M15 13 L16.2 16.3 L19.5 17.5 L16.2 18.7 L15 22 L13.8 18.7 L10.5 17.5 L13.8 16.3Z" fill="#9a9a9a"/></svg><div class="r" style="left:880px;top:1692px;width:30px;height:32px;background:#000;"></div>
<div class="r" style="left:882px;top:1694px;width:26px;height:28px;border:2px solid #8e8e8e;"></div>
<svg style="left:883px;top:1695px" width="24" height="26" viewBox="0 0 24 26"><path d="M23 2 V25 H1Z" fill="#9a9a9a"/><path d="M6 3 V12 M1.5 7.5 H10.5" stroke="#9a9a9a" stroke-width="2"/><path d="M13 19.5 H20" stroke="#000" stroke-width="2"/></svg><div class="r" style="left:924px;top:1610px;width:146px;height:147px;background:linear-gradient(#cbcbcb,#c6c6c6);border:2px solid #dadada;"></div>
<div class="r" style="left:1070px;top:1610px;width:2px;height:147px;background:#8a8a8a;"></div>
<div class="t" style="left:939.00px;top:1610.87px;font-size:19.57px;color:#8a8a8a;font-weight:bold;">7</div>
<div class="r" style="left:932px;top:1638px;width:130px;height:90px;background:#ececec;"></div>
<div class="r" style="left:936px;top:1642px;width:122px;height:82px;background:#000;"></div>
<div class="r" style="left:938px;top:1644px;width:118px;height:78px;background:linear-gradient(100deg,#e9e7ea,#f1eff2 60%,#e7e5e8);overflow:hidden;"><div class="r" style="left:53.5px;top:35.6px;width:52.4px;height:33.9px;border-radius:50%;background:radial-gradient(closest-side,rgba(110,108,118,0.16),rgba(110,108,118,0));"></div><svg style="left:36.0px;top:17.6px" width="43.7" height="45.2"><defs><clipPath id="ec938"><rect x="0" y="0" width="43.7" height="45.2" rx="19.2" ry="19.0"/></clipPath></defs><g clip-path="url(#ec938)"><use href="#dice2" width="43.7" height="45.2"/></g></svg></div><div class="r" style="left:998px;top:1692px;width:30px;height:32px;background:#000;"></div>
<div class="r" style="left:1000px;top:1694px;width:27px;height:28px;border:2px solid #8e8e8e;"></div>
<svg style="left:1002px;top:1696px" width="22" height="24" viewBox="0 0 22 24"><path d="M6 7 L7.5 11 L11.5 12.5 L7.5 14 L6 18 L4.5 14 L0.5 12.5 L4.5 11Z M15 1 L16.2 4.3 L19.5 5.5 L16.2 6.7 L15 10 L13.8 6.7 L10.5 5.5 L13.8 4.3Z M15 13 L16.2 16.3 L19.5 17.5 L16.2 18.7 L15 22 L13.8 18.7 L10.5 17.5 L13.8 16.3Z" fill="#9a9a9a"/></svg><div class="r" style="left:1028px;top:1692px;width:30px;height:32px;background:#000;"></div>
<div class="r" style="left:1030px;top:1694px;width:26px;height:28px;border:2px solid #8e8e8e;"></div>
<svg style="left:1031px;top:1695px" width="24" height="26" viewBox="0 0 24 26"><path d="M23 2 V25 H1Z" fill="#9a9a9a"/><path d="M6 3 V12 M1.5 7.5 H10.5" stroke="#9a9a9a" stroke-width="2"/><path d="M13 19.5 H20" stroke="#000" stroke-width="2"/></svg><div class="r" style="left:1072px;top:1610px;width:146px;height:147px;background:linear-gradient(#cbcbcb,#c6c6c6);border:2px solid #dadada;"></div>
<div class="r" style="left:1218px;top:1610px;width:2px;height:147px;background:#8a8a8a;"></div>
<div class="t" style="left:1087.00px;top:1610.87px;font-size:19.57px;color:#8a8a8a;font-weight:bold;">8</div>
<div class="r" style="left:1080px;top:1638px;width:130px;height:90px;background:#ececec;"></div>
<div class="r" style="left:1084px;top:1642px;width:122px;height:82px;background:#000;"></div>
<div class="r" style="left:1086px;top:1644px;width:118px;height:78px;background:linear-gradient(100deg,#e9e7ea,#f1eff2 60%,#e7e5e8);overflow:hidden;"><div class="r" style="left:53.5px;top:35.6px;width:52.4px;height:33.9px;border-radius:50%;background:radial-gradient(closest-side,rgba(110,108,118,0.16),rgba(110,108,118,0));"></div><svg style="left:36.0px;top:17.6px" width="43.7" height="45.2"><defs><clipPath id="ec1086"><rect x="0" y="0" width="43.7" height="45.2" rx="19.2" ry="19.0"/></clipPath></defs><g clip-path="url(#ec1086)"><use href="#dice2" width="43.7" height="45.2"/></g></svg></div><div class="r" style="left:1146px;top:1692px;width:30px;height:32px;background:#000;"></div>
<div class="r" style="left:1148px;top:1694px;width:27px;height:28px;border:2px solid #8e8e8e;"></div>
<svg style="left:1150px;top:1696px" width="22" height="24" viewBox="0 0 22 24"><path d="M6 7 L7.5 11 L11.5 12.5 L7.5 14 L6 18 L4.5 14 L0.5 12.5 L4.5 11Z M15 1 L16.2 4.3 L19.5 5.5 L16.2 6.7 L15 10 L13.8 6.7 L10.5 5.5 L13.8 4.3Z M15 13 L16.2 16.3 L19.5 17.5 L16.2 18.7 L15 22 L13.8 18.7 L10.5 17.5 L13.8 16.3Z" fill="#9a9a9a"/></svg><div class="r" style="left:1176px;top:1692px;width:30px;height:32px;background:#000;"></div>
<div class="r" style="left:1178px;top:1694px;width:26px;height:28px;border:2px solid #8e8e8e;"></div>
<svg style="left:1179px;top:1695px" width="24" height="26" viewBox="0 0 24 26"><path d="M23 2 V25 H1Z" fill="#9a9a9a"/><path d="M6 3 V12 M1.5 7.5 H10.5" stroke="#9a9a9a" stroke-width="2"/><path d="M13 19.5 H20" stroke="#000" stroke-width="2"/></svg><div class="r" style="left:1220px;top:1610px;width:146px;height:147px;background:linear-gradient(#cbcbcb,#c6c6c6);border:2px solid #dadada;"></div>
<div class="r" style="left:1366px;top:1610px;width:2px;height:147px;background:#8a8a8a;"></div>
<div class="t" style="left:1235.00px;top:1610.87px;font-size:19.57px;color:#8a8a8a;font-weight:bold;">9</div>
<div class="r" style="left:1228px;top:1638px;width:130px;height:90px;background:#ececec;"></div>
<div class="r" style="left:1232px;top:1642px;width:122px;height:82px;background:#000;"></div>
<div class="r" style="left:1234px;top:1644px;width:118px;height:78px;background:linear-gradient(100deg,#e9e7ea,#f1eff2 60%,#e7e5e8);overflow:hidden;"><div class="r" style="left:54.2px;top:35.7px;width:43.2px;height:33.3px;border-radius:50%;background:radial-gradient(closest-side,rgba(110,108,118,0.16),rgba(110,108,118,0));"></div><svg style="left:39.8px;top:17.9px" width="36.0" height="44.5"><defs><clipPath id="ec1234"><rect x="0" y="0" width="36.0" height="44.5" rx="10.1" ry="8.0"/></clipPath></defs><g clip-path="url(#ec1234)"><use href="#dice2" width="36.0" height="44.5"/></g></svg></div><div class="r" style="left:1294px;top:1692px;width:30px;height:32px;background:#000;"></div>
<div class="r" style="left:1296px;top:1694px;width:27px;height:28px;border:2px solid #8e8e8e;"></div>
<svg style="left:1298px;top:1696px" width="22" height="24" viewBox="0 0 22 24"><path d="M6 7 L7.5 11 L11.5 12.5 L7.5 14 L6 18 L4.5 14 L0.5 12.5 L4.5 11Z M15 1 L16.2 4.3 L19.5 5.5 L16.2 6.7 L15 10 L13.8 6.7 L10.5 5.5 L13.8 4.3Z M15 13 L16.2 16.3 L19.5 17.5 L16.2 18.7 L15 22 L13.8 18.7 L10.5 17.5 L13.8 16.3Z" fill="#9a9a9a"/></svg><div class="r" style="left:1324px;top:1692px;width:30px;height:32px;background:#000;"></div>
<div class="r" style="left:1326px;top:1694px;width:26px;height:28px;border:2px solid #8e8e8e;"></div>
<svg style="left:1327px;top:1695px" width="24" height="26" viewBox="0 0 24 26"><path d="M23 2 V25 H1Z" fill="#9a9a9a"/><path d="M6 3 V12 M1.5 7.5 H10.5" stroke="#9a9a9a" stroke-width="2"/><path d="M13 19.5 H20" stroke="#000" stroke-width="2"/></svg><div class="r" style="left:1368px;top:1610px;width:146px;height:147px;background:linear-gradient(#cbcbcb,#c6c6c6);border:2px solid #dadada;"></div>
<div class="r" style="left:1514px;top:1610px;width:2px;height:147px;background:#8a8a8a;"></div>
<div class="t" style="left:1383.00px;top:1610.87px;font-size:19.57px;color:#8a8a8a;font-weight:bold;">10</div>
<div class="r" style="left:1376px;top:1638px;width:130px;height:90px;background:#ececec;"></div>
<div class="r" style="left:1380px;top:1642px;width:122px;height:82px;background:#000;"></div>
<div class="r" style="left:1382px;top:1644px;width:118px;height:78px;background:linear-gradient(100deg,#e9e7ea,#f1eff2 60%,#e7e5e8);overflow:hidden;"><div class="r" style="left:53.5px;top:35.6px;width:52.4px;height:33.9px;border-radius:50%;background:radial-gradient(closest-side,rgba(110,108,118,0.16),rgba(110,108,118,0));"></div><svg style="left:36.0px;top:17.6px" width="43.7" height="45.2"><defs><clipPath id="ec1382"><rect x="0" y="0" width="43.7" height="45.2" rx="19.2" ry="19.0"/></clipPath></defs><g clip-path="url(#ec1382)"><use href="#dice2" width="43.7" height="45.2"/></g></svg></div><div class="r" style="left:1442px;top:1692px;width:30px;height:32px;background:#000;"></div>
<div class="r" style="left:1444px;top:1694px;width:27px;height:28px;border:2px solid #8e8e8e;"></div>
<svg style="left:1446px;top:1696px" width="22" height="24" viewBox="0 0 22 24"><path d="M6 7 L7.5 11 L11.5 12.5 L7.5 14 L6 18 L4.5 14 L0.5 12.5 L4.5 11Z M15 1 L16.2 4.3 L19.5 5.5 L16.2 6.7 L15 10 L13.8 6.7 L10.5 5.5 L13.8 4.3Z M15 13 L16.2 16.3 L19.5 17.5 L16.2 18.7 L15 22 L13.8 18.7 L10.5 17.5 L13.8 16.3Z" fill="#9a9a9a"/></svg><div class="r" style="left:1472px;top:1692px;width:30px;height:32px;background:#000;"></div>
<div class="r" style="left:1474px;top:1694px;width:26px;height:28px;border:2px solid #8e8e8e;"></div>
<svg style="left:1475px;top:1695px" width="24" height="26" viewBox="0 0 24 26"><path d="M23 2 V25 H1Z" fill="#9a9a9a"/><path d="M6 3 V12 M1.5 7.5 H10.5" stroke="#9a9a9a" stroke-width="2"/><path d="M13 19.5 H20" stroke="#000" stroke-width="2"/></svg><div class="r" style="left:1516px;top:1610px;width:146px;height:147px;background:linear-gradient(#cbcbcb,#c6c6c6);border:2px solid #dadada;"></div>
<div class="r" style="left:1662px;top:1610px;width:2px;height:147px;background:#8a8a8a;"></div>
<div class="t" style="left:1531.00px;top:1610.87px;font-size:19.57px;color:#8a8a8a;font-weight:bold;">11</div>
<div class="r" style="left:1524px;top:1638px;width:130px;height:90px;background:#ececec;"></div>
<div class="r" style="left:1528px;top:1642px;width:122px;height:82px;background:#000;"></div>
<div class="r" style="left:1530px;top:1644px;width:118px;height:78px;background:linear-gradient(100deg,#e9e7ea,#f1eff2 60%,#e7e5e8);overflow:hidden;"><div class="r" style="left:53.5px;top:35.6px;width:52.4px;height:33.9px;border-radius:50%;background:radial-gradient(closest-side,rgba(110,108,118,0.16),rgba(110,108,118,0));"></div><svg style="left:36.0px;top:17.6px" width="43.7" height="45.2"><defs><clipPath id="ec1530"><rect x="0" y="0" width="43.7" height="45.2" rx="19.2" ry="19.0"/></clipPath></defs><g clip-path="url(#ec1530)"><use href="#dice2" width="43.7" height="45.2"/></g></svg></div><div class="r" style="left:1590px;top:1692px;width:30px;height:32px;background:#000;"></div>
<div class="r" style="left:1592px;top:1694px;width:27px;height:28px;border:2px solid #8e8e8e;"></div>
<svg style="left:1594px;top:1696px" width="22" height="24" viewBox="0 0 22 24"><path d="M6 7 L7.5 11 L11.5 12.5 L7.5 14 L6 18 L4.5 14 L0.5 12.5 L4.5 11Z M15 1 L16.2 4.3 L19.5 5.5 L16.2 6.7 L15 10 L13.8 6.7 L10.5 5.5 L13.8 4.3Z M15 13 L16.2 16.3 L19.5 17.5 L16.2 18.7 L15 22 L13.8 18.7 L10.5 17.5 L13.8 16.3Z" fill="#9a9a9a"/></svg><div class="r" style="left:1620px;top:1692px;width:30px;height:32px;background:#000;"></div>
<div class="r" style="left:1622px;top:1694px;width:26px;height:28px;border:2px solid #8e8e8e;"></div>
<svg style="left:1623px;top:1695px" width="24" height="26" viewBox="0 0 24 26"><path d="M23 2 V25 H1Z" fill="#9a9a9a"/><path d="M6 3 V12 M1.5 7.5 H10.5" stroke="#9a9a9a" stroke-width="2"/><path d="M13 19.5 H20" stroke="#000" stroke-width="2"/></svg><div class="r" style="left:1664px;top:1610px;width:146px;height:147px;background:linear-gradient(#cbcbcb,#c6c6c6);border:2px solid #dadada;"></div>
<div class="r" style="left:1810px;top:1610px;width:2px;height:147px;background:#8a8a8a;"></div>
<div class="t" style="left:1679.00px;top:1610.87px;font-size:19.57px;color:#8a8a8a;font-weight:bold;">12</div>
<div class="r" style="left:1672px;top:1638px;width:130px;height:90px;background:#ececec;"></div>
<div class="r" style="left:1676px;top:1642px;width:122px;height:82px;background:#000;"></div>
<div class="r" style="left:1678px;top:1644px;width:118px;height:78px;background:linear-gradient(100deg,#e9e7ea,#f1eff2 60%,#e7e5e8);overflow:hidden;"><div class="r" style="left:53.5px;top:35.6px;width:52.4px;height:33.9px;border-radius:50%;background:radial-gradient(closest-side,rgba(110,108,118,0.16),rgba(110,108,118,0));"></div><svg style="left:36.0px;top:17.6px" width="43.7" height="45.2"><defs><clipPath id="ec1678"><rect x="0" y="0" width="43.7" height="45.2" rx="19.2" ry="19.0"/></clipPath></defs><g clip-path="url(#ec1678)"><use href="#dice2" width="43.7" height="45.2"/></g></svg></div><div class="r" style="left:1738px;top:1692px;width:30px;height:32px;background:#000;"></div>
<div class="r" style="left:1740px;top:1694px;width:27px;height:28px;border:2px solid #8e8e8e;"></div>
<svg style="left:1742px;top:1696px" width="22" height="24" viewBox="0 0 22 24"><path d="M6 7 L7.5 11 L11.5 12.5 L7.5 14 L6 18 L4.5 14 L0.5 12.5 L4.5 11Z M15 1 L16.2 4.3 L19.5 5.5 L16.2 6.7 L15 10 L13.8 6.7 L10.5 5.5 L13.8 4.3Z M15 13 L16.2 16.3 L19.5 17.5 L16.2 18.7 L15 22 L13.8 18.7 L10.5 17.5 L13.8 16.3Z" fill="#9a9a9a"/></svg><div class="r" style="left:1768px;top:1692px;width:30px;height:32px;background:#000;"></div>
<div class="r" style="left:1770px;top:1694px;width:26px;height:28px;border:2px solid #8e8e8e;"></div>
<svg style="left:1771px;top:1695px" width="24" height="26" viewBox="0 0 24 26"><path d="M23 2 V25 H1Z" fill="#9a9a9a"/><path d="M6 3 V12 M1.5 7.5 H10.5" stroke="#9a9a9a" stroke-width="2"/><path d="M13 19.5 H20" stroke="#000" stroke-width="2"/></svg><div class="r" style="left:1812px;top:1610px;width:146px;height:147px;background:linear-gradient(#cbcbcb,#c6c6c6);border:2px solid #dadada;"></div>
<div class="r" style="left:1958px;top:1610px;width:2px;height:147px;background:#8a8a8a;"></div>
<div class="t" style="left:1827.00px;top:1610.87px;font-size:19.57px;color:#8a8a8a;font-weight:bold;">13</div>
<div class="r" style="left:1820px;top:1638px;width:130px;height:90px;background:#ececec;"></div>
<div class="r" style="left:1824px;top:1642px;width:122px;height:82px;background:#000;"></div>
<div class="r" style="left:1826px;top:1644px;width:118px;height:78px;background:linear-gradient(100deg,#e9e7ea,#f1eff2 60%,#e7e5e8);overflow:hidden;"><div class="r" style="left:54.2px;top:35.7px;width:43.2px;height:33.3px;border-radius:50%;background:radial-gradient(closest-side,rgba(110,108,118,0.16),rgba(110,108,118,0));"></div><svg style="left:39.8px;top:17.9px" width="36.0" height="44.5"><defs><clipPath id="ec1826"><rect x="0" y="0" width="36.0" height="44.5" rx="10.1" ry="8.0"/></clipPath></defs><g clip-path="url(#ec1826)"><use href="#dice2" width="36.0" height="44.5"/></g></svg></div><div class="r" style="left:1886px;top:1692px;width:30px;height:32px;background:#000;"></div>
<div class="r" style="left:1888px;top:1694px;width:27px;height:28px;border:2px solid #8e8e8e;"></div>
<svg style="left:1890px;top:1696px" width="22" height="24" viewBox="0 0 22 24"><path d="M6 7 L7.5 11 L11.5 12.5 L7.5 14 L6 18 L4.5 14 L0.5 12.5 L4.5 11Z M15 1 L16.2 4.3 L19.5 5.5 L16.2 6.7 L15 10 L13.8 6.7 L10.5 5.5 L13.8 4.3Z M15 13 L16.2 16.3 L19.5 17.5 L16.2 18.7 L15 22 L13.8 18.7 L10.5 17.5 L13.8 16.3Z" fill="#9a9a9a"/></svg><div class="r" style="left:1916px;top:1692px;width:30px;height:32px;background:#000;"></div>
<div class="r" style="left:1918px;top:1694px;width:26px;height:28px;border:2px solid #8e8e8e;"></div>
<svg style="left:1919px;top:1695px" width="24" height="26" viewBox="0 0 24 26"><path d="M23 2 V25 H1Z" fill="#9a9a9a"/><path d="M6 3 V12 M1.5 7.5 H10.5" stroke="#9a9a9a" stroke-width="2"/><path d="M13 19.5 H20" stroke="#000" stroke-width="2"/></svg><div class="r" style="left:1960px;top:1610px;width:146px;height:147px;background:linear-gradient(#cbcbcb,#c6c6c6);border:2px solid #dadada;"></div>
<div class="r" style="left:2106px;top:1610px;width:2px;height:147px;background:#8a8a8a;"></div>
<div class="t" style="left:1975.00px;top:1610.87px;font-size:19.57px;color:#8a8a8a;font-weight:bold;">14</div>
<div class="r" style="left:1968px;top:1638px;width:130px;height:90px;background:#ececec;"></div>
<div class="r" style="left:1972px;top:1642px;width:122px;height:82px;background:#000;"></div>
<div class="r" style="left:1974px;top:1644px;width:118px;height:78px;background:linear-gradient(100deg,#e9e7ea,#f1eff2 60%,#e7e5e8);overflow:hidden;"><div class="r" style="left:53.5px;top:35.6px;width:52.4px;height:33.9px;border-radius:50%;background:radial-gradient(closest-side,rgba(110,108,118,0.16),rgba(110,108,118,0));"></div><svg style="left:36.0px;top:17.6px" width="43.7" height="45.2"><defs><clipPath id="ec1974"><rect x="0" y="0" width="43.7" height="45.2" rx="19.2" ry="19.0"/></clipPath></defs><g clip-path="url(#ec1974)"><use href="#dice2" width="43.7" height="45.2"/></g></svg></div><div class="r" style="left:2034px;top:1692px;width:30px;height:32px;background:#000;"></div>
<div class="r" style="left:2036px;top:1694px;width:27px;height:28px;border:2px solid #8e8e8e;"></div>
<svg style="left:2038px;top:1696px" width="22" height="24" viewBox="0 0 22 24"><path d="M6 7 L7.5 11 L11.5 12.5 L7.5 14 L6 18 L4.5 14 L0.5 12.5 L4.5 11Z M15 1 L16.2 4.3 L19.5 5.5 L16.2 6.7 L15 10 L13.8 6.7 L10.5 5.5 L13.8 4.3Z M15 13 L16.2 16.3 L19.5 17.5 L16.2 18.7 L15 22 L13.8 18.7 L10.5 17.5 L13.8 16.3Z" fill="#9a9a9a"/></svg><div class="r" style="left:2064px;top:1692px;width:30px;height:32px;background:#000;"></div>
<div class="r" style="left:2066px;top:1694px;width:26px;height:28px;border:2px solid #8e8e8e;"></div>
<svg style="left:2067px;top:1695px" width="24" height="26" viewBox="0 0 24 26"><path d="M23 2 V25 H1Z" fill="#9a9a9a"/><path d="M6 3 V12 M1.5 7.5 H10.5" stroke="#9a9a9a" stroke-width="2"/><path d="M13 19.5 H20" stroke="#000" stroke-width="2"/></svg><div class="r" style="left:2108px;top:1610px;width:146px;height:147px;background:linear-gradient(#cbcbcb,#c6c6c6);border:2px solid #dadada;"></div>
<div class="r" style="left:2254px;top:1610px;width:2px;height:147px;background:#8a8a8a;"></div>
<div class="t" style="left:2123.00px;top:1610.87px;font-size:19.57px;color:#8a8a8a;font-weight:bold;">15</div>
<div class="r" style="left:2116px;top:1638px;width:130px;height:90px;background:#ececec;"></div>
<div class="r" style="left:2120px;top:1642px;width:122px;height:82px;background:#000;"></div>
<div class="r" style="left:2122px;top:1644px;width:118px;height:78px;background:linear-gradient(100deg,#e9e7ea,#f1eff2 60%,#e7e5e8);overflow:hidden;"><div class="r" style="left:53.5px;top:35.6px;width:52.4px;height:33.9px;border-radius:50%;background:radial-gradient(closest-side,rgba(110,108,118,0.16),rgba(110,108,118,0));"></div><svg style="left:36.0px;top:17.6px" width="43.7" height="45.2"><defs><clipPath id="ec2122"><rect x="0" y="0" width="43.7" height="45.2" rx="19.2" ry="19.0"/></clipPath></defs><g clip-path="url(#ec2122)"><use href="#dice2" width="43.7" height="45.2"/></g></svg></div><div class="r" style="left:2182px;top:1692px;width:30px;height:32px;background:#000;"></div>
<div class="r" style="left:2184px;top:1694px;width:27px;height:28px;border:2px solid #8e8e8e;"></div>
<svg style="left:2186px;top:1696px" width="22" height="24" viewBox="0 0 22 24"><path d="M6 7 L7.5 11 L11.5 12.5 L7.5 14 L6 18 L4.5 14 L0.5 12.5 L4.5 11Z M15 1 L16.2 4.3 L19.5 5.5 L16.2 6.7 L15 10 L13.8 6.7 L10.5 5.5 L13.8 4.3Z M15 13 L16.2 16.3 L19.5 17.5 L16.2 18.7 L15 22 L13.8 18.7 L10.5 17.5 L13.8 16.3Z" fill="#9a9a9a"/></svg><div class="r" style="left:2212px;top:1692px;width:30px;height:32px;background:#000;"></div>
<div class="r" style="left:2214px;top:1694px;width:26px;height:28px;border:2px solid #8e8e8e;"></div>
<svg style="left:2215px;top:1695px" width="24" height="26" viewBox="0 0 24 26"><path d="M23 2 V25 H1Z" fill="#9a9a9a"/><path d="M6 3 V12 M1.5 7.5 H10.5" stroke="#9a9a9a" stroke-width="2"/><path d="M13 19.5 H20" stroke="#000" stroke-width="2"/></svg><div class="r" style="left:2256px;top:1610px;width:146px;height:147px;background:linear-gradient(#cbcbcb,#c6c6c6);border:2px solid #dadada;"></div>
<div class="r" style="left:2402px;top:1610px;width:2px;height:147px;background:#8a8a8a;"></div>
<div class="t" style="left:2271.00px;top:1610.87px;font-size:19.57px;color:#8a8a8a;font-weight:bold;">16</div>
<div class="r" style="left:2264px;top:1638px;width:130px;height:90px;background:#ececec;"></div>
<div class="r" style="left:2268px;top:1642px;width:122px;height:82px;background:#000;"></div>
<div class="r" style="left:2270px;top:1644px;width:118px;height:78px;background:linear-gradient(100deg,#e9e7ea,#f1eff2 60%,#e7e5e8);overflow:hidden;"><div class="r" style="left:53.5px;top:35.6px;width:52.4px;height:33.9px;border-radius:50%;background:radial-gradient(closest-side,rgba(110,108,118,0.16),rgba(110,108,118,0));"></div><svg style="left:36.0px;top:17.6px" width="43.7" height="45.2"><defs><clipPath id="ec2270"><rect x="0" y="0" width="43.7" height="45.2" rx="19.2" ry="19.0"/></clipPath></defs><g clip-path="url(#ec2270)"><use href="#dice2" width="43.7" height="45.2"/></g></svg></div><div class="r" style="left:2330px;top:1692px;width:30px;height:32px;background:#000;"></div>
<div class="r" style="left:2332px;top:1694px;width:27px;height:28px;border:2px solid #8e8e8e;"></div>
<svg style="left:2334px;top:1696px" width="22" height="24" viewBox="0 0 22 24"><path d="M6 7 L7.5 11 L11.5 12.5 L7.5 14 L6 18 L4.5 14 L0.5 12.5 L4.5 11Z M15 1 L16.2 4.3 L19.5 5.5 L16.2 6.7 L15 10 L13.8 6.7 L10.5 5.5 L13.8 4.3Z M15 13 L16.2 16.3 L19.5 17.5 L16.2 18.7 L15 22 L13.8 18.7 L10.5 17.5 L13.8 16.3Z" fill="#9a9a9a"/></svg><div class="r" style="left:2360px;top:1692px;width:30px;height:32px;background:#000;"></div>
<div class="r" style="left:2362px;top:1694px;width:26px;height:28px;border:2px solid #8e8e8e;"></div>
<svg style="left:2363px;top:1695px" width="24" height="26" viewBox="0 0 24 26"><path d="M23 2 V25 H1Z" fill="#9a9a9a"/><path d="M6 3 V12 M1.5 7.5 H10.5" stroke="#9a9a9a" stroke-width="2"/><path d="M13 19.5 H20" stroke="#000" stroke-width="2"/></svg><div class="r" style="left:2404px;top:1610px;width:146px;height:147px;background:linear-gradient(#cbcbcb,#c6c6c6);border:2px solid #dadada;"></div>
<div class="r" style="left:2550px;top:1610px;width:2px;height:147px;background:#8a8a8a;"></div>
<div class="t" style="left:2419.00px;top:1610.87px;font-size:19.57px;color:#8a8a8a;font-weight:bold;">17</div>
<div class="r" style="left:2412px;top:1638px;width:130px;height:90px;background:#ececec;"></div>
<div class="r" style="left:2416px;top:1642px;width:122px;height:82px;background:#000;"></div>
<div class="r" style="left:2418px;top:1644px;width:118px;height:78px;background:linear-gradient(100deg,#e9e7ea,#f1eff2 60%,#e7e5e8);overflow:hidden;"><div class="r" style="left:54.2px;top:35.7px;width:43.2px;height:33.3px;border-radius:50%;background:radial-gradient(closest-side,rgba(110,108,118,0.16),rgba(110,108,118,0));"></div><svg style="left:39.8px;top:17.9px" width="36.0" height="44.5"><defs><clipPath id="ec2418"><rect x="0" y="0" width="36.0" height="44.5" rx="10.1" ry="8.0"/></clipPath></defs><g clip-path="url(#ec2418)"><use href="#dice2" width="36.0" height="44.5"/></g></svg></div><div class="r" style="left:2478px;top:1692px;width:30px;height:32px;background:#000;"></div>
<div class="r" style="left:2480px;top:1694px;width:27px;height:28px;border:2px solid #8e8e8e;"></div>
<svg style="left:2482px;top:1696px" width="22" height="24" viewBox="0 0 22 24"><path d="M6 7 L7.5 11 L11.5 12.5 L7.5 14 L6 18 L4.5 14 L0.5 12.5 L4.5 11Z M15 1 L16.2 4.3 L19.5 5.5 L16.2 6.7 L15 10 L13.8 6.7 L10.5 5.5 L13.8 4.3Z M15 13 L16.2 16.3 L19.5 17.5 L16.2 18.7 L15 22 L13.8 18.7 L10.5 17.5 L13.8 16.3Z" fill="#9a9a9a"/></svg><div class="r" style="left:2508px;top:1692px;width:30px;height:32px;background:#000;"></div>
<div class="r" style="left:2510px;top:1694px;width:26px;height:28px;border:2px solid #8e8e8e;"></div>
<svg style="left:2511px;top:1695px" width="24" height="26" viewBox="0 0 24 26"><path d="M23 2 V25 H1Z" fill="#9a9a9a"/><path d="M6 3 V12 M1.5 7.5 H10.5" stroke="#9a9a9a" stroke-width="2"/><path d="M13 19.5 H20" stroke="#000" stroke-width="2"/></svg><div class="r" style="left:2552px;top:1610px;width:146px;height:147px;background:linear-gradient(#cbcbcb,#c6c6c6);border:2px solid #dadada;"></div>
<div class="r" style="left:2698px;top:1610px;width:2px;height:147px;background:#8a8a8a;"></div>
<div class="t" style="left:2567.00px;top:1610.87px;font-size:19.57px;color:#8a8a8a;font-weight:bold;">18</div>
<div class="r" style="left:2560px;top:1638px;width:130px;height:90px;background:#ececec;"></div>
<div class="r" style="left:2564px;top:1642px;width:122px;height:82px;background:#000;"></div>
<div class="r" style="left:2566px;top:1644px;width:118px;height:78px;background:linear-gradient(100deg,#e9e7ea,#f1eff2 60%,#e7e5e8);overflow:hidden;"><div class="r" style="left:53.5px;top:35.6px;width:52.4px;height:33.9px;border-radius:50%;background:radial-gradient(closest-side,rgba(110,108,118,0.16),rgba(110,108,118,0));"></div><svg style="left:36.0px;top:17.6px" width="43.7" height="45.2"><defs><clipPath id="ec2566"><rect x="0" y="0" width="43.7" height="45.2" rx="19.2" ry="19.0"/></clipPath></defs><g clip-path="url(#ec2566)"><use href="#dice2" width="43.7" height="45.2"/></g></svg></div><div class="r" style="left:2626px;top:1692px;width:30px;height:32px;background:#000;"></div>
<div class="r" style="left:2628px;top:1694px;width:27px;height:28px;border:2px solid #8e8e8e;"></div>
<svg style="left:2630px;top:1696px" width="22" height="24" viewBox="0 0 22 24"><path d="M6 7 L7.5 11 L11.5 12.5 L7.5 14 L6 18 L4.5 14 L0.5 12.5 L4.5 11Z M15 1 L16.2 4.3 L19.5 5.5 L16.2 6.7 L15 10 L13.8 6.7 L10.5 5.5 L13.8 4.3Z M15 13 L16.2 16.3 L19.5 17.5 L16.2 18.7 L15 22 L13.8 18.7 L10.5 17.5 L13.8 16.3Z" fill="#9a9a9a"/></svg><div class="r" style="left:2656px;top:1692px;width:30px;height:32px;background:#000;"></div>
<div class="r" style="left:2658px;top:1694px;width:26px;height:28px;border:2px solid #8e8e8e;"></div>
<svg style="left:2659px;top:1695px" width="24" height="26" viewBox="0 0 24 26"><path d="M23 2 V25 H1Z" fill="#9a9a9a"/><path d="M6 3 V12 M1.5 7.5 H10.5" stroke="#9a9a9a" stroke-width="2"/><path d="M13 19.5 H20" stroke="#000" stroke-width="2"/></svg><div class="r" style="left:2700px;top:1610px;width:146px;height:147px;background:linear-gradient(#cbcbcb,#c6c6c6);border:2px solid #dadada;"></div>
<div class="r" style="left:2846px;top:1610px;width:2px;height:147px;background:#8a8a8a;"></div>
<div class="t" style="left:2715.00px;top:1610.87px;font-size:19.57px;color:#8a8a8a;font-weight:bold;">19</div>
<div class="r" style="left:2708px;top:1638px;width:130px;height:90px;background:#ececec;"></div>
<div class="r" style="left:2712px;top:1642px;width:122px;height:82px;background:#000;"></div>
<div class="r" style="left:2714px;top:1644px;width:118px;height:78px;background:linear-gradient(100deg,#e9e7ea,#f1eff2 60%,#e7e5e8);overflow:hidden;"><div class="r" style="left:53.5px;top:35.6px;width:52.4px;height:33.9px;border-radius:50%;background:radial-gradient(closest-side,rgba(110,108,118,0.16),rgba(110,108,118,0));"></div><svg style="left:36.0px;top:17.6px" width="43.7" height="45.2"><defs><clipPath id="ec2714"><rect x="0" y="0" width="43.7" height="45.2" rx="19.2" ry="19.0"/></clipPath></defs><g clip-path="url(#ec2714)"><use href="#dice2" width="43.7" height="45.2"/></g></svg></div><div class="r" style="left:2774px;top:1692px;width:30px;height:32px;background:#000;"></div>
<div class="r" style="left:2776px;top:1694px;width:27px;height:28px;border:2px solid #8e8e8e;"></div>
<svg style="left:2778px;top:1696px" width="22" height="24" viewBox="0 0 22 24"><path d="M6 7 L7.5 11 L11.5 12.5 L7.5 14 L6 18 L4.5 14 L0.5 12.5 L4.5 11Z M15 1 L16.2 4.3 L19.5 5.5 L16.2 6.7 L15 10 L13.8 6.7 L10.5 5.5 L13.8 4.3Z M15 13 L16.2 16.3 L19.5 17.5 L16.2 18.7 L15 22 L13.8 18.7 L10.5 17.5 L13.8 16.3Z" fill="#9a9a9a"/></svg><div class="r" style="left:2804px;top:1692px;width:30px;height:32px;background:#000;"></div>
<div class="r" style="left:2806px;top:1694px;width:26px;height:28px;border:2px solid #8e8e8e;"></div>
<svg style="left:2807px;top:1695px" width="24" height="26" viewBox="0 0 24 26"><path d="M23 2 V25 H1Z" fill="#9a9a9a"/><path d="M6 3 V12 M1.5 7.5 H10.5" stroke="#9a9a9a" stroke-width="2"/><path d="M13 19.5 H20" stroke="#000" stroke-width="2"/></svg><div class="r" style="left:2848px;top:1610px;width:140px;height:147px;background:linear-gradient(#cbcbcb,#c6c6c6);border:2px solid #dadada;"></div>
<div class="t" style="left:2863.00px;top:1610.87px;font-size:19.57px;color:#8a8a8a;font-weight:bold;">20</div>
<div class="r" style="left:2856px;top:1638px;width:130px;height:90px;background:#ececec;"></div>
<div class="r" style="left:2860px;top:1642px;width:122px;height:82px;background:#000;"></div>
<div class="r" style="left:2862px;top:1644px;width:118px;height:78px;background:linear-gradient(100deg,#e9e7ea,#f1eff2 60%,#e7e5e8);overflow:hidden;"><div class="r" style="left:53.5px;top:35.6px;width:52.4px;height:33.9px;border-radius:50%;background:radial-gradient(closest-side,rgba(110,108,118,0.16),rgba(110,108,118,0));"></div><svg style="left:36.0px;top:17.6px" width="43.7" height="45.2"><defs><clipPath id="ec2862"><rect x="0" y="0" width="43.7" height="45.2" rx="19.2" ry="19.0"/></clipPath></defs><g clip-path="url(#ec2862)"><use href="#dice2" width="43.7" height="45.2"/></g></svg></div><div class="r" style="left:2922px;top:1692px;width:30px;height:32px;background:#000;"></div>
<div class="r" style="left:2924px;top:1694px;width:27px;height:28px;border:2px solid #8e8e8e;"></div>
<svg style="left:2926px;top:1696px" width="22" height="24" viewBox="0 0 22 24"><path d="M6 7 L7.5 11 L11.5 12.5 L7.5 14 L6 18 L4.5 14 L0.5 12.5 L4.5 11Z M15 1 L16.2 4.3 L19.5 5.5 L16.2 6.7 L15 10 L13.8 6.7 L10.5 5.5 L13.8 4.3Z M15 13 L16.2 16.3 L19.5 17.5 L16.2 18.7 L15 22 L13.8 18.7 L10.5 17.5 L13.8 16.3Z" fill="#9a9a9a"/></svg><div class="r" style="left:2952px;top:1692px;width:30px;height:32px;background:#000;"></div>
<div class="r" style="left:2954px;top:1694px;width:26px;height:28px;border:2px solid #8e8e8e;"></div>
<svg style="left:2955px;top:1695px" width="24" height="26" viewBox="0 0 24 26"><path d="M23 2 V25 H1Z" fill="#9a9a9a"/><path d="M6 3 V12 M1.5 7.5 H10.5" stroke="#9a9a9a" stroke-width="2"/><path d="M13 19.5 H20" stroke="#000" stroke-width="2"/></svg><div class="r" style="left:36px;top:1758px;width:2952px;height:27px;background:#000;"></div>
<div class="r" style="left:39px;top:1760px;width:1779px;height:20px;background:linear-gradient(#7a7a7a,#9e9e9e 25%,#a2a2a2 60%,#7c7c7c);border-radius:4px 0 0 4px;"></div>
<svg style="left:1501px;top:1795px" width="24" height="12" viewBox="0 0 24 12"><path d="M0 0 H24 L12 12Z" fill="#6a6a6a"/></svg>
<svg style="left:3003px;top:1687px" width="10" height="20" viewBox="0 0 10 20"><path d="M0 0 L10 10 L0 20Z" fill="#8e8e8e"/></svg>
<div class="r" style="left:646px;top:141px;width:1700px;height:1185px;background:#ececec;border-radius:17px;box-shadow:0 0 0 1px rgba(0,0,0,0.25),0 10px 30px rgba(0,0,0,0.25);overflow:hidden;"></div>
<div class="r" style="left:646px;top:141px;width:1700px;height:57px;background:#f3f1f6;border-radius:17px 17px 0 0;"></div>
<div class="r" style="left:646px;top:197px;width:1700px;height:2px;background:#cfcfd0;"></div>
<div class="r" style="left:661.7px;top:157.6px;width:24px;height:24px;background:#ed6a5f;border-radius:50%;box-shadow:inset 0 0 0 1px #d5564c;"></div>
<div class="r" style="left:701.5px;top:157.6px;width:24px;height:24px;background:#d6d4d9;border-radius:50%;box-shadow:inset 0 0 0 1px #bdbbc0;"></div>
<div class="r" style="left:742px;top:157.6px;width:24px;height:24px;background:#61c554;border-radius:50%;box-shadow:inset 0 0 0 1px #4eac42;"></div>
<div class="t" style="left:1399.00px;top:153.35px;font-size:29.71px;color:#4a4a4a;font-weight:bold;transform:scaleX(0.9087);">Export 33 Files</div>
<div class="t" style="left:964.00px;top:242.59px;font-size:27.54px;color:#262626;transform:scaleX(0.9777);">Export To:</div>
<div class="r" style="left:1106px;top:237px;width:199px;height:39px;background:#fff;border-radius:9px;box-shadow:0 0 0 1px rgba(0,0,0,0.07),0 1.5px 2.5px rgba(0,0,0,0.22);"></div>
<div class="t" style="left:1123.00px;top:241.26px;font-size:26.52px;color:#262626;transform:scaleX(0.9951);">Hard Drive</div>
<div class="r" style="left:1270px;top:239.5px;width:32px;height:33px;background:linear-gradient(#4b8ef8,#2f78f4);border-radius:8px;"></div>
<svg style="left:1270px;top:239.5px" width="32" height="33" viewBox="0 0 32 33"><path d="M10 12.5 L16 6.5 L22 12.5 M10 20.5 L16 26.5 L22 20.5" fill="none" stroke="#fff" stroke-width="2.6" stroke-linecap="round" stroke-linejoin="round"/></svg>
<div class="t" style="left:688.00px;top:297.06px;font-size:24.64px;color:#a3a3a3;transform:scaleX(0.9231);">Preset:</div>
<div class="t" style="left:1107.00px;top:297.06px;font-size:24.64px;color:#a3a3a3;transform:scaleX(0.9498);">Export 33 Files</div>
<div class="r" style="left:687px;top:335px;width:398px;height:720px;background:#fff;box-shadow:0 0 0 1px #e0e0e0;"></div>
<svg style="left:709px;top:354px" width="12" height="16" viewBox="0 0 12 16"><path d="M2 1.5 L9 8 L2 14.5" fill="none" stroke="#6e6e6e" stroke-width="2.2"/></svg>
<div class="t" style="left:735.00px;top:343.67px;font-size:23.91px;color:#262626;transform:scaleX(0.9806);">Lightroom Presets</div>
<svg style="left:709px;top:406.7px" width="12" height="16" viewBox="0 0 12 16"><path d="M2 1.5 L9 8 L2 14.5" fill="none" stroke="#6e6e6e" stroke-width="2.2"/></svg>
<div class="t" style="left:735.00px;top:396.37px;font-size:23.91px;color:#262626;transform:scaleX(0.9638);">User Presets</div>
<div class="r" style="left:686px;top:1054px;width:201px;height:40px;background:linear-gradient(#fbfbfb,#f3f3f3);border:2px solid #a9a9a9;"></div>
<div class="r" style="left:885px;top:1054px;width:200px;height:40px;background:#efefef;border:2px solid #c9c9c9;border-left:none;"></div>
<div class="t" style="left:767.00px;top:1062.59px;font-size:23.19px;color:#262626;transform:scaleX(0.9629);">Add</div>
<div class="t" style="left:945.30px;top:1062.59px;font-size:23.19px;color:#adadad;transform:scaleX(0.9405);">Remove</div>
<div class="r" style="left:1108px;top:335px;width:1195px;height:759px;background:#fff;box-shadow:0 0 0 1px #e4e4e4;"></div>
<div class="r" style="left:1112px;top:341px;width:1186px;height:44px;background:linear-gradient(#f8f8f8 0,#f8f8f8 45%,#efefef 45%,#eeeeee 100%);border:2px solid #8c8c8c;"></div>
<svg style="left:1124px;top:354.4px" width="22" height="18" viewBox="0 0 22 18"><path d="M0.5 0.5 H21.5 L11 17.5Z" fill="#707070"/></svg>
<div class="t" style="left:1159.00px;top:350.07px;font-size:23.91px;color:#111;font-weight:bold;transform:scaleX(0.9409);">Export Location</div>
<div class="t" style="left:1230.00px;top:412.30px;font-size:24.35px;color:#262626;transform:scaleX(0.9563);">Export To:</div>
<div class="r" style="left:1348px;top:408px;width:474px;height:32px;background:#fff;border-radius:8px;box-shadow:0 0 0 1px rgba(0,0,0,0.06),0 1.5px 2px rgba(0,0,0,0.22);"></div>
<div class="t" style="left:1361.00px;top:412.67px;font-size:23.91px;color:#262626;transform:scaleX(0.9823);">Same folder as original photo</div>
<div class="r" style="left:1794px;top:412px;width:24px;height:24px;background:linear-gradient(#4b8ef8,#2f78f4);border-radius:6px;"></div>
<svg style="left:1794px;top:412px" width="24" height="24" viewBox="0 0 24 24"><path d="M7.5 9.5 L12 5 L16.5 9.5 M7.5 14.5 L12 19 L16.5 14.5" fill="none" stroke="#fff" stroke-width="2.2" stroke-linecap="round" stroke-linejoin="round"/></svg>
<div class="t" style="left:1263.00px;top:461.70px;font-size:24.35px;color:#b3b3b3;transform:scaleX(0.9404);">Folder:</div>
<div class="t" style="left:1348.00px;top:461.70px;font-size:24.35px;color:#b3b3b3;transform:scaleX(0.9690);">(wherever each source photo is located)</div>
<div class="r" style="left:1343px;top:513px;width:24px;height:23px;background:#fff;border-radius:5px;box-shadow:0 0 0 1px rgba(0,0,0,0.18),0 1px 1.5px rgba(0,0,0,0.2);"></div>
<div class="t" style="left:1375.00px;top:513.30px;font-size:24.35px;color:#262626;transform:scaleX(0.9651);">Put in Subfolder:</div>
<div class="r" style="left:1575px;top:509px;width:678px;height:34px;background:#fff;box-shadow:0 0 0 1px #d8d8d8,inset 0 -1px 0 #c8c8c8;"></div>
<div class="r" style="left:1343px;top:562px;width:24px;height:23px;background:#fff;border-radius:5px;box-shadow:0 0 0 1px rgba(0,0,0,0.18),0 1px 1.5px rgba(0,0,0,0.2);"></div>
<div class="t" style="left:1375.00px;top:561.70px;font-size:24.35px;color:#262626;transform:scaleX(0.9647);">Add to This Catalog</div>
<div class="r" style="left:1672px;top:562px;width:24px;height:23px;background:#fff;border-radius:5px;box-shadow:0 0 0 1px rgba(0,0,0,0.10),0 1px 1.5px rgba(0,0,0,0.08);"></div>
<div class="t" style="left:1705.00px;top:561.70px;font-size:24.35px;color:#b3b3b3;transform:scaleX(0.9636);">Add to Stack:</div>
<div class="r" style="left:1871px;top:558px;width:219px;height:32px;background:#fff;border-radius:8px;box-shadow:0 0 0 1px rgba(0,0,0,0.07),0 1px 1.5px rgba(0,0,0,0.10);"></div>
<div class="t" style="left:1885.00px;top:562.30px;font-size:24.35px;color:#b3b3b3;transform:scaleX(0.9464);">Below Original</div>
<svg style="left:2067px;top:565px" width="12" height="18" viewBox="0 0 12 18"><path d="M2.5 7 L6 3.5 L9.5 7 M2.5 11 L6 14.5 L9.5 11" fill="none" stroke="#8a8a8a" stroke-width="1.8"/></svg>
<div class="t" style="left:1193.00px;top:615.30px;font-size:24.35px;color:#262626;transform:scaleX(0.9424);">Existing Files:</div>
<div class="r" style="left:1348px;top:612px;width:490px;height:32px;background:#fff;border-radius:8px;box-shadow:0 0 0 1px rgba(0,0,0,0.06),0 1.5px 2px rgba(0,0,0,0.22);"></div>
<div class="t" style="left:1361.00px;top:615.67px;font-size:23.91px;color:#262626;transform:scaleX(0.9769);">Ask what to do</div>
<div class="r" style="left:1810px;top:616px;width:24px;height:24px;background:linear-gradient(#4b8ef8,#2f78f4);border-radius:6px;"></div>
<svg style="left:1810px;top:616px" width="24" height="24" viewBox="0 0 24 24"><path d="M7.5 9.5 L12 5 L16.5 9.5 M7.5 14.5 L12 19 L16.5 14.5" fill="none" stroke="#fff" stroke-width="2.2" stroke-linecap="round" stroke-linejoin="round"/></svg>
<div class="r" style="left:1108px;top:670px;width:1195px;height:2px;background:#9c9c9c;"></div>
<div class="r" style="left:1112px;top:677px;width:1186px;height:44px;background:linear-gradient(#f8f8f8 0,#f8f8f8 45%,#efefef 45%,#eeeeee 100%);border:2px solid #8c8c8c;"></div>
<svg style="left:1124px;top:690px" width="22" height="18" viewBox="0 0 22 18"><path d="M0.5 0.5 H21.5 L11 17.5Z" fill="#707070"/></svg>
<div class="t" style="left:1159.00px;top:685.67px;font-size:23.91px;color:#111;font-weight:bold;transform:scaleX(0.9612);">File Naming</div>
<div class="r" style="left:1154px;top:747px;width:24px;height:24px;background:linear-gradient(#4b8ef8,#2f78f4);border-radius:5px;"></div>
<svg style="left:1154px;top:747px" width="24" height="24" viewBox="0 0 24 24"><path d="M5.5 12.5 L10 17.5 L18.5 6" fill="none" stroke="#fff" stroke-width="3" stroke-linecap="round" stroke-linejoin="round"/></svg>
<div class="t" style="left:1187.50px;top:746.30px;font-size:24.35px;color:#262626;transform:scaleX(0.9136);">Rename To:</div>
<div class="r" style="left:1348px;top:744px;width:903px;height:32px;background:#fff;border-radius:8px;box-shadow:0 0 0 1px rgba(0,0,0,0.06),0 1.5px 2px rgba(0,0,0,0.22);"></div>
<div class="t" style="left:1361.00px;top:747.67px;font-size:23.91px;color:#262626;transform:scaleX(0.9702);">Custom Name - Sequence</div>
<div class="r" style="left:2224px;top:748px;width:24px;height:24px;background:linear-gradient(#4b8ef8,#2f78f4);border-radius:6px;"></div>
<svg style="left:2224px;top:748px" width="24" height="24" viewBox="0 0 24 24"><path d="M7.5 9.5 L12 5 L16.5 9.5 M7.5 14.5 L12 19 L16.5 14.5" fill="none" stroke="#fff" stroke-width="2.2" stroke-linecap="round" stroke-linejoin="round"/></svg>
<div class="t" style="left:1198.00px;top:807.30px;font-size:24.35px;color:#262626;transform:scaleX(0.9637);">Custom Text:</div>
<div class="r" style="left:1348px;top:804px;width:524px;height:33px;background:#fff;box-shadow:0 0 0 1px #d8d8d8,inset 0 -1px 0 #c8c8c8;"></div>
<div class="t" style="left:1354.00px;top:807.30px;font-size:24.35px;color:#262626;transform:scaleX(0.9485);">Dice</div>
<div class="t" style="left:1913.00px;top:807.30px;font-size:24.35px;color:#262626;transform:scaleX(0.9735);">Start Number:</div>
<div class="r" style="left:2073px;top:804px;width:180px;height:33px;background:#fff;box-shadow:0 0 0 1px #d8d8d8,inset 0 -1px 0 #c8c8c8;"></div>
<div class="t" style="left:2081.00px;top:807.30px;font-size:24.35px;color:#262626;">1</div>
<div class="t" style="left:1242.00px;top:863.60px;font-size:24.35px;color:#262626;transform:scaleX(0.9098);">Example:</div>
<div class="t" style="left:1347.00px;top:863.60px;font-size:24.35px;color:#262626;transform:scaleX(0.9530);">Dice-1.jpg</div>
<div class="t" style="left:1941.00px;top:863.60px;font-size:24.35px;color:#262626;transform:scaleX(0.9492);">Extensions:</div>
<div class="r" style="left:2073px;top:860px;width:179px;height:32px;background:#fff;border-radius:8px;box-shadow:0 0 0 1px rgba(0,0,0,0.06),0 1.5px 2px rgba(0,0,0,0.22);"></div>
<div class="t" style="left:2086.00px;top:863.97px;font-size:23.91px;color:#262626;transform:scaleX(0.9524);">Lowercase</div>
<div class="r" style="left:2224px;top:864px;width:24px;height:24px;background:linear-gradient(#4b8ef8,#2f78f4);border-radius:6px;"></div>
<svg style="left:2224px;top:864px" width="24" height="24" viewBox="0 0 24 24"><path d="M7.5 9.5 L12 5 L16.5 9.5 M7.5 14.5 L12 19 L16.5 14.5" fill="none" stroke="#fff" stroke-width="2.2" stroke-linecap="round" stroke-linejoin="round"/></svg>
<div class="r" style="left:1108px;top:917px;width:1195px;height:2px;background:#9c9c9c;"></div>
<div class="r" style="left:1112px;top:925px;width:1186px;height:45px;background:linear-gradient(#f8f8f8 0,#f8f8f8 45%,#efefef 45%,#eeeeee 100%);border:2px solid #8c8c8c;"></div>
<svg style="left:1128px;top:936.1px" width="18" height="22" viewBox="0 0 18 22"><path d="M0 0 V22 L17.6 11Z" fill="#707070"/></svg>
<div class="t" style="left:1159.00px;top:933.27px;font-size:23.91px;color:#111;font-weight:bold;transform:scaleX(0.9749);">Video</div>
<div class="r" style="left:1108px;top:974px;width:1195px;height:2px;background:#9c9c9c;"></div>
<div class="r" style="left:1112px;top:981px;width:1186px;height:45px;background:linear-gradient(#f8f8f8 0,#f8f8f8 45%,#efefef 45%,#eeeeee 100%);border:2px solid #8c8c8c;"></div>
<svg style="left:1124px;top:994px" width="22" height="18" viewBox="0 0 22 18"><path d="M0.5 0.5 H21.5 L11 17.5Z" fill="#707070"/></svg>
<div class="t" style="left:1159.00px;top:989.67px;font-size:23.91px;color:#111;font-weight:bold;transform:scaleX(0.9718);">File Settings</div>
<div class="t" style="left:1186.00px;top:1051.30px;font-size:24.35px;color:#262626;transform:scaleX(0.9389);">Image Format:</div>
<div class="r" style="left:1357px;top:1049px;width:357px;height:32px;background:#fff;border-radius:8px;box-shadow:0 0 0 1px rgba(0,0,0,0.06),0 1.5px 2px rgba(0,0,0,0.22);"></div>
<div class="t" style="left:1371.00px;top:1051.67px;font-size:23.91px;color:#262626;transform:scaleX(0.8818);">JPEG</div>
<div class="r" style="left:1686px;top:1053px;width:24px;height:24px;background:linear-gradient(#4b8ef8,#2f78f4);border-radius:6px;"></div>
<svg style="left:1686px;top:1053px" width="24" height="24" viewBox="0 0 24 24"><path d="M7.5 9.5 L12 5 L16.5 9.5 M7.5 14.5 L12 19 L16.5 14.5" fill="none" stroke="#fff" stroke-width="2.2" stroke-linecap="round" stroke-linejoin="round"/></svg>
<div class="r" style="left:688px;top:1234px;width:262px;height:38px;background:#fff;border-radius:7px;box-shadow:0 0 0 1px rgba(0,0,0,0.07),0 1.5px 2px rgba(0,0,0,0.22);"></div>
<div class="t" style="left:709.50px;top:1238.33px;font-size:26.67px;color:#262626;transform:scaleX(1.0087);">Plug-in Manager...</div>
<div class="t" style="left:1565.00px;top:1256.59px;font-size:23.19px;color:#2737e6;transform:scaleX(0.9810);">Learn More</div>
<div class="r" style="left:1710px;top:1250px;width:156px;height:38px;background:#fff;border-radius:7px;box-shadow:0 0 0 1px rgba(0,0,0,0.07),0 1.5px 2px rgba(0,0,0,0.22);"></div>
<div class="t" style="left:1758.00px;top:1254.46px;font-size:27.10px;color:#262626;transform:scaleX(0.9457);">Done</div>
<div class="r" style="left:1890px;top:1250px;width:156px;height:38px;background:#fff;border-radius:7px;box-shadow:0 0 0 1px rgba(0,0,0,0.07),0 1.5px 2px rgba(0,0,0,0.22);"></div>
<div class="t" style="left:1927.50px;top:1254.46px;font-size:27.10px;color:#262626;transform:scaleX(0.9643);">Cancel</div>
<div class="r" style="left:2070px;top:1250px;width:234px;height:38px;background:linear-gradient(#4a8ef8,#2f77f4);border-radius:7px;box-shadow:0 1px 1.5px rgba(0,0,0,0.2);"></div>
<div class="t" style="left:2148.40px;top:1254.46px;font-size:27.10px;color:#fff;transform:scaleX(0.9872);">Export</div>
</body></html>
